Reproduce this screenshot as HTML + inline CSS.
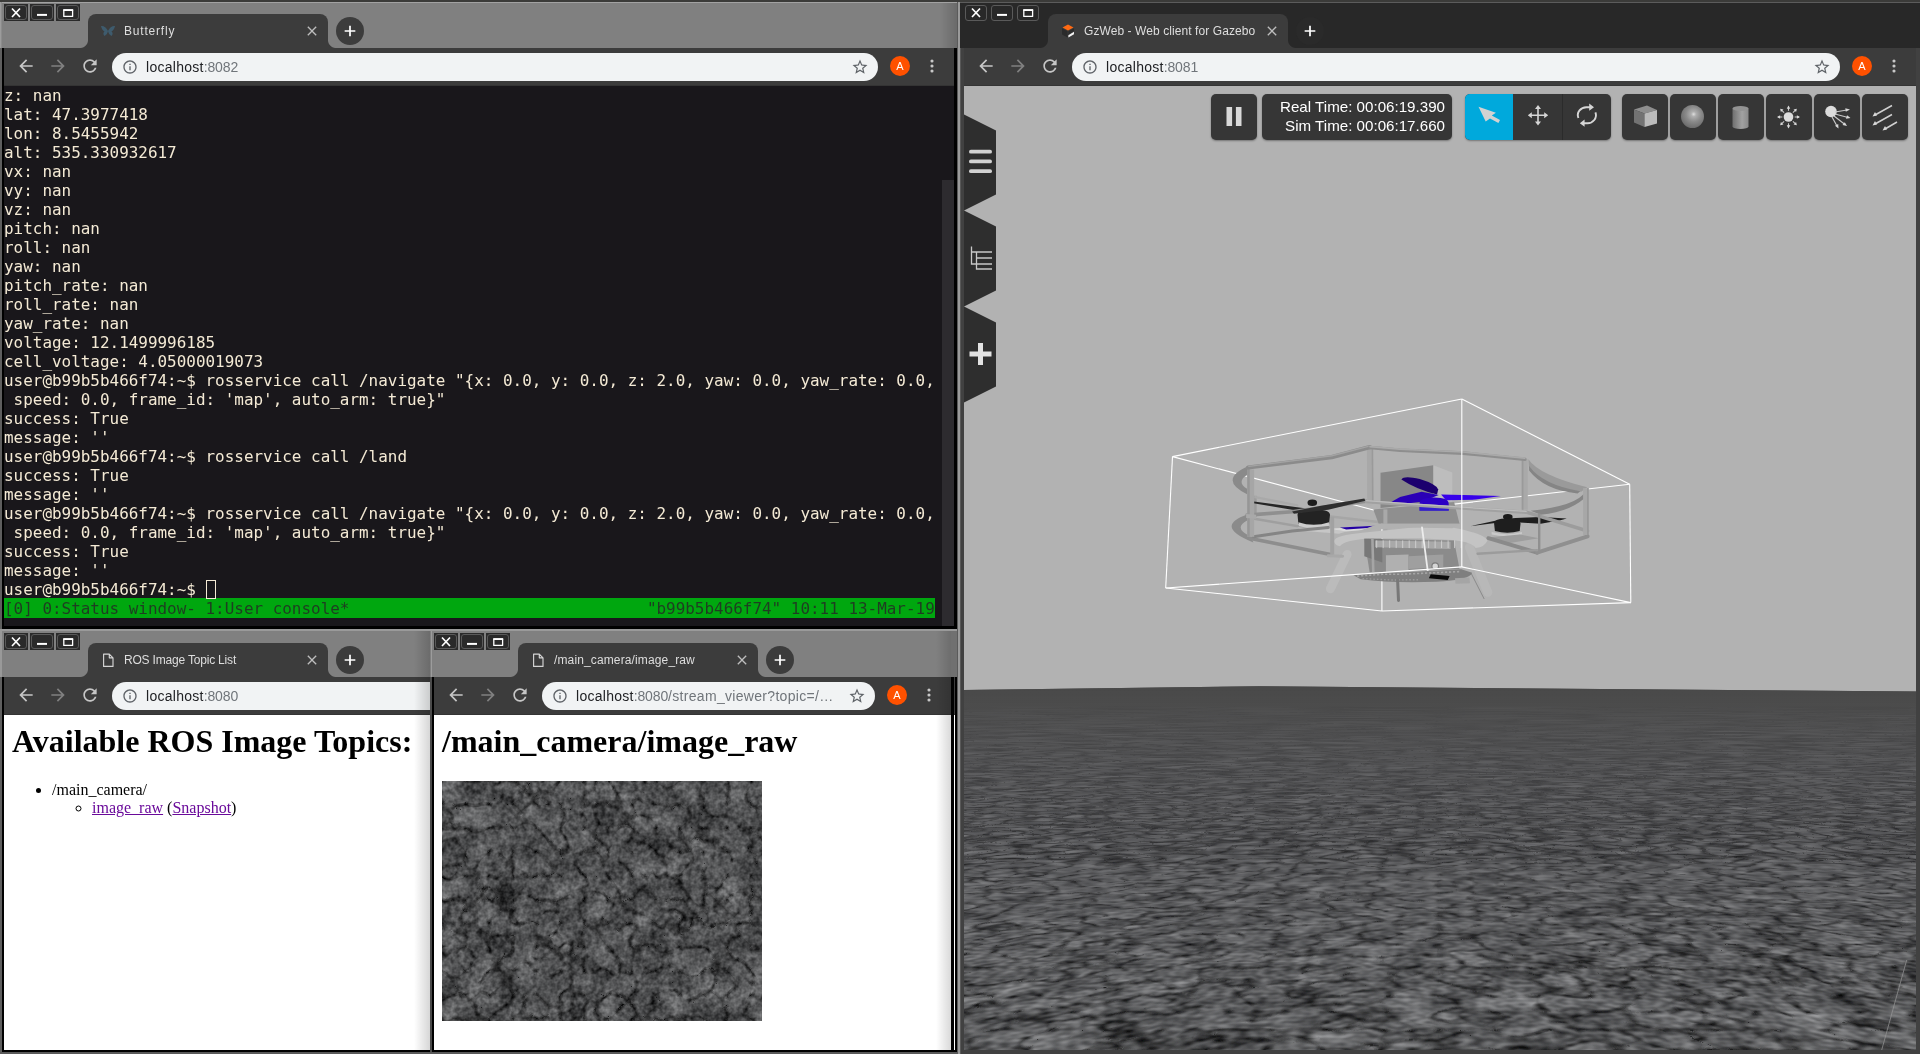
<!DOCTYPE html>
<html lang="en">
<head>
<meta charset="utf-8">
<title>Desktop</title>
<style>
html,body{margin:0;padding:0;}
body{width:1920px;height:1054px;overflow:hidden;background:#3b3b39;position:relative;font-family:"Liberation Sans","DejaVu Sans",sans-serif;}
#root{position:absolute;left:0;top:0;width:1920px;height:1054px;will-change:transform;}
.abs{position:absolute;}
.frame{position:absolute;background:#000;}
.title{position:absolute;height:48px;background:#808080;}
.title.act{background:#282828;}
.win{position:absolute;width:0;height:0;}
.wb{position:absolute;top:4px;width:24px;height:17px;background:#2a2a2a;}
.wb i{position:absolute;left:1px;top:1px;right:1px;bottom:1px;border:1px solid #5a5a5a;box-sizing:border-box;background:#2a2a2a;border-radius:3px;display:block;}
.active .wb{background:none;}
.active .wb i{left:1px;top:1px;right:1px;bottom:0px;background:#282828;}
.wb svg{position:absolute;left:0;top:0;width:24px;height:17px;}
.tab{position:absolute;top:14px;height:34px;background:#3c3c3c;border-radius:8px 8px 0 0;}
.tab:before,.tab:after{content:"";position:absolute;bottom:0;width:8px;height:8px;}
.tab:before{left:-8px;background:radial-gradient(circle at 0 0,rgba(60,60,60,0) 7.500px,#3c3c3c 8.500px);}
.tab:after{right:-8px;background:radial-gradient(circle at 100% 0,rgba(60,60,60,0) 7.500px,#3c3c3c 8.500px);}
.fav{position:absolute;left:12px;top:9px;width:16px;height:16px;}
.tabt{position:absolute;top:9px;font-size:12px;line-height:16px;color:#dedede;white-space:nowrap;}
.tabx{position:absolute;right:8px;top:9px;width:16px;height:16px;}
.newtab{position:absolute;top:17px;width:28px;height:28px;border-radius:14px;background:#3c3c3c;}
.active .newtab{background:#2a2a2a;}
.newtab svg{position:absolute;left:6px;top:6px;width:16px;height:16px;}
.toolbar{position:absolute;left:0;top:48px;height:38px;background:#3c3c3c;border-bottom:1px solid #343434;box-sizing:border-box;}
.nav{position:absolute;top:8px;width:20px;height:20px;}
.pill{position:absolute;top:5px;height:28px;border-radius:14px;background:#f1f3f4;overflow:hidden;}
.pill .info{position:absolute;left:10px;top:6px;width:16px;height:16px;}
.pill .url{position:absolute;left:34px;top:5px;font-size:14px;line-height:18px;color:#202124;white-space:nowrap;}
.pill .url{letter-spacing:0.270px;}
.pill .url span{color:#70757a;letter-spacing:-0.140px;}
.pill .url span i{font-style:normal;letter-spacing:0.310px;}
.pill .star{position:absolute;right:9px;top:5px;width:18px;height:18px;}
.avatar{position:absolute;top:8px;width:20px;height:20px;border-radius:10px;background:#ff5100;color:#fff;font-size:11px;line-height:20px;text-align:center;}
.menu{position:absolute;top:8px;width:20px;height:20px;}
.content{position:absolute;left:0;top:86px;overflow:hidden;}
/* terminal */
.term{background:#19171b;color:#f4ead5;font-family:"DejaVu Sans Mono","Liberation Mono",monospace;font-size:15.945px;line-height:19px;}
.term pre{margin:0;padding:0;font:inherit;white-space:pre;}
.term .st{display:block;margin-top:-1px;padding-top:1px;background:#00a70f;color:#1f3d22;width:97ch;}
.cur{display:inline-block;position:relative;width:0;height:0;vertical-align:top;}
.cur:after{content:"";position:absolute;left:0;top:0;width:8.600px;height:17px;border:1px solid #f4ead5;}
/* web pages */
.page{background:#fff;color:#000;font-family:"Liberation Serif","DejaVu Serif",serif;font-size:16px;}
.page h1{font-size:32px;line-height:37px;margin:8px 0 21px 8px;font-weight:bold;white-space:nowrap;}
.page ul{margin:0;padding-left:40px;line-height:18px;}
.page>ul{margin-left:8px;}
.page a{color:#6a0a9a;text-decoration:underline;}
/* gazebo */
.gz{background:#b2b2b2;}
.gbtn{position:absolute;top:8px;height:46px;background:#363636;border-radius:5px;box-shadow:0 1px 2px rgba(0,0,0,.35);}
.gtime{color:#fff;font-family:"Liberation Sans",sans-serif;font-size:15.150px;line-height:19px;text-align:right;white-space:pre;}
</style>
</head>
<body>
<div id="root">
<!-- desktop / frames behind -->

<div class="frame" style="left:2px;top:677px;width:956px;height:375px;background:#000"></div>
<div class="title" style="left:0px;top:629px;width:958px"></div>
<div class="win w3" style="left:4px;top:629px">
<div class="wb" style="left:0px"><i></i><svg viewBox="0 0 24 17"><path d="M8 4.500l8 8.500M16 4.500l-8 8.500" stroke="#fff" stroke-width="1.700" fill="none"/></svg></div><div class="wb" style="left:26px"><i></i><svg viewBox="0 0 24 17"><path d="M7 10.900h10" stroke="#fff" stroke-width="2" fill="none"/></svg></div><div class="wb" style="left:52px"><i></i><svg viewBox="0 0 24 17"><path d="M7.800 6.400h8.800v6h-8.800z" stroke="#fff" stroke-width="1.300" fill="none" stroke-linejoin="round"/><path d="M7.200 6h10" stroke="#fff" stroke-width="1.800"/></svg></div>
<div class="tab" style="left:84px;width:240px"><svg class="fav" viewBox="0 0 16 16"><path fill="none" stroke="#d4d4d4" stroke-width="1.150" stroke-linejoin="round" d="M3.600 2.100h5.700l3.700 3.700v8.600H3.600zM9.300 2.100v3.700h3.700"/></svg><span class="tabt" style="left:36px"><span style="letter-spacing:-0.19px">ROS Image Topic List</span></span><svg class="tabx" viewBox="0 0 24 24"><path fill="#bdbdbd" d="M19 6.410L17.590 5 12 10.590 6.410 5 5 6.410 10.590 12 5 17.590 6.410 19 12 13.410 17.590 19 19 17.590 13.410 12z"/></svg></div>
<div class="newtab" style="left:332px"><svg viewBox="0 0 24 24"><path fill="#ffffff" d="M20 13.300h-6.700V20h-2.600v-6.700H4v-2.600h6.700V4h2.600v6.700H20v2.600z"/></svg></div>
<div class="toolbar" style="width:951px">
<svg class="nav" style="left:12px" viewBox="0 0 24 24"><path fill="#c6c6c6" d="M20 11H7.83l5.59-5.59L12 4l-8 8 8 8 1.41-1.41L7.83 13H20v-2z"/></svg>
<svg class="nav" style="left:44px" viewBox="0 0 24 24"><path fill="#808080" d="M12 4l-1.41 1.41L16.17 11H4v2h12.17l-5.58 5.59L12 20l8-8z"/></svg>
<svg class="nav" style="left:76px" viewBox="0 0 24 24"><path fill="#c6c6c6" d="M17.65 6.35C16.2 4.9 14.21 4 12 4c-4.42 0-7.99 3.58-7.99 8s3.57 8 7.99 8c3.73 0 6.84-2.55 7.73-6h-2.08c-.82 2.33-3.04 4-5.65 4-3.31 0-6-2.69-6-6s2.69-6 6-6c1.66 0 3.14.69 4.22 1.78L13 11h7V4l-2.35 2.35z"/></svg>
<div class="pill" style="left:108px;width:766.5px"><svg class="info" viewBox="0 0 24 24"><path fill="#5f6368" d="M11 17h2v-6h-2v6zm1-15C6.48 2 2 6.48 2 12s4.48 10 10 10 10-4.48 10-10S17.52 2 12 2zm0 18c-4.41 0-8-3.59-8-8s3.590-8 8-8 8 3.590 8 8-3.590 8-8 8zM11 9h2V7h-2v2z"/></svg><span class="url">localhost<span>:8080</span></span><svg class="star" viewBox="0 0 24 24"><path fill="#5f6368" d="M22 9.240l-7.190-.620L12 2 9.190 8.630 2 9.240l5.460 4.730L5.820 21 12 17.270 18.180 21l-1.630-7.030L22 9.240zM12 15.400l-3.760 2.270 1-4.280-3.320-2.880 4.380-.380L12 6.100l1.710 4.040 4.380.380-3.320 2.880 1 4.280L12 15.400z"/></svg></div>
<div class="avatar" style="left:887px">A</div>
<svg class="menu" style="left:919px" viewBox="0 0 24 24"><circle cx="12" cy="6" r="1.900" fill="#c8c8c8"/><circle cx="12" cy="12" r="1.900" fill="#c8c8c8"/><circle cx="12" cy="18" r="1.900" fill="#c8c8c8"/></svg>
</div>
<div class="content" style="width:951px;height:335px"><div class="page" style="position:absolute;left:0;top:0;width:951px;height:335px;">
<h1>Available ROS Image Topics:</h1>
<ul><li>/main_camera/<ul style="list-style-type:circle"><li><a>image_raw</a> (<a>Snapshot</a>)</li></ul></li></ul>
</div>
</div>
</div>
<div class="frame" style="left:432px;top:677px;width:522px;height:375px;background:#000"></div>
<div class="title" style="left:431px;top:629px;width:523px"></div>
<div class="win w4" style="left:434px;top:629px">
<div class="wb" style="left:0px"><i></i><svg viewBox="0 0 24 17"><path d="M8 4.500l8 8.500M16 4.500l-8 8.500" stroke="#fff" stroke-width="1.700" fill="none"/></svg></div><div class="wb" style="left:26px"><i></i><svg viewBox="0 0 24 17"><path d="M7 10.900h10" stroke="#fff" stroke-width="2" fill="none"/></svg></div><div class="wb" style="left:52px"><i></i><svg viewBox="0 0 24 17"><path d="M7.800 6.400h8.800v6h-8.800z" stroke="#fff" stroke-width="1.300" fill="none" stroke-linejoin="round"/><path d="M7.200 6h10" stroke="#fff" stroke-width="1.800"/></svg></div>
<div class="tab" style="left:84px;width:240px"><svg class="fav" viewBox="0 0 16 16"><path fill="none" stroke="#d4d4d4" stroke-width="1.150" stroke-linejoin="round" d="M3.600 2.100h5.700l3.700 3.700v8.600H3.600zM9.300 2.100v3.700h3.700"/></svg><span class="tabt" style="left:36px"><span style="letter-spacing:0.13px">/main_camera/image_raw</span></span><svg class="tabx" viewBox="0 0 24 24"><path fill="#bdbdbd" d="M19 6.410L17.590 5 12 10.590 6.410 5 5 6.410 10.590 12 5 17.590 6.410 19 12 13.410 17.590 19 19 17.590 13.410 12z"/></svg></div>
<div class="newtab" style="left:332px"><svg viewBox="0 0 24 24"><path fill="#ffffff" d="M20 13.300h-6.700V20h-2.600v-6.700H4v-2.600h6.700V4h2.600v6.700H20v2.600z"/></svg></div>
<div class="toolbar" style="width:517px">
<svg class="nav" style="left:12px" viewBox="0 0 24 24"><path fill="#c6c6c6" d="M20 11H7.83l5.59-5.59L12 4l-8 8 8 8 1.41-1.41L7.83 13H20v-2z"/></svg>
<svg class="nav" style="left:44px" viewBox="0 0 24 24"><path fill="#808080" d="M12 4l-1.41 1.41L16.17 11H4v2h12.17l-5.58 5.59L12 20l8-8z"/></svg>
<svg class="nav" style="left:76px" viewBox="0 0 24 24"><path fill="#c6c6c6" d="M17.65 6.35C16.2 4.9 14.21 4 12 4c-4.42 0-7.99 3.58-7.99 8s3.57 8 7.99 8c3.73 0 6.84-2.55 7.73-6h-2.08c-.82 2.33-3.04 4-5.65 4-3.31 0-6-2.69-6-6s2.69-6 6-6c1.66 0 3.14.69 4.22 1.78L13 11h7V4l-2.35 2.35z"/></svg>
<div class="pill" style="left:108px;width:332.5px"><svg class="info" viewBox="0 0 24 24"><path fill="#5f6368" d="M11 17h2v-6h-2v6zm1-15C6.48 2 2 6.48 2 12s4.48 10 10 10 10-4.48 10-10S17.52 2 12 2zm0 18c-4.41 0-8-3.59-8-8s3.590-8 8-8 8 3.590 8 8-3.590 8-8 8zM11 9h2V7h-2v2z"/></svg><span class="url">localhost<span>:8080<i>/stream_viewer?topic=/…</i></span></span><svg class="star" viewBox="0 0 24 24"><path fill="#5f6368" d="M22 9.240l-7.190-.620L12 2 9.190 8.630 2 9.240l5.460 4.730L5.820 21 12 17.270 18.180 21l-1.630-7.030L22 9.240zM12 15.400l-3.760 2.270 1-4.280-3.320-2.880 4.380-.380L12 6.100l1.710 4.040 4.380.380-3.320 2.880 1 4.280L12 15.400z"/></svg></div>
<div class="avatar" style="left:453px">A</div>
<svg class="menu" style="left:485px" viewBox="0 0 24 24"><circle cx="12" cy="6" r="1.900" fill="#c8c8c8"/><circle cx="12" cy="12" r="1.900" fill="#c8c8c8"/><circle cx="12" cy="18" r="1.900" fill="#c8c8c8"/></svg>
</div>
<div class="content" style="width:517px;height:335px"><div class="page" style="position:absolute;left:0;top:0;width:517px;height:335px;">
<h1>/main_camera/image_raw</h1>
<svg class="abs" style="left:8px;top:66px" width="320" height="240" viewBox="0 0 320 240">
<defs>
<filter id="cam" x="0" y="0" width="100%" height="100%" color-interpolation-filters="sRGB">
<feTurbulence type="fractalNoise" baseFrequency="0.04" numOctaves="2" seed="11" result="lo"/>
<feTurbulence type="turbulence" baseFrequency="0.042" numOctaves="2" seed="5" result="cr"/>
<feTurbulence type="fractalNoise" baseFrequency="0.22" numOctaves="2" seed="2" result="hi"/>
<feColorMatrix in="lo" type="matrix" values="0.36 0 0 0 0.150  0.36 0 0 0 0.153  0.36 0 0 0 0.158  0 0 0 0 1" result="lo2"/>
<feColorMatrix in="cr" type="matrix" values="2.8 0 0 0 0.40  2.8 0 0 0 0.40  2.8 0 0 0 0.40  0 0 0 0 1" result="cr2"/>
<feComposite in="lo2" in2="cr2" operator="arithmetic" k1="1" k2="0" k3="0" k4="0" result="m"/>
<feColorMatrix in="hi" type="matrix" values="1 0 0 0 0  1 0 0 0 0  1 0 0 0 0  0 0 0 0 1" result="hi2"/>
<feComposite in="m" in2="hi2" operator="arithmetic" k1="0" k2="1" k3="0.36" k4="-0.18" result="f"/>
<feGaussianBlur in="f" stdDeviation="0.6"/>
</filter>
</defs>
<rect x="0" y="0" width="320" height="240" fill="#4b4c4e" filter="url(#cam)"/>
</svg>
</div>
</div>
</div>
<div class="frame" style="left:2px;top:48px;width:955px;height:581px;background:#000"></div>
<div class="title" style="left:0px;top:0px;width:957px"></div>
<div class="win w1" style="left:4px;top:0px">
<div class="wb" style="left:0px"><i></i><svg viewBox="0 0 24 17"><path d="M8 4.500l8 8.500M16 4.500l-8 8.500" stroke="#fff" stroke-width="1.700" fill="none"/></svg></div><div class="wb" style="left:26px"><i></i><svg viewBox="0 0 24 17"><path d="M7 10.900h10" stroke="#fff" stroke-width="2" fill="none"/></svg></div><div class="wb" style="left:52px"><i></i><svg viewBox="0 0 24 17"><path d="M7.800 6.400h8.800v6h-8.800z" stroke="#fff" stroke-width="1.300" fill="none" stroke-linejoin="round"/><path d="M7.200 6h10" stroke="#fff" stroke-width="1.800"/></svg></div>
<div class="tab" style="left:84px;width:240px"><svg class="fav" viewBox="0 0 16 16"><path fill="#3e5b6d" d="M8 8C6.500 4.500 3.500 2.500 1 3c.500 2.500 1.500 4.500 3.500 5.500C3 9.500 3 11.500 4.500 13 6.500 12 7.500 10 8 8zM8 8c1.500-3.500 4.500-5.500 7-5-.500 2.500-1.500 4.500-3.500 5.500 1.500 1 1.500 3 0 4.500C9.500 12 8.500 10 8 8z"/></svg>
<span class="tabt" style="left:36px"><span style="letter-spacing:0.8px">Butterfly</span></span><svg class="tabx" viewBox="0 0 24 24"><path fill="#bdbdbd" d="M19 6.410L17.590 5 12 10.590 6.410 5 5 6.410 10.590 12 5 17.590 6.410 19 12 13.410 17.590 19 19 17.590 13.410 12z"/></svg></div>
<div class="newtab" style="left:332px"><svg viewBox="0 0 24 24"><path fill="#ffffff" d="M20 13.300h-6.700V20h-2.600v-6.700H4v-2.600h6.700V4h2.600v6.700H20v2.600z"/></svg></div>
<div class="toolbar" style="width:950px">
<svg class="nav" style="left:12px" viewBox="0 0 24 24"><path fill="#c6c6c6" d="M20 11H7.83l5.59-5.59L12 4l-8 8 8 8 1.41-1.41L7.83 13H20v-2z"/></svg>
<svg class="nav" style="left:44px" viewBox="0 0 24 24"><path fill="#808080" d="M12 4l-1.41 1.41L16.17 11H4v2h12.17l-5.58 5.59L12 20l8-8z"/></svg>
<svg class="nav" style="left:76px" viewBox="0 0 24 24"><path fill="#c6c6c6" d="M17.65 6.35C16.2 4.9 14.21 4 12 4c-4.42 0-7.99 3.58-7.99 8s3.57 8 7.99 8c3.73 0 6.84-2.55 7.73-6h-2.08c-.82 2.33-3.04 4-5.65 4-3.31 0-6-2.69-6-6s2.69-6 6-6c1.66 0 3.14.69 4.22 1.78L13 11h7V4l-2.35 2.35z"/></svg>
<div class="pill" style="left:108px;width:765.5px"><svg class="info" viewBox="0 0 24 24"><path fill="#5f6368" d="M11 17h2v-6h-2v6zm1-15C6.48 2 2 6.48 2 12s4.48 10 10 10 10-4.48 10-10S17.52 2 12 2zm0 18c-4.41 0-8-3.59-8-8s3.590-8 8-8 8 3.590 8 8-3.590 8-8 8zM11 9h2V7h-2v2z"/></svg><span class="url">localhost<span>:8082</span></span><svg class="star" viewBox="0 0 24 24"><path fill="#5f6368" d="M22 9.240l-7.190-.620L12 2 9.190 8.630 2 9.240l5.460 4.730L5.820 21 12 17.270 18.180 21l-1.630-7.030L22 9.240zM12 15.400l-3.760 2.270 1-4.280-3.320-2.880 4.380-.380L12 6.100l1.710 4.040 4.380.380-3.320 2.880 1 4.280L12 15.400z"/></svg></div>
<div class="avatar" style="left:886px">A</div>
<svg class="menu" style="left:918px" viewBox="0 0 24 24"><circle cx="12" cy="6" r="1.900" fill="#c8c8c8"/><circle cx="12" cy="12" r="1.900" fill="#c8c8c8"/><circle cx="12" cy="18" r="1.900" fill="#c8c8c8"/></svg>
</div>
<div class="content" style="width:950px;height:540px"><div class="term" style="position:absolute;left:0;top:0;width:950px;height:540px;">
<pre>z: nan
lat: 47.3977418
lon: 8.5455942
alt: 535.330932617
vx: nan
vy: nan
vz: nan
pitch: nan
roll: nan
yaw: nan
pitch_rate: nan
roll_rate: nan
yaw_rate: nan
voltage: 12.1499996185
cell_voltage: 4.05000019073
user@b99b5b466f74:~$ rosservice call /navigate "{x: 0.0, y: 0.0, z: 2.0, yaw: 0.0, yaw_rate: 0.0,
 speed: 0.0, frame_id: 'map', auto_arm: true}"
success: True
message: ''
user@b99b5b466f74:~$ rosservice call /land
success: True
message: ''
user@b99b5b466f74:~$ rosservice call /navigate "{x: 0.0, y: 0.0, z: 2.0, yaw: 0.0, yaw_rate: 0.0,
 speed: 0.0, frame_id: 'map', auto_arm: true}"
success: True
message: ''
user@b99b5b466f74:~$ <span class="cur"></span>
<span class="st">[0] 0:Status window- 1:User console*                               "b99b5b466f74" 10:11 13-Mar-19</span></pre>
<div class="abs" style="left:938px;top:94px;width:12px;height:446px;background:#2d2b2f"></div>
</div>
</div>
</div>
<div class="frame" style="left:960px;top:48px;width:960px;height:1006px;background:#414141"></div>
<div class="title act" style="left:960px;top:0px;width:960px"></div>
<div class="win w2 active" style="left:964px;top:0px">
<div class="wb" style="left:0px"><i></i><svg viewBox="0 0 24 17"><path d="M8 4.500l8 8.500M16 4.500l-8 8.500" stroke="#fff" stroke-width="1.700" fill="none"/></svg></div><div class="wb" style="left:26px"><i></i><svg viewBox="0 0 24 17"><path d="M7 10.900h10" stroke="#fff" stroke-width="2" fill="none"/></svg></div><div class="wb" style="left:52px"><i></i><svg viewBox="0 0 24 17"><path d="M7.800 6.400h8.800v6h-8.800z" stroke="#fff" stroke-width="1.300" fill="none" stroke-linejoin="round"/><path d="M7.200 6h10" stroke="#fff" stroke-width="1.800"/></svg></div>
<div class="tab" style="left:84px;width:240px"><svg class="fav" viewBox="0 0 16 16"><path fill="#ff6a13" d="M8 1.500l5.500 3L8 7.500l-5.500-3z"/><path fill="#2b2b2b" d="M2 5.300l5.600 3v6.200L2 11.500z"/><path fill="#f2f2f2" d="M8.400 12.200l5.600-3.400v2.400l-5.600 3.300z"/><path fill="#2b2b2b" d="M8.400 8.300l5.600-3v2.800l-5.600 3.400z"/></svg>
<span class="tabt" style="left:36px"><span style="letter-spacing:0.08px">GzWeb - Web client for Gazebo</span></span><svg class="tabx" viewBox="0 0 24 24"><path fill="#bdbdbd" d="M19 6.410L17.590 5 12 10.590 6.410 5 5 6.410 10.590 12 5 17.590 6.410 19 12 13.410 17.590 19 19 17.590 13.410 12z"/></svg></div>
<div class="newtab" style="left:332px"><svg viewBox="0 0 24 24"><path fill="#ffffff" d="M20 13.300h-6.700V20h-2.600v-6.700H4v-2.600h6.700V4h2.600v6.700H20v2.600z"/></svg></div>
<div class="toolbar" style="width:952px">
<svg class="nav" style="left:12px" viewBox="0 0 24 24"><path fill="#c6c6c6" d="M20 11H7.83l5.59-5.59L12 4l-8 8 8 8 1.41-1.41L7.83 13H20v-2z"/></svg>
<svg class="nav" style="left:44px" viewBox="0 0 24 24"><path fill="#808080" d="M12 4l-1.41 1.41L16.17 11H4v2h12.17l-5.58 5.59L12 20l8-8z"/></svg>
<svg class="nav" style="left:76px" viewBox="0 0 24 24"><path fill="#c6c6c6" d="M17.65 6.35C16.2 4.9 14.21 4 12 4c-4.42 0-7.99 3.58-7.99 8s3.57 8 7.99 8c3.73 0 6.84-2.55 7.73-6h-2.08c-.82 2.33-3.04 4-5.65 4-3.31 0-6-2.69-6-6s2.69-6 6-6c1.66 0 3.14.69 4.22 1.78L13 11h7V4l-2.35 2.35z"/></svg>
<div class="pill" style="left:108px;width:767.5px"><svg class="info" viewBox="0 0 24 24"><path fill="#5f6368" d="M11 17h2v-6h-2v6zm1-15C6.48 2 2 6.48 2 12s4.48 10 10 10 10-4.48 10-10S17.52 2 12 2zm0 18c-4.41 0-8-3.59-8-8s3.590-8 8-8 8 3.590 8 8-3.590 8-8 8zM11 9h2V7h-2v2z"/></svg><span class="url">localhost<span>:8081</span></span><svg class="star" viewBox="0 0 24 24"><path fill="#5f6368" d="M22 9.240l-7.190-.620L12 2 9.190 8.630 2 9.240l5.460 4.730L5.820 21 12 17.270 18.180 21l-1.630-7.030L22 9.240zM12 15.400l-3.760 2.270 1-4.280-3.320-2.880 4.380-.380L12 6.100l1.710 4.040 4.380.380-3.320 2.880 1 4.280L12 15.400z"/></svg></div>
<div class="avatar" style="left:888px">A</div>
<svg class="menu" style="left:920px" viewBox="0 0 24 24"><circle cx="12" cy="6" r="1.900" fill="#c8c8c8"/><circle cx="12" cy="12" r="1.900" fill="#c8c8c8"/><circle cx="12" cy="18" r="1.900" fill="#c8c8c8"/></svg>
</div>
<div class="content" style="width:952px;height:964px"><div class="gz" style="position:absolute;left:0;top:0;width:952px;height:964px;overflow:hidden;">
<svg class="abs" style="left:0;top:0" width="952" height="964" viewBox="0 0 952 964">
<defs>
<filter id="g0" x="0" y="0" width="100%" height="100%" color-interpolation-filters="sRGB"><feTurbulence type="fractalNoise" baseFrequency="0.01600" numOctaves="2" seed="21" result="lo"/><feTurbulence type="turbulence" baseFrequency="0.01700" numOctaves="2" seed="24" result="cr"/><feTurbulence type="fractalNoise" baseFrequency="0.09000" numOctaves="1" seed="26" result="hi"/><feColorMatrix in="lo" type="matrix" values="0.40 0 0 0 0.180  0.40 0 0 0 0.183  0.40 0 0 0 0.190  0 0 0 0 1" result="lo2"/><feColorMatrix in="cr" type="matrix" values="2.7 0 0 0 0.38  2.7 0 0 0 0.38  2.7 0 0 0 0.38  0 0 0 0 1" result="cr2"/><feComposite in="lo2" in2="cr2" operator="arithmetic" k1="1" k2="0" k3="0" k4="0" result="m"/><feColorMatrix in="hi" type="matrix" values="1 0 0 0 0  1 0 0 0 0  1 0 0 0 0  0 0 0 0 1" result="hi2"/><feComposite in="m" in2="hi2" operator="arithmetic" k1="0" k2="1" k3="0.44" k4="-0.22"/></filter>
<filter id="g1" x="0" y="0" width="100%" height="100%" color-interpolation-filters="sRGB"><feTurbulence type="fractalNoise" baseFrequency="0.01600" numOctaves="2" seed="21" result="lo"/><feTurbulence type="turbulence" baseFrequency="0.01700" numOctaves="2" seed="24" result="cr"/><feTurbulence type="fractalNoise" baseFrequency="0.09000" numOctaves="1" seed="26" result="hi"/><feColorMatrix in="lo" type="matrix" values="0.40 0 0 0 0.180  0.40 0 0 0 0.183  0.40 0 0 0 0.190  0 0 0 0 1" result="lo2"/><feColorMatrix in="cr" type="matrix" values="2.7 0 0 0 0.38  2.7 0 0 0 0.38  2.7 0 0 0 0.38  0 0 0 0 1" result="cr2"/><feComposite in="lo2" in2="cr2" operator="arithmetic" k1="1" k2="0" k3="0" k4="0" result="m"/><feColorMatrix in="hi" type="matrix" values="1 0 0 0 0  1 0 0 0 0  1 0 0 0 0  0 0 0 0 1" result="hi2"/><feComposite in="m" in2="hi2" operator="arithmetic" k1="0" k2="1" k3="0.44" k4="-0.22"/></filter>
<filter id="g2" x="0" y="0" width="100%" height="100%" color-interpolation-filters="sRGB"><feTurbulence type="fractalNoise" baseFrequency="0.01600" numOctaves="2" seed="21" result="lo"/><feTurbulence type="turbulence" baseFrequency="0.01700" numOctaves="2" seed="24" result="cr"/><feTurbulence type="fractalNoise" baseFrequency="0.09000" numOctaves="1" seed="26" result="hi"/><feColorMatrix in="lo" type="matrix" values="0.40 0 0 0 0.180  0.40 0 0 0 0.183  0.40 0 0 0 0.190  0 0 0 0 1" result="lo2"/><feColorMatrix in="cr" type="matrix" values="2.7 0 0 0 0.38  2.7 0 0 0 0.38  2.7 0 0 0 0.38  0 0 0 0 1" result="cr2"/><feComposite in="lo2" in2="cr2" operator="arithmetic" k1="1" k2="0" k3="0" k4="0" result="m"/><feColorMatrix in="hi" type="matrix" values="1 0 0 0 0  1 0 0 0 0  1 0 0 0 0  0 0 0 0 1" result="hi2"/><feComposite in="m" in2="hi2" operator="arithmetic" k1="0" k2="1" k3="0.44" k4="-0.22"/></filter>
<filter id="g3" x="0" y="0" width="100%" height="100%" color-interpolation-filters="sRGB"><feTurbulence type="fractalNoise" baseFrequency="0.01600" numOctaves="2" seed="21" result="lo"/><feTurbulence type="turbulence" baseFrequency="0.01700" numOctaves="2" seed="24" result="cr"/><feTurbulence type="fractalNoise" baseFrequency="0.09000" numOctaves="1" seed="26" result="hi"/><feColorMatrix in="lo" type="matrix" values="0.40 0 0 0 0.180  0.40 0 0 0 0.183  0.40 0 0 0 0.190  0 0 0 0 1" result="lo2"/><feColorMatrix in="cr" type="matrix" values="2.7 0 0 0 0.38  2.7 0 0 0 0.38  2.7 0 0 0 0.38  0 0 0 0 1" result="cr2"/><feComposite in="lo2" in2="cr2" operator="arithmetic" k1="1" k2="0" k3="0" k4="0" result="m"/><feColorMatrix in="hi" type="matrix" values="1 0 0 0 0  1 0 0 0 0  1 0 0 0 0  0 0 0 0 1" result="hi2"/><feComposite in="m" in2="hi2" operator="arithmetic" k1="0" k2="1" k3="0.44" k4="-0.22"/></filter>
<filter id="g4" x="0" y="0" width="100%" height="100%" color-interpolation-filters="sRGB"><feTurbulence type="fractalNoise" baseFrequency="0.01600" numOctaves="2" seed="21" result="lo"/><feTurbulence type="turbulence" baseFrequency="0.01700" numOctaves="2" seed="24" result="cr"/><feTurbulence type="fractalNoise" baseFrequency="0.09000" numOctaves="1" seed="26" result="hi"/><feColorMatrix in="lo" type="matrix" values="0.40 0 0 0 0.180  0.40 0 0 0 0.183  0.40 0 0 0 0.190  0 0 0 0 1" result="lo2"/><feColorMatrix in="cr" type="matrix" values="2.7 0 0 0 0.38  2.7 0 0 0 0.38  2.7 0 0 0 0.38  0 0 0 0 1" result="cr2"/><feComposite in="lo2" in2="cr2" operator="arithmetic" k1="1" k2="0" k3="0" k4="0" result="m"/><feColorMatrix in="hi" type="matrix" values="1 0 0 0 0  1 0 0 0 0  1 0 0 0 0  0 0 0 0 1" result="hi2"/><feComposite in="m" in2="hi2" operator="arithmetic" k1="0" k2="1" k3="0.44" k4="-0.22"/></filter>
<filter id="g5" x="0" y="0" width="100%" height="100%" color-interpolation-filters="sRGB"><feTurbulence type="fractalNoise" baseFrequency="0.01600" numOctaves="2" seed="21" result="lo"/><feTurbulence type="turbulence" baseFrequency="0.01700" numOctaves="2" seed="24" result="cr"/><feTurbulence type="fractalNoise" baseFrequency="0.09000" numOctaves="1" seed="26" result="hi"/><feColorMatrix in="lo" type="matrix" values="0.40 0 0 0 0.180  0.40 0 0 0 0.183  0.40 0 0 0 0.190  0 0 0 0 1" result="lo2"/><feColorMatrix in="cr" type="matrix" values="2.7 0 0 0 0.38  2.7 0 0 0 0.38  2.7 0 0 0 0.38  0 0 0 0 1" result="cr2"/><feComposite in="lo2" in2="cr2" operator="arithmetic" k1="1" k2="0" k3="0" k4="0" result="m"/><feColorMatrix in="hi" type="matrix" values="1 0 0 0 0  1 0 0 0 0  1 0 0 0 0  0 0 0 0 1" result="hi2"/><feComposite in="m" in2="hi2" operator="arithmetic" k1="0" k2="1" k3="0.44" k4="-0.22"/></filter>
<filter id="g6" x="0" y="0" width="100%" height="100%" color-interpolation-filters="sRGB"><feTurbulence type="fractalNoise" baseFrequency="0.01600" numOctaves="2" seed="21" result="lo"/><feTurbulence type="turbulence" baseFrequency="0.01700" numOctaves="2" seed="24" result="cr"/><feTurbulence type="fractalNoise" baseFrequency="0.08974" numOctaves="1" seed="26" result="hi"/><feColorMatrix in="lo" type="matrix" values="0.40 0 0 0 0.180  0.40 0 0 0 0.183  0.40 0 0 0 0.190  0 0 0 0 1" result="lo2"/><feColorMatrix in="cr" type="matrix" values="2.7 0 0 0 0.38  2.7 0 0 0 0.38  2.7 0 0 0 0.38  0 0 0 0 1" result="cr2"/><feComposite in="lo2" in2="cr2" operator="arithmetic" k1="1" k2="0" k3="0" k4="0" result="m"/><feColorMatrix in="hi" type="matrix" values="1 0 0 0 0  1 0 0 0 0  1 0 0 0 0  0 0 0 0 1" result="hi2"/><feComposite in="m" in2="hi2" operator="arithmetic" k1="0" k2="1" k3="0.44" k4="-0.22"/></filter>
<filter id="g7" x="0" y="0" width="100%" height="100%" color-interpolation-filters="sRGB"><feTurbulence type="fractalNoise" baseFrequency="0.01600" numOctaves="2" seed="21" result="lo"/><feTurbulence type="turbulence" baseFrequency="0.01700" numOctaves="2" seed="24" result="cr"/><feTurbulence type="fractalNoise" baseFrequency="0.08271" numOctaves="1" seed="26" result="hi"/><feColorMatrix in="lo" type="matrix" values="0.40 0 0 0 0.180  0.40 0 0 0 0.183  0.40 0 0 0 0.190  0 0 0 0 1" result="lo2"/><feColorMatrix in="cr" type="matrix" values="2.7 0 0 0 0.38  2.7 0 0 0 0.38  2.7 0 0 0 0.38  0 0 0 0 1" result="cr2"/><feComposite in="lo2" in2="cr2" operator="arithmetic" k1="1" k2="0" k3="0" k4="0" result="m"/><feColorMatrix in="hi" type="matrix" values="1 0 0 0 0  1 0 0 0 0  1 0 0 0 0  0 0 0 0 1" result="hi2"/><feComposite in="m" in2="hi2" operator="arithmetic" k1="0" k2="1" k3="0.44" k4="-0.22"/></filter>
<filter id="g8" x="0" y="0" width="100%" height="100%" color-interpolation-filters="sRGB"><feTurbulence type="fractalNoise" baseFrequency="0.01600" numOctaves="2" seed="21" result="lo"/><feTurbulence type="turbulence" baseFrequency="0.01700" numOctaves="2" seed="24" result="cr"/><feTurbulence type="fractalNoise" baseFrequency="0.07622" numOctaves="1" seed="26" result="hi"/><feColorMatrix in="lo" type="matrix" values="0.40 0 0 0 0.180  0.40 0 0 0 0.183  0.40 0 0 0 0.190  0 0 0 0 1" result="lo2"/><feColorMatrix in="cr" type="matrix" values="2.7 0 0 0 0.38  2.7 0 0 0 0.38  2.7 0 0 0 0.38  0 0 0 0 1" result="cr2"/><feComposite in="lo2" in2="cr2" operator="arithmetic" k1="1" k2="0" k3="0" k4="0" result="m"/><feColorMatrix in="hi" type="matrix" values="1 0 0 0 0  1 0 0 0 0  1 0 0 0 0  0 0 0 0 1" result="hi2"/><feComposite in="m" in2="hi2" operator="arithmetic" k1="0" k2="1" k3="0.44" k4="-0.22"/></filter>
<filter id="g9" x="0" y="0" width="100%" height="100%" color-interpolation-filters="sRGB"><feTurbulence type="fractalNoise" baseFrequency="0.01600" numOctaves="2" seed="21" result="lo"/><feTurbulence type="turbulence" baseFrequency="0.01700" numOctaves="2" seed="24" result="cr"/><feTurbulence type="fractalNoise" baseFrequency="0.07025" numOctaves="1" seed="26" result="hi"/><feColorMatrix in="lo" type="matrix" values="0.40 0 0 0 0.180  0.40 0 0 0 0.183  0.40 0 0 0 0.190  0 0 0 0 1" result="lo2"/><feColorMatrix in="cr" type="matrix" values="2.7 0 0 0 0.38  2.7 0 0 0 0.38  2.7 0 0 0 0.38  0 0 0 0 1" result="cr2"/><feComposite in="lo2" in2="cr2" operator="arithmetic" k1="1" k2="0" k3="0" k4="0" result="m"/><feColorMatrix in="hi" type="matrix" values="1 0 0 0 0  1 0 0 0 0  1 0 0 0 0  0 0 0 0 1" result="hi2"/><feComposite in="m" in2="hi2" operator="arithmetic" k1="0" k2="1" k3="0.44" k4="-0.22"/></filter>
<filter id="g10" x="0" y="0" width="100%" height="100%" color-interpolation-filters="sRGB"><feTurbulence type="fractalNoise" baseFrequency="0.01600" numOctaves="2" seed="21" result="lo"/><feTurbulence type="turbulence" baseFrequency="0.01700" numOctaves="2" seed="24" result="cr"/><feTurbulence type="fractalNoise" baseFrequency="0.06474" numOctaves="1" seed="26" result="hi"/><feColorMatrix in="lo" type="matrix" values="0.40 0 0 0 0.180  0.40 0 0 0 0.183  0.40 0 0 0 0.190  0 0 0 0 1" result="lo2"/><feColorMatrix in="cr" type="matrix" values="2.7 0 0 0 0.38  2.7 0 0 0 0.38  2.7 0 0 0 0.38  0 0 0 0 1" result="cr2"/><feComposite in="lo2" in2="cr2" operator="arithmetic" k1="1" k2="0" k3="0" k4="0" result="m"/><feColorMatrix in="hi" type="matrix" values="1 0 0 0 0  1 0 0 0 0  1 0 0 0 0  0 0 0 0 1" result="hi2"/><feComposite in="m" in2="hi2" operator="arithmetic" k1="0" k2="1" k3="0.44" k4="-0.22"/></filter>
<filter id="g11" x="0" y="0" width="100%" height="100%" color-interpolation-filters="sRGB"><feTurbulence type="fractalNoise" baseFrequency="0.01600" numOctaves="2" seed="21" result="lo"/><feTurbulence type="turbulence" baseFrequency="0.01700" numOctaves="2" seed="24" result="cr"/><feTurbulence type="fractalNoise" baseFrequency="0.05966" numOctaves="1" seed="26" result="hi"/><feColorMatrix in="lo" type="matrix" values="0.40 0 0 0 0.180  0.40 0 0 0 0.183  0.40 0 0 0 0.190  0 0 0 0 1" result="lo2"/><feColorMatrix in="cr" type="matrix" values="2.7 0 0 0 0.38  2.7 0 0 0 0.38  2.7 0 0 0 0.38  0 0 0 0 1" result="cr2"/><feComposite in="lo2" in2="cr2" operator="arithmetic" k1="1" k2="0" k3="0" k4="0" result="m"/><feColorMatrix in="hi" type="matrix" values="1 0 0 0 0  1 0 0 0 0  1 0 0 0 0  0 0 0 0 1" result="hi2"/><feComposite in="m" in2="hi2" operator="arithmetic" k1="0" k2="1" k3="0.44" k4="-0.22"/></filter>
<filter id="g12" x="0" y="0" width="100%" height="100%" color-interpolation-filters="sRGB"><feTurbulence type="fractalNoise" baseFrequency="0.01600" numOctaves="2" seed="21" result="lo"/><feTurbulence type="turbulence" baseFrequency="0.01700" numOctaves="2" seed="24" result="cr"/><feTurbulence type="fractalNoise" baseFrequency="0.05499" numOctaves="1" seed="26" result="hi"/><feColorMatrix in="lo" type="matrix" values="0.40 0 0 0 0.180  0.40 0 0 0 0.183  0.40 0 0 0 0.190  0 0 0 0 1" result="lo2"/><feColorMatrix in="cr" type="matrix" values="2.7 0 0 0 0.38  2.7 0 0 0 0.38  2.7 0 0 0 0.38  0 0 0 0 1" result="cr2"/><feComposite in="lo2" in2="cr2" operator="arithmetic" k1="1" k2="0" k3="0" k4="0" result="m"/><feColorMatrix in="hi" type="matrix" values="1 0 0 0 0  1 0 0 0 0  1 0 0 0 0  0 0 0 0 1" result="hi2"/><feComposite in="m" in2="hi2" operator="arithmetic" k1="0" k2="1" k3="0.44" k4="-0.22"/></filter>
<filter id="g13" x="0" y="0" width="100%" height="100%" color-interpolation-filters="sRGB"><feTurbulence type="fractalNoise" baseFrequency="0.01600" numOctaves="2" seed="21" result="lo"/><feTurbulence type="turbulence" baseFrequency="0.01700" numOctaves="2" seed="24" result="cr"/><feTurbulence type="fractalNoise" baseFrequency="0.05067" numOctaves="1" seed="26" result="hi"/><feColorMatrix in="lo" type="matrix" values="0.40 0 0 0 0.180  0.40 0 0 0 0.183  0.40 0 0 0 0.190  0 0 0 0 1" result="lo2"/><feColorMatrix in="cr" type="matrix" values="2.7 0 0 0 0.38  2.7 0 0 0 0.38  2.7 0 0 0 0.38  0 0 0 0 1" result="cr2"/><feComposite in="lo2" in2="cr2" operator="arithmetic" k1="1" k2="0" k3="0" k4="0" result="m"/><feColorMatrix in="hi" type="matrix" values="1 0 0 0 0  1 0 0 0 0  1 0 0 0 0  0 0 0 0 1" result="hi2"/><feComposite in="m" in2="hi2" operator="arithmetic" k1="0" k2="1" k3="0.44" k4="-0.22"/></filter>
<filter id="g14" x="0" y="0" width="100%" height="100%" color-interpolation-filters="sRGB"><feTurbulence type="fractalNoise" baseFrequency="0.01600" numOctaves="2" seed="21" result="lo"/><feTurbulence type="turbulence" baseFrequency="0.01700" numOctaves="2" seed="24" result="cr"/><feTurbulence type="fractalNoise" baseFrequency="0.04670" numOctaves="1" seed="26" result="hi"/><feColorMatrix in="lo" type="matrix" values="0.40 0 0 0 0.180  0.40 0 0 0 0.183  0.40 0 0 0 0.190  0 0 0 0 1" result="lo2"/><feColorMatrix in="cr" type="matrix" values="2.7 0 0 0 0.38  2.7 0 0 0 0.38  2.7 0 0 0 0.38  0 0 0 0 1" result="cr2"/><feComposite in="lo2" in2="cr2" operator="arithmetic" k1="1" k2="0" k3="0" k4="0" result="m"/><feColorMatrix in="hi" type="matrix" values="1 0 0 0 0  1 0 0 0 0  1 0 0 0 0  0 0 0 0 1" result="hi2"/><feComposite in="m" in2="hi2" operator="arithmetic" k1="0" k2="1" k3="0.44" k4="-0.22"/></filter>
<filter id="g15" x="0" y="0" width="100%" height="100%" color-interpolation-filters="sRGB"><feTurbulence type="fractalNoise" baseFrequency="0.01600" numOctaves="2" seed="21" result="lo"/><feTurbulence type="turbulence" baseFrequency="0.01700" numOctaves="2" seed="24" result="cr"/><feTurbulence type="fractalNoise" baseFrequency="0.04304" numOctaves="1" seed="26" result="hi"/><feColorMatrix in="lo" type="matrix" values="0.40 0 0 0 0.180  0.40 0 0 0 0.183  0.40 0 0 0 0.190  0 0 0 0 1" result="lo2"/><feColorMatrix in="cr" type="matrix" values="2.7 0 0 0 0.38  2.7 0 0 0 0.38  2.7 0 0 0 0.38  0 0 0 0 1" result="cr2"/><feComposite in="lo2" in2="cr2" operator="arithmetic" k1="1" k2="0" k3="0" k4="0" result="m"/><feColorMatrix in="hi" type="matrix" values="1 0 0 0 0  1 0 0 0 0  1 0 0 0 0  0 0 0 0 1" result="hi2"/><feComposite in="m" in2="hi2" operator="arithmetic" k1="0" k2="1" k3="0.44" k4="-0.22"/></filter>
<filter id="g16" x="0" y="0" width="100%" height="100%" color-interpolation-filters="sRGB"><feTurbulence type="fractalNoise" baseFrequency="0.01600" numOctaves="2" seed="21" result="lo"/><feTurbulence type="turbulence" baseFrequency="0.01700" numOctaves="2" seed="24" result="cr"/><feTurbulence type="fractalNoise" baseFrequency="0.03967" numOctaves="1" seed="26" result="hi"/><feColorMatrix in="lo" type="matrix" values="0.40 0 0 0 0.180  0.40 0 0 0 0.183  0.40 0 0 0 0.190  0 0 0 0 1" result="lo2"/><feColorMatrix in="cr" type="matrix" values="2.7 0 0 0 0.38  2.7 0 0 0 0.38  2.7 0 0 0 0.38  0 0 0 0 1" result="cr2"/><feComposite in="lo2" in2="cr2" operator="arithmetic" k1="1" k2="0" k3="0" k4="0" result="m"/><feColorMatrix in="hi" type="matrix" values="1 0 0 0 0  1 0 0 0 0  1 0 0 0 0  0 0 0 0 1" result="hi2"/><feComposite in="m" in2="hi2" operator="arithmetic" k1="0" k2="1" k3="0.44" k4="-0.22"/></filter>
<filter id="g17" x="0" y="0" width="100%" height="100%" color-interpolation-filters="sRGB"><feTurbulence type="fractalNoise" baseFrequency="0.01600" numOctaves="2" seed="21" result="lo"/><feTurbulence type="turbulence" baseFrequency="0.01700" numOctaves="2" seed="24" result="cr"/><feTurbulence type="fractalNoise" baseFrequency="0.03656" numOctaves="1" seed="26" result="hi"/><feColorMatrix in="lo" type="matrix" values="0.40 0 0 0 0.180  0.40 0 0 0 0.183  0.40 0 0 0 0.190  0 0 0 0 1" result="lo2"/><feColorMatrix in="cr" type="matrix" values="2.7 0 0 0 0.38  2.7 0 0 0 0.38  2.7 0 0 0 0.38  0 0 0 0 1" result="cr2"/><feComposite in="lo2" in2="cr2" operator="arithmetic" k1="1" k2="0" k3="0" k4="0" result="m"/><feColorMatrix in="hi" type="matrix" values="1 0 0 0 0  1 0 0 0 0  1 0 0 0 0  0 0 0 0 1" result="hi2"/><feComposite in="m" in2="hi2" operator="arithmetic" k1="0" k2="1" k3="0.44" k4="-0.22"/></filter>
<filter id="g18" x="0" y="0" width="100%" height="100%" color-interpolation-filters="sRGB"><feTurbulence type="fractalNoise" baseFrequency="0.01600" numOctaves="2" seed="21" result="lo"/><feTurbulence type="turbulence" baseFrequency="0.01700" numOctaves="1" seed="24" result="cr"/><feTurbulence type="fractalNoise" baseFrequency="0.03369" numOctaves="1" seed="26" result="hi"/><feColorMatrix in="lo" type="matrix" values="0.40 0 0 0 0.180  0.40 0 0 0 0.183  0.40 0 0 0 0.190  0 0 0 0 1" result="lo2"/><feColorMatrix in="cr" type="matrix" values="2.7 0 0 0 0.38  2.7 0 0 0 0.38  2.7 0 0 0 0.38  0 0 0 0 1" result="cr2"/><feComposite in="lo2" in2="cr2" operator="arithmetic" k1="1" k2="0" k3="0" k4="0" result="m"/><feColorMatrix in="hi" type="matrix" values="1 0 0 0 0  1 0 0 0 0  1 0 0 0 0  0 0 0 0 1" result="hi2"/><feComposite in="m" in2="hi2" operator="arithmetic" k1="0" k2="1" k3="0.44" k4="-0.22"/></filter>
<filter id="g19" x="0" y="0" width="100%" height="100%" color-interpolation-filters="sRGB"><feTurbulence type="fractalNoise" baseFrequency="0.01600" numOctaves="1" seed="21" result="lo"/><feTurbulence type="turbulence" baseFrequency="0.01700" numOctaves="1" seed="24" result="cr"/><feTurbulence type="fractalNoise" baseFrequency="0.03105" numOctaves="1" seed="26" result="hi"/><feColorMatrix in="lo" type="matrix" values="0.40 0 0 0 0.180  0.40 0 0 0 0.183  0.40 0 0 0 0.190  0 0 0 0 1" result="lo2"/><feColorMatrix in="cr" type="matrix" values="2.7 0 0 0 0.38  2.7 0 0 0 0.38  2.7 0 0 0 0.38  0 0 0 0 1" result="cr2"/><feComposite in="lo2" in2="cr2" operator="arithmetic" k1="1" k2="0" k3="0" k4="0" result="m"/><feColorMatrix in="hi" type="matrix" values="1 0 0 0 0  1 0 0 0 0  1 0 0 0 0  0 0 0 0 1" result="hi2"/><feComposite in="m" in2="hi2" operator="arithmetic" k1="0" k2="1" k3="0.44" k4="-0.22"/></filter>
<filter id="g20" x="0" y="0" width="100%" height="100%" color-interpolation-filters="sRGB"><feTurbulence type="fractalNoise" baseFrequency="0.01600" numOctaves="1" seed="21" result="lo"/><feTurbulence type="turbulence" baseFrequency="0.01700" numOctaves="1" seed="24" result="cr"/><feTurbulence type="fractalNoise" baseFrequency="0.02861" numOctaves="1" seed="26" result="hi"/><feColorMatrix in="lo" type="matrix" values="0.40 0 0 0 0.180  0.40 0 0 0 0.183  0.40 0 0 0 0.190  0 0 0 0 1" result="lo2"/><feColorMatrix in="cr" type="matrix" values="2.7 0 0 0 0.38  2.7 0 0 0 0.38  2.7 0 0 0 0.38  0 0 0 0 1" result="cr2"/><feComposite in="lo2" in2="cr2" operator="arithmetic" k1="1" k2="0" k3="0" k4="0" result="m"/><feColorMatrix in="hi" type="matrix" values="1 0 0 0 0  1 0 0 0 0  1 0 0 0 0  0 0 0 0 1" result="hi2"/><feComposite in="m" in2="hi2" operator="arithmetic" k1="0" k2="1" k3="0.44" k4="-0.22"/></filter>
<filter id="g21" x="0" y="0" width="100%" height="100%" color-interpolation-filters="sRGB"><feTurbulence type="fractalNoise" baseFrequency="0.01600" numOctaves="1" seed="21" result="lo"/><feTurbulence type="turbulence" baseFrequency="0.01700" numOctaves="1" seed="24" result="cr"/><feTurbulence type="fractalNoise" baseFrequency="0.02637" numOctaves="1" seed="26" result="hi"/><feColorMatrix in="lo" type="matrix" values="0.40 0 0 0 0.180  0.40 0 0 0 0.183  0.40 0 0 0 0.190  0 0 0 0 1" result="lo2"/><feColorMatrix in="cr" type="matrix" values="2.7 0 0 0 0.38  2.7 0 0 0 0.38  2.7 0 0 0 0.38  0 0 0 0 1" result="cr2"/><feComposite in="lo2" in2="cr2" operator="arithmetic" k1="1" k2="0" k3="0" k4="0" result="m"/><feColorMatrix in="hi" type="matrix" values="1 0 0 0 0  1 0 0 0 0  1 0 0 0 0  0 0 0 0 1" result="hi2"/><feComposite in="m" in2="hi2" operator="arithmetic" k1="0" k2="1" k3="0.44" k4="-0.22"/></filter>
<filter id="g22" x="0" y="0" width="100%" height="100%" color-interpolation-filters="sRGB"><feTurbulence type="fractalNoise" baseFrequency="0.01600" numOctaves="1" seed="21" result="lo"/><feTurbulence type="turbulence" baseFrequency="0.01700" numOctaves="1" seed="24" result="cr"/><feTurbulence type="fractalNoise" baseFrequency="0.02430" numOctaves="1" seed="26" result="hi"/><feColorMatrix in="lo" type="matrix" values="0.40 0 0 0 0.180  0.40 0 0 0 0.183  0.40 0 0 0 0.190  0 0 0 0 1" result="lo2"/><feColorMatrix in="cr" type="matrix" values="2.7 0 0 0 0.38  2.7 0 0 0 0.38  2.7 0 0 0 0.38  0 0 0 0 1" result="cr2"/><feComposite in="lo2" in2="cr2" operator="arithmetic" k1="1" k2="0" k3="0" k4="0" result="m"/><feColorMatrix in="hi" type="matrix" values="1 0 0 0 0  1 0 0 0 0  1 0 0 0 0  0 0 0 0 1" result="hi2"/><feComposite in="m" in2="hi2" operator="arithmetic" k1="0" k2="1" k3="0.44" k4="-0.22"/></filter>
<filter id="g23" x="0" y="0" width="100%" height="100%" color-interpolation-filters="sRGB"><feTurbulence type="fractalNoise" baseFrequency="0.01600" numOctaves="1" seed="21" result="lo"/><feTurbulence type="turbulence" baseFrequency="0.01700" numOctaves="1" seed="24" result="cr"/><feTurbulence type="fractalNoise" baseFrequency="0.02240" numOctaves="1" seed="26" result="hi"/><feColorMatrix in="lo" type="matrix" values="0.40 0 0 0 0.180  0.40 0 0 0 0.183  0.40 0 0 0 0.190  0 0 0 0 1" result="lo2"/><feColorMatrix in="cr" type="matrix" values="2.7 0 0 0 0.38  2.7 0 0 0 0.38  2.7 0 0 0 0.38  0 0 0 0 1" result="cr2"/><feComposite in="lo2" in2="cr2" operator="arithmetic" k1="1" k2="0" k3="0" k4="0" result="m"/><feColorMatrix in="hi" type="matrix" values="1 0 0 0 0  1 0 0 0 0  1 0 0 0 0  0 0 0 0 1" result="hi2"/><feComposite in="m" in2="hi2" operator="arithmetic" k1="0" k2="1" k3="0.44" k4="-0.22"/></filter>
<filter id="g24" x="0" y="0" width="100%" height="100%" color-interpolation-filters="sRGB"><feTurbulence type="fractalNoise" baseFrequency="0.01600" numOctaves="1" seed="21" result="lo"/><feTurbulence type="turbulence" baseFrequency="0.01700" numOctaves="1" seed="24" result="cr"/><feTurbulence type="fractalNoise" baseFrequency="0.02064" numOctaves="1" seed="26" result="hi"/><feColorMatrix in="lo" type="matrix" values="0.40 0 0 0 0.180  0.40 0 0 0 0.183  0.40 0 0 0 0.190  0 0 0 0 1" result="lo2"/><feColorMatrix in="cr" type="matrix" values="2.7 0 0 0 0.38  2.7 0 0 0 0.38  2.7 0 0 0 0.38  0 0 0 0 1" result="cr2"/><feComposite in="lo2" in2="cr2" operator="arithmetic" k1="1" k2="0" k3="0" k4="0" result="m"/><feColorMatrix in="hi" type="matrix" values="1 0 0 0 0  1 0 0 0 0  1 0 0 0 0  0 0 0 0 1" result="hi2"/><feComposite in="m" in2="hi2" operator="arithmetic" k1="0" k2="1" k3="0.44" k4="-0.22"/></filter>
<filter id="g25" x="0" y="0" width="100%" height="100%" color-interpolation-filters="sRGB"><feTurbulence type="fractalNoise" baseFrequency="0.01600" numOctaves="1" seed="21" result="lo"/><feTurbulence type="turbulence" baseFrequency="0.01700" numOctaves="1" seed="24" result="cr"/><feTurbulence type="fractalNoise" baseFrequency="0.01902" numOctaves="1" seed="26" result="hi"/><feColorMatrix in="lo" type="matrix" values="0.40 0 0 0 0.180  0.40 0 0 0 0.183  0.40 0 0 0 0.190  0 0 0 0 1" result="lo2"/><feColorMatrix in="cr" type="matrix" values="2.7 0 0 0 0.38  2.7 0 0 0 0.38  2.7 0 0 0 0.38  0 0 0 0 1" result="cr2"/><feComposite in="lo2" in2="cr2" operator="arithmetic" k1="1" k2="0" k3="0" k4="0" result="m"/><feColorMatrix in="hi" type="matrix" values="1 0 0 0 0  1 0 0 0 0  1 0 0 0 0  0 0 0 0 1" result="hi2"/><feComposite in="m" in2="hi2" operator="arithmetic" k1="0" k2="1" k3="0.44" k4="-0.22"/></filter>
<filter id="g26" x="0" y="0" width="100%" height="100%" color-interpolation-filters="sRGB"><feTurbulence type="fractalNoise" baseFrequency="0.01600" numOctaves="1" seed="21" result="lo"/><feTurbulence type="turbulence" baseFrequency="0.01700" numOctaves="1" seed="24" result="cr"/><feTurbulence type="fractalNoise" baseFrequency="0.01753" numOctaves="1" seed="26" result="hi"/><feColorMatrix in="lo" type="matrix" values="0.40 0 0 0 0.180  0.40 0 0 0 0.183  0.40 0 0 0 0.190  0 0 0 0 1" result="lo2"/><feColorMatrix in="cr" type="matrix" values="2.7 0 0 0 0.38  2.7 0 0 0 0.38  2.7 0 0 0 0.38  0 0 0 0 1" result="cr2"/><feComposite in="lo2" in2="cr2" operator="arithmetic" k1="1" k2="0" k3="0" k4="0" result="m"/><feColorMatrix in="hi" type="matrix" values="1 0 0 0 0  1 0 0 0 0  1 0 0 0 0  0 0 0 0 1" result="hi2"/><feComposite in="m" in2="hi2" operator="arithmetic" k1="0" k2="1" k3="0.44" k4="-0.22"/></filter>
<filter id="g27" x="0" y="0" width="100%" height="100%" color-interpolation-filters="sRGB"><feTurbulence type="fractalNoise" baseFrequency="0.01600" numOctaves="1" seed="21" result="lo"/><feTurbulence type="turbulence" baseFrequency="0.01616" numOctaves="1" seed="24" result="cr"/><feTurbulence type="fractalNoise" baseFrequency="0.01616" numOctaves="1" seed="26" result="hi"/><feColorMatrix in="lo" type="matrix" values="0.40 0 0 0 0.180  0.40 0 0 0 0.183  0.40 0 0 0 0.190  0 0 0 0 1" result="lo2"/><feColorMatrix in="cr" type="matrix" values="2.7 0 0 0 0.38  2.7 0 0 0 0.38  2.7 0 0 0 0.38  0 0 0 0 1" result="cr2"/><feComposite in="lo2" in2="cr2" operator="arithmetic" k1="1" k2="0" k3="0" k4="0" result="m"/><feColorMatrix in="hi" type="matrix" values="1 0 0 0 0  1 0 0 0 0  1 0 0 0 0  0 0 0 0 1" result="hi2"/><feComposite in="m" in2="hi2" operator="arithmetic" k1="0" k2="1" k3="0.44" k4="-0.22"/></filter>
<filter id="g28" x="0" y="0" width="100%" height="100%" color-interpolation-filters="sRGB"><feTurbulence type="fractalNoise" baseFrequency="0.01489" numOctaves="1" seed="21" result="lo"/><feTurbulence type="turbulence" baseFrequency="0.01489" numOctaves="1" seed="24" result="cr"/><feTurbulence type="fractalNoise" baseFrequency="0.01489" numOctaves="1" seed="26" result="hi"/><feColorMatrix in="lo" type="matrix" values="0.40 0 0 0 0.180  0.40 0 0 0 0.183  0.40 0 0 0 0.190  0 0 0 0 1" result="lo2"/><feColorMatrix in="cr" type="matrix" values="2.7 0 0 0 0.38  2.7 0 0 0 0.38  2.7 0 0 0 0.38  0 0 0 0 1" result="cr2"/><feComposite in="lo2" in2="cr2" operator="arithmetic" k1="1" k2="0" k3="0" k4="0" result="m"/><feColorMatrix in="hi" type="matrix" values="1 0 0 0 0  1 0 0 0 0  1 0 0 0 0  0 0 0 0 1" result="hi2"/><feComposite in="m" in2="hi2" operator="arithmetic" k1="0" k2="1" k3="0.44" k4="-0.22"/></filter>
<filter id="g29" x="0" y="0" width="100%" height="100%" color-interpolation-filters="sRGB"><feTurbulence type="fractalNoise" baseFrequency="0.01372" numOctaves="1" seed="21" result="lo"/><feTurbulence type="turbulence" baseFrequency="0.01372" numOctaves="1" seed="24" result="cr"/><feTurbulence type="fractalNoise" baseFrequency="0.01372" numOctaves="1" seed="26" result="hi"/><feColorMatrix in="lo" type="matrix" values="0.40 0 0 0 0.180  0.40 0 0 0 0.183  0.40 0 0 0 0.190  0 0 0 0 1" result="lo2"/><feColorMatrix in="cr" type="matrix" values="2.7 0 0 0 0.38  2.7 0 0 0 0.38  2.7 0 0 0 0.38  0 0 0 0 1" result="cr2"/><feComposite in="lo2" in2="cr2" operator="arithmetic" k1="1" k2="0" k3="0" k4="0" result="m"/><feColorMatrix in="hi" type="matrix" values="1 0 0 0 0  1 0 0 0 0  1 0 0 0 0  0 0 0 0 1" result="hi2"/><feComposite in="m" in2="hi2" operator="arithmetic" k1="0" k2="1" k3="0.44" k4="-0.22"/></filter>
<filter id="g30" x="0" y="0" width="100%" height="100%" color-interpolation-filters="sRGB"><feTurbulence type="fractalNoise" baseFrequency="0.01265" numOctaves="1" seed="21" result="lo"/><feTurbulence type="turbulence" baseFrequency="0.01265" numOctaves="1" seed="24" result="cr"/><feTurbulence type="fractalNoise" baseFrequency="0.01265" numOctaves="1" seed="26" result="hi"/><feColorMatrix in="lo" type="matrix" values="0.40 0 0 0 0.180  0.40 0 0 0 0.183  0.40 0 0 0 0.190  0 0 0 0 1" result="lo2"/><feColorMatrix in="cr" type="matrix" values="2.7 0 0 0 0.38  2.7 0 0 0 0.38  2.7 0 0 0 0.38  0 0 0 0 1" result="cr2"/><feComposite in="lo2" in2="cr2" operator="arithmetic" k1="1" k2="0" k3="0" k4="0" result="m"/><feColorMatrix in="hi" type="matrix" values="1 0 0 0 0  1 0 0 0 0  1 0 0 0 0  0 0 0 0 1" result="hi2"/><feComposite in="m" in2="hi2" operator="arithmetic" k1="0" k2="1" k3="0.44" k4="-0.22"/></filter>
<filter id="g31" x="0" y="0" width="100%" height="100%" color-interpolation-filters="sRGB"><feTurbulence type="fractalNoise" baseFrequency="0.01166" numOctaves="1" seed="21" result="lo"/><feTurbulence type="turbulence" baseFrequency="0.01166" numOctaves="1" seed="24" result="cr"/><feTurbulence type="fractalNoise" baseFrequency="0.01166" numOctaves="1" seed="26" result="hi"/><feColorMatrix in="lo" type="matrix" values="0.40 0 0 0 0.180  0.40 0 0 0 0.183  0.40 0 0 0 0.190  0 0 0 0 1" result="lo2"/><feColorMatrix in="cr" type="matrix" values="2.7 0 0 0 0.38  2.7 0 0 0 0.38  2.7 0 0 0 0.38  0 0 0 0 1" result="cr2"/><feComposite in="lo2" in2="cr2" operator="arithmetic" k1="1" k2="0" k3="0" k4="0" result="m"/><feColorMatrix in="hi" type="matrix" values="1 0 0 0 0  1 0 0 0 0  1 0 0 0 0  0 0 0 0 1" result="hi2"/><feComposite in="m" in2="hi2" operator="arithmetic" k1="0" k2="1" k3="0.44" k4="-0.22"/></filter>
<filter id="g32" x="0" y="0" width="100%" height="100%" color-interpolation-filters="sRGB"><feTurbulence type="fractalNoise" baseFrequency="0.01074" numOctaves="1" seed="21" result="lo"/><feTurbulence type="turbulence" baseFrequency="0.01074" numOctaves="1" seed="24" result="cr"/><feTurbulence type="fractalNoise" baseFrequency="0.01074" numOctaves="1" seed="26" result="hi"/><feColorMatrix in="lo" type="matrix" values="0.40 0 0 0 0.180  0.40 0 0 0 0.183  0.40 0 0 0 0.190  0 0 0 0 1" result="lo2"/><feColorMatrix in="cr" type="matrix" values="2.7 0 0 0 0.38  2.7 0 0 0 0.38  2.7 0 0 0 0.38  0 0 0 0 1" result="cr2"/><feComposite in="lo2" in2="cr2" operator="arithmetic" k1="1" k2="0" k3="0" k4="0" result="m"/><feColorMatrix in="hi" type="matrix" values="1 0 0 0 0  1 0 0 0 0  1 0 0 0 0  0 0 0 0 1" result="hi2"/><feComposite in="m" in2="hi2" operator="arithmetic" k1="0" k2="1" k3="0.44" k4="-0.22"/></filter>
<filter id="g33" x="0" y="0" width="100%" height="100%" color-interpolation-filters="sRGB"><feTurbulence type="fractalNoise" baseFrequency="0.00990" numOctaves="1" seed="21" result="lo"/><feTurbulence type="turbulence" baseFrequency="0.00990" numOctaves="1" seed="24" result="cr"/><feTurbulence type="fractalNoise" baseFrequency="0.00990" numOctaves="1" seed="26" result="hi"/><feColorMatrix in="lo" type="matrix" values="0.40 0 0 0 0.180  0.40 0 0 0 0.183  0.40 0 0 0 0.190  0 0 0 0 1" result="lo2"/><feColorMatrix in="cr" type="matrix" values="2.7 0 0 0 0.38  2.7 0 0 0 0.38  2.7 0 0 0 0.38  0 0 0 0 1" result="cr2"/><feComposite in="lo2" in2="cr2" operator="arithmetic" k1="1" k2="0" k3="0" k4="0" result="m"/><feColorMatrix in="hi" type="matrix" values="1 0 0 0 0  1 0 0 0 0  1 0 0 0 0  0 0 0 0 1" result="hi2"/><feComposite in="m" in2="hi2" operator="arithmetic" k1="0" k2="1" k3="0.44" k4="-0.22"/></filter>
<filter id="g34" x="0" y="0" width="100%" height="100%" color-interpolation-filters="sRGB"><feTurbulence type="fractalNoise" baseFrequency="0.00912" numOctaves="1" seed="21" result="lo"/><feTurbulence type="turbulence" baseFrequency="0.00912" numOctaves="1" seed="24" result="cr"/><feTurbulence type="fractalNoise" baseFrequency="0.00912" numOctaves="1" seed="26" result="hi"/><feColorMatrix in="lo" type="matrix" values="0.40 0 0 0 0.180  0.40 0 0 0 0.183  0.40 0 0 0 0.190  0 0 0 0 1" result="lo2"/><feColorMatrix in="cr" type="matrix" values="2.7 0 0 0 0.38  2.7 0 0 0 0.38  2.7 0 0 0 0.38  0 0 0 0 1" result="cr2"/><feComposite in="lo2" in2="cr2" operator="arithmetic" k1="1" k2="0" k3="0" k4="0" result="m"/><feColorMatrix in="hi" type="matrix" values="1 0 0 0 0  1 0 0 0 0  1 0 0 0 0  0 0 0 0 1" result="hi2"/><feComposite in="m" in2="hi2" operator="arithmetic" k1="0" k2="1" k3="0.44" k4="-0.22"/></filter>
<filter id="g35" x="0" y="0" width="100%" height="100%" color-interpolation-filters="sRGB"><feTurbulence type="fractalNoise" baseFrequency="0.00841" numOctaves="1" seed="21" result="lo"/><feTurbulence type="turbulence" baseFrequency="0.00841" numOctaves="1" seed="24" result="cr"/><feTurbulence type="fractalNoise" baseFrequency="0.00841" numOctaves="1" seed="26" result="hi"/><feColorMatrix in="lo" type="matrix" values="0.40 0 0 0 0.180  0.40 0 0 0 0.183  0.40 0 0 0 0.190  0 0 0 0 1" result="lo2"/><feColorMatrix in="cr" type="matrix" values="2.7 0 0 0 0.38  2.7 0 0 0 0.38  2.7 0 0 0 0.38  0 0 0 0 1" result="cr2"/><feComposite in="lo2" in2="cr2" operator="arithmetic" k1="1" k2="0" k3="0" k4="0" result="m"/><feColorMatrix in="hi" type="matrix" values="1 0 0 0 0  1 0 0 0 0  1 0 0 0 0  0 0 0 0 1" result="hi2"/><feComposite in="m" in2="hi2" operator="arithmetic" k1="0" k2="1" k3="0.44" k4="-0.22"/></filter>
<filter id="g36" x="0" y="0" width="100%" height="100%" color-interpolation-filters="sRGB"><feTurbulence type="fractalNoise" baseFrequency="0.00775" numOctaves="1" seed="21" result="lo"/><feTurbulence type="turbulence" baseFrequency="0.00775" numOctaves="1" seed="24" result="cr"/><feTurbulence type="fractalNoise" baseFrequency="0.00775" numOctaves="1" seed="26" result="hi"/><feColorMatrix in="lo" type="matrix" values="0.40 0 0 0 0.180  0.40 0 0 0 0.183  0.40 0 0 0 0.190  0 0 0 0 1" result="lo2"/><feColorMatrix in="cr" type="matrix" values="2.7 0 0 0 0.38  2.7 0 0 0 0.38  2.7 0 0 0 0.38  0 0 0 0 1" result="cr2"/><feComposite in="lo2" in2="cr2" operator="arithmetic" k1="1" k2="0" k3="0" k4="0" result="m"/><feColorMatrix in="hi" type="matrix" values="1 0 0 0 0  1 0 0 0 0  1 0 0 0 0  0 0 0 0 1" result="hi2"/><feComposite in="m" in2="hi2" operator="arithmetic" k1="0" k2="1" k3="0.44" k4="-0.22"/></filter>
<filter id="g37" x="0" y="0" width="100%" height="100%" color-interpolation-filters="sRGB"><feTurbulence type="fractalNoise" baseFrequency="0.00714" numOctaves="1" seed="21" result="lo"/><feTurbulence type="turbulence" baseFrequency="0.00714" numOctaves="1" seed="24" result="cr"/><feTurbulence type="fractalNoise" baseFrequency="0.00714" numOctaves="1" seed="26" result="hi"/><feColorMatrix in="lo" type="matrix" values="0.40 0 0 0 0.180  0.40 0 0 0 0.183  0.40 0 0 0 0.190  0 0 0 0 1" result="lo2"/><feColorMatrix in="cr" type="matrix" values="2.7 0 0 0 0.38  2.7 0 0 0 0.38  2.7 0 0 0 0.38  0 0 0 0 1" result="cr2"/><feComposite in="lo2" in2="cr2" operator="arithmetic" k1="1" k2="0" k3="0" k4="0" result="m"/><feColorMatrix in="hi" type="matrix" values="1 0 0 0 0  1 0 0 0 0  1 0 0 0 0  0 0 0 0 1" result="hi2"/><feComposite in="m" in2="hi2" operator="arithmetic" k1="0" k2="1" k3="0.44" k4="-0.22"/></filter>
<filter id="g38" x="0" y="0" width="100%" height="100%" color-interpolation-filters="sRGB"><feTurbulence type="fractalNoise" baseFrequency="0.00658" numOctaves="1" seed="21" result="lo"/><feTurbulence type="turbulence" baseFrequency="0.00658" numOctaves="1" seed="24" result="cr"/><feTurbulence type="fractalNoise" baseFrequency="0.00658" numOctaves="1" seed="26" result="hi"/><feColorMatrix in="lo" type="matrix" values="0.40 0 0 0 0.180  0.40 0 0 0 0.183  0.40 0 0 0 0.190  0 0 0 0 1" result="lo2"/><feColorMatrix in="cr" type="matrix" values="2.7 0 0 0 0.38  2.7 0 0 0 0.38  2.7 0 0 0 0.38  0 0 0 0 1" result="cr2"/><feComposite in="lo2" in2="cr2" operator="arithmetic" k1="1" k2="0" k3="0" k4="0" result="m"/><feColorMatrix in="hi" type="matrix" values="1 0 0 0 0  1 0 0 0 0  1 0 0 0 0  0 0 0 0 1" result="hi2"/><feComposite in="m" in2="hi2" operator="arithmetic" k1="0" k2="1" k3="0.44" k4="-0.22"/></filter>
<filter id="g39" x="0" y="0" width="100%" height="100%" color-interpolation-filters="sRGB"><feTurbulence type="fractalNoise" baseFrequency="0.00607" numOctaves="1" seed="21" result="lo"/><feTurbulence type="turbulence" baseFrequency="0.00607" numOctaves="1" seed="24" result="cr"/><feTurbulence type="fractalNoise" baseFrequency="0.00607" numOctaves="1" seed="26" result="hi"/><feColorMatrix in="lo" type="matrix" values="0.40 0 0 0 0.180  0.40 0 0 0 0.183  0.40 0 0 0 0.190  0 0 0 0 1" result="lo2"/><feColorMatrix in="cr" type="matrix" values="2.7 0 0 0 0.38  2.7 0 0 0 0.38  2.7 0 0 0 0.38  0 0 0 0 1" result="cr2"/><feComposite in="lo2" in2="cr2" operator="arithmetic" k1="1" k2="0" k3="0" k4="0" result="m"/><feColorMatrix in="hi" type="matrix" values="1 0 0 0 0  1 0 0 0 0  1 0 0 0 0  0 0 0 0 1" result="hi2"/><feComposite in="m" in2="hi2" operator="arithmetic" k1="0" k2="1" k3="0.44" k4="-0.22"/></filter>
<filter id="g40" x="0" y="0" width="100%" height="100%" color-interpolation-filters="sRGB"><feTurbulence type="fractalNoise" baseFrequency="0.00559" numOctaves="1" seed="21" result="lo"/><feTurbulence type="turbulence" baseFrequency="0.00559" numOctaves="1" seed="24" result="cr"/><feTurbulence type="fractalNoise" baseFrequency="0.00559" numOctaves="1" seed="26" result="hi"/><feColorMatrix in="lo" type="matrix" values="0.40 0 0 0 0.180  0.40 0 0 0 0.183  0.40 0 0 0 0.190  0 0 0 0 1" result="lo2"/><feColorMatrix in="cr" type="matrix" values="2.7 0 0 0 0.38  2.7 0 0 0 0.38  2.7 0 0 0 0.38  0 0 0 0 1" result="cr2"/><feComposite in="lo2" in2="cr2" operator="arithmetic" k1="1" k2="0" k3="0" k4="0" result="m"/><feColorMatrix in="hi" type="matrix" values="1 0 0 0 0  1 0 0 0 0  1 0 0 0 0  0 0 0 0 1" result="hi2"/><feComposite in="m" in2="hi2" operator="arithmetic" k1="0" k2="1" k3="0.44" k4="-0.22"/></filter>
<filter id="g41" x="0" y="0" width="100%" height="100%" color-interpolation-filters="sRGB"><feTurbulence type="fractalNoise" baseFrequency="0.00515" numOctaves="1" seed="21" result="lo"/><feTurbulence type="turbulence" baseFrequency="0.00515" numOctaves="1" seed="24" result="cr"/><feTurbulence type="fractalNoise" baseFrequency="0.00515" numOctaves="1" seed="26" result="hi"/><feColorMatrix in="lo" type="matrix" values="0.40 0 0 0 0.180  0.40 0 0 0 0.183  0.40 0 0 0 0.190  0 0 0 0 1" result="lo2"/><feColorMatrix in="cr" type="matrix" values="2.7 0 0 0 0.38  2.7 0 0 0 0.38  2.7 0 0 0 0.38  0 0 0 0 1" result="cr2"/><feComposite in="lo2" in2="cr2" operator="arithmetic" k1="1" k2="0" k3="0" k4="0" result="m"/><feColorMatrix in="hi" type="matrix" values="1 0 0 0 0  1 0 0 0 0  1 0 0 0 0  0 0 0 0 1" result="hi2"/><feComposite in="m" in2="hi2" operator="arithmetic" k1="0" k2="1" k3="0.44" k4="-0.22"/></filter>
<filter id="g42" x="0" y="0" width="100%" height="100%" color-interpolation-filters="sRGB"><feTurbulence type="fractalNoise" baseFrequency="0.00475" numOctaves="1" seed="21" result="lo"/><feTurbulence type="turbulence" baseFrequency="0.00475" numOctaves="1" seed="24" result="cr"/><feTurbulence type="fractalNoise" baseFrequency="0.00475" numOctaves="1" seed="26" result="hi"/><feColorMatrix in="lo" type="matrix" values="0.40 0 0 0 0.180  0.40 0 0 0 0.183  0.40 0 0 0 0.190  0 0 0 0 1" result="lo2"/><feColorMatrix in="cr" type="matrix" values="2.7 0 0 0 0.38  2.7 0 0 0 0.38  2.7 0 0 0 0.38  0 0 0 0 1" result="cr2"/><feComposite in="lo2" in2="cr2" operator="arithmetic" k1="1" k2="0" k3="0" k4="0" result="m"/><feColorMatrix in="hi" type="matrix" values="1 0 0 0 0  1 0 0 0 0  1 0 0 0 0  0 0 0 0 1" result="hi2"/><feComposite in="m" in2="hi2" operator="arithmetic" k1="0" k2="1" k3="0.44" k4="-0.22"/></filter>
<filter id="g43" x="0" y="0" width="100%" height="100%" color-interpolation-filters="sRGB"><feTurbulence type="fractalNoise" baseFrequency="0.00438" numOctaves="1" seed="21" result="lo"/><feTurbulence type="turbulence" baseFrequency="0.00438" numOctaves="1" seed="24" result="cr"/><feTurbulence type="fractalNoise" baseFrequency="0.00438" numOctaves="1" seed="26" result="hi"/><feColorMatrix in="lo" type="matrix" values="0.40 0 0 0 0.180  0.40 0 0 0 0.183  0.40 0 0 0 0.190  0 0 0 0 1" result="lo2"/><feColorMatrix in="cr" type="matrix" values="2.7 0 0 0 0.38  2.7 0 0 0 0.38  2.7 0 0 0 0.38  0 0 0 0 1" result="cr2"/><feComposite in="lo2" in2="cr2" operator="arithmetic" k1="1" k2="0" k3="0" k4="0" result="m"/><feColorMatrix in="hi" type="matrix" values="1 0 0 0 0  1 0 0 0 0  1 0 0 0 0  0 0 0 0 1" result="hi2"/><feComposite in="m" in2="hi2" operator="arithmetic" k1="0" k2="1" k3="0.44" k4="-0.22"/></filter>
<filter id="g44" x="0" y="0" width="100%" height="100%" color-interpolation-filters="sRGB"><feTurbulence type="fractalNoise" baseFrequency="0.00403" numOctaves="1" seed="21" result="lo"/><feTurbulence type="turbulence" baseFrequency="0.00403" numOctaves="1" seed="24" result="cr"/><feTurbulence type="fractalNoise" baseFrequency="0.00403" numOctaves="1" seed="26" result="hi"/><feColorMatrix in="lo" type="matrix" values="0.40 0 0 0 0.180  0.40 0 0 0 0.183  0.40 0 0 0 0.190  0 0 0 0 1" result="lo2"/><feColorMatrix in="cr" type="matrix" values="2.7 0 0 0 0.38  2.7 0 0 0 0.38  2.7 0 0 0 0.38  0 0 0 0 1" result="cr2"/><feComposite in="lo2" in2="cr2" operator="arithmetic" k1="1" k2="0" k3="0" k4="0" result="m"/><feColorMatrix in="hi" type="matrix" values="1 0 0 0 0  1 0 0 0 0  1 0 0 0 0  0 0 0 0 1" result="hi2"/><feComposite in="m" in2="hi2" operator="arithmetic" k1="0" k2="1" k3="0.44" k4="-0.22"/></filter>
<filter id="g45" x="0" y="0" width="100%" height="100%" color-interpolation-filters="sRGB"><feTurbulence type="fractalNoise" baseFrequency="0.00372" numOctaves="1" seed="21" result="lo"/><feTurbulence type="turbulence" baseFrequency="0.00372" numOctaves="1" seed="24" result="cr"/><feTurbulence type="fractalNoise" baseFrequency="0.00372" numOctaves="1" seed="26" result="hi"/><feColorMatrix in="lo" type="matrix" values="0.40 0 0 0 0.180  0.40 0 0 0 0.183  0.40 0 0 0 0.190  0 0 0 0 1" result="lo2"/><feColorMatrix in="cr" type="matrix" values="2.7 0 0 0 0.38  2.7 0 0 0 0.38  2.7 0 0 0 0.38  0 0 0 0 1" result="cr2"/><feComposite in="lo2" in2="cr2" operator="arithmetic" k1="1" k2="0" k3="0" k4="0" result="m"/><feColorMatrix in="hi" type="matrix" values="1 0 0 0 0  1 0 0 0 0  1 0 0 0 0  0 0 0 0 1" result="hi2"/><feComposite in="m" in2="hi2" operator="arithmetic" k1="0" k2="1" k3="0.44" k4="-0.22"/></filter>
<filter id="g46" x="0" y="0" width="100%" height="100%" color-interpolation-filters="sRGB"><feTurbulence type="fractalNoise" baseFrequency="0.00343" numOctaves="1" seed="21" result="lo"/><feTurbulence type="turbulence" baseFrequency="0.00343" numOctaves="1" seed="24" result="cr"/><feTurbulence type="fractalNoise" baseFrequency="0.00343" numOctaves="1" seed="26" result="hi"/><feColorMatrix in="lo" type="matrix" values="0.40 0 0 0 0.180  0.40 0 0 0 0.183  0.40 0 0 0 0.190  0 0 0 0 1" result="lo2"/><feColorMatrix in="cr" type="matrix" values="2.7 0 0 0 0.38  2.7 0 0 0 0.38  2.7 0 0 0 0.38  0 0 0 0 1" result="cr2"/><feComposite in="lo2" in2="cr2" operator="arithmetic" k1="1" k2="0" k3="0" k4="0" result="m"/><feColorMatrix in="hi" type="matrix" values="1 0 0 0 0  1 0 0 0 0  1 0 0 0 0  0 0 0 0 1" result="hi2"/><feComposite in="m" in2="hi2" operator="arithmetic" k1="0" k2="1" k3="0.44" k4="-0.22"/></filter>
<filter id="g47" x="0" y="0" width="100%" height="100%" color-interpolation-filters="sRGB"><feTurbulence type="fractalNoise" baseFrequency="0.00316" numOctaves="1" seed="21" result="lo"/><feTurbulence type="turbulence" baseFrequency="0.00316" numOctaves="1" seed="24" result="cr"/><feTurbulence type="fractalNoise" baseFrequency="0.00316" numOctaves="1" seed="26" result="hi"/><feColorMatrix in="lo" type="matrix" values="0.40 0 0 0 0.180  0.40 0 0 0 0.183  0.40 0 0 0 0.190  0 0 0 0 1" result="lo2"/><feColorMatrix in="cr" type="matrix" values="2.7 0 0 0 0.38  2.7 0 0 0 0.38  2.7 0 0 0 0.38  0 0 0 0 1" result="cr2"/><feComposite in="lo2" in2="cr2" operator="arithmetic" k1="1" k2="0" k3="0" k4="0" result="m"/><feColorMatrix in="hi" type="matrix" values="1 0 0 0 0  1 0 0 0 0  1 0 0 0 0  0 0 0 0 1" result="hi2"/><feComposite in="m" in2="hi2" operator="arithmetic" k1="0" k2="1" k3="0.44" k4="-0.22"/></filter>
<filter id="g48" x="0" y="0" width="100%" height="100%" color-interpolation-filters="sRGB"><feTurbulence type="fractalNoise" baseFrequency="0.00291" numOctaves="1" seed="21" result="lo"/><feTurbulence type="turbulence" baseFrequency="0.00291" numOctaves="1" seed="24" result="cr"/><feTurbulence type="fractalNoise" baseFrequency="0.00291" numOctaves="1" seed="26" result="hi"/><feColorMatrix in="lo" type="matrix" values="0.40 0 0 0 0.180  0.40 0 0 0 0.183  0.40 0 0 0 0.190  0 0 0 0 1" result="lo2"/><feColorMatrix in="cr" type="matrix" values="2.7 0 0 0 0.38  2.7 0 0 0 0.38  2.7 0 0 0 0.38  0 0 0 0 1" result="cr2"/><feComposite in="lo2" in2="cr2" operator="arithmetic" k1="1" k2="0" k3="0" k4="0" result="m"/><feColorMatrix in="hi" type="matrix" values="1 0 0 0 0  1 0 0 0 0  1 0 0 0 0  0 0 0 0 1" result="hi2"/><feComposite in="m" in2="hi2" operator="arithmetic" k1="0" k2="1" k3="0.44" k4="-0.22"/></filter>
<filter id="g49" x="0" y="0" width="100%" height="100%" color-interpolation-filters="sRGB"><feTurbulence type="fractalNoise" baseFrequency="0.00268" numOctaves="1" seed="21" result="lo"/><feTurbulence type="turbulence" baseFrequency="0.00268" numOctaves="1" seed="24" result="cr"/><feTurbulence type="fractalNoise" baseFrequency="0.00268" numOctaves="1" seed="26" result="hi"/><feColorMatrix in="lo" type="matrix" values="0.40 0 0 0 0.180  0.40 0 0 0 0.183  0.40 0 0 0 0.190  0 0 0 0 1" result="lo2"/><feColorMatrix in="cr" type="matrix" values="2.7 0 0 0 0.38  2.7 0 0 0 0.38  2.7 0 0 0 0.38  0 0 0 0 1" result="cr2"/><feComposite in="lo2" in2="cr2" operator="arithmetic" k1="1" k2="0" k3="0" k4="0" result="m"/><feColorMatrix in="hi" type="matrix" values="1 0 0 0 0  1 0 0 0 0  1 0 0 0 0  0 0 0 0 1" result="hi2"/><feComposite in="m" in2="hi2" operator="arithmetic" k1="0" k2="1" k3="0.44" k4="-0.22"/></filter>
<filter id="g50" x="0" y="0" width="100%" height="100%" color-interpolation-filters="sRGB"><feTurbulence type="fractalNoise" baseFrequency="0.00247" numOctaves="1" seed="21" result="lo"/><feTurbulence type="turbulence" baseFrequency="0.00247" numOctaves="1" seed="24" result="cr"/><feTurbulence type="fractalNoise" baseFrequency="0.00247" numOctaves="1" seed="26" result="hi"/><feColorMatrix in="lo" type="matrix" values="0.40 0 0 0 0.180  0.40 0 0 0 0.183  0.40 0 0 0 0.190  0 0 0 0 1" result="lo2"/><feColorMatrix in="cr" type="matrix" values="2.7 0 0 0 0.38  2.7 0 0 0 0.38  2.7 0 0 0 0.38  0 0 0 0 1" result="cr2"/><feComposite in="lo2" in2="cr2" operator="arithmetic" k1="1" k2="0" k3="0" k4="0" result="m"/><feColorMatrix in="hi" type="matrix" values="1 0 0 0 0  1 0 0 0 0  1 0 0 0 0  0 0 0 0 1" result="hi2"/><feComposite in="m" in2="hi2" operator="arithmetic" k1="0" k2="1" k3="0.44" k4="-0.22"/></filter>
<filter id="g51" x="0" y="0" width="100%" height="100%" color-interpolation-filters="sRGB"><feTurbulence type="fractalNoise" baseFrequency="0.00228" numOctaves="1" seed="21" result="lo"/><feTurbulence type="turbulence" baseFrequency="0.00228" numOctaves="1" seed="24" result="cr"/><feTurbulence type="fractalNoise" baseFrequency="0.00228" numOctaves="1" seed="26" result="hi"/><feColorMatrix in="lo" type="matrix" values="0.40 0 0 0 0.180  0.40 0 0 0 0.183  0.40 0 0 0 0.190  0 0 0 0 1" result="lo2"/><feColorMatrix in="cr" type="matrix" values="2.7 0 0 0 0.38  2.7 0 0 0 0.38  2.7 0 0 0 0.38  0 0 0 0 1" result="cr2"/><feComposite in="lo2" in2="cr2" operator="arithmetic" k1="1" k2="0" k3="0" k4="0" result="m"/><feColorMatrix in="hi" type="matrix" values="1 0 0 0 0  1 0 0 0 0  1 0 0 0 0  0 0 0 0 1" result="hi2"/><feComposite in="m" in2="hi2" operator="arithmetic" k1="0" k2="1" k3="0.44" k4="-0.22"/></filter>
<filter id="g52" x="0" y="0" width="100%" height="100%" color-interpolation-filters="sRGB"><feTurbulence type="fractalNoise" baseFrequency="0.00210" numOctaves="1" seed="21" result="lo"/><feTurbulence type="turbulence" baseFrequency="0.00210" numOctaves="1" seed="24" result="cr"/><feTurbulence type="fractalNoise" baseFrequency="0.00210" numOctaves="1" seed="26" result="hi"/><feColorMatrix in="lo" type="matrix" values="0.40 0 0 0 0.180  0.40 0 0 0 0.183  0.40 0 0 0 0.190  0 0 0 0 1" result="lo2"/><feColorMatrix in="cr" type="matrix" values="2.7 0 0 0 0.38  2.7 0 0 0 0.38  2.7 0 0 0 0.38  0 0 0 0 1" result="cr2"/><feComposite in="lo2" in2="cr2" operator="arithmetic" k1="1" k2="0" k3="0" k4="0" result="m"/><feColorMatrix in="hi" type="matrix" values="1 0 0 0 0  1 0 0 0 0  1 0 0 0 0  0 0 0 0 1" result="hi2"/><feComposite in="m" in2="hi2" operator="arithmetic" k1="0" k2="1" k3="0.44" k4="-0.22"/></filter>
<filter id="g53" x="0" y="0" width="100%" height="100%" color-interpolation-filters="sRGB"><feTurbulence type="fractalNoise" baseFrequency="0.00193" numOctaves="1" seed="21" result="lo"/><feTurbulence type="turbulence" baseFrequency="0.00193" numOctaves="1" seed="24" result="cr"/><feTurbulence type="fractalNoise" baseFrequency="0.00193" numOctaves="1" seed="26" result="hi"/><feColorMatrix in="lo" type="matrix" values="0.40 0 0 0 0.180  0.40 0 0 0 0.183  0.40 0 0 0 0.190  0 0 0 0 1" result="lo2"/><feColorMatrix in="cr" type="matrix" values="2.7 0 0 0 0.38  2.7 0 0 0 0.38  2.7 0 0 0 0.38  0 0 0 0 1" result="cr2"/><feComposite in="lo2" in2="cr2" operator="arithmetic" k1="1" k2="0" k3="0" k4="0" result="m"/><feColorMatrix in="hi" type="matrix" values="1 0 0 0 0  1 0 0 0 0  1 0 0 0 0  0 0 0 0 1" result="hi2"/><feComposite in="m" in2="hi2" operator="arithmetic" k1="0" k2="1" k3="0.44" k4="-0.22"/></filter>
<filter id="g54" x="0" y="0" width="100%" height="100%" color-interpolation-filters="sRGB"><feTurbulence type="fractalNoise" baseFrequency="0.00178" numOctaves="1" seed="21" result="lo"/><feTurbulence type="turbulence" baseFrequency="0.00178" numOctaves="1" seed="24" result="cr"/><feTurbulence type="fractalNoise" baseFrequency="0.00178" numOctaves="1" seed="26" result="hi"/><feColorMatrix in="lo" type="matrix" values="0.40 0 0 0 0.180  0.40 0 0 0 0.183  0.40 0 0 0 0.190  0 0 0 0 1" result="lo2"/><feColorMatrix in="cr" type="matrix" values="2.7 0 0 0 0.38  2.7 0 0 0 0.38  2.7 0 0 0 0.38  0 0 0 0 1" result="cr2"/><feComposite in="lo2" in2="cr2" operator="arithmetic" k1="1" k2="0" k3="0" k4="0" result="m"/><feColorMatrix in="hi" type="matrix" values="1 0 0 0 0  1 0 0 0 0  1 0 0 0 0  0 0 0 0 1" result="hi2"/><feComposite in="m" in2="hi2" operator="arithmetic" k1="0" k2="1" k3="0.44" k4="-0.22"/></filter>
<filter id="g55" x="0" y="0" width="100%" height="100%" color-interpolation-filters="sRGB"><feTurbulence type="fractalNoise" baseFrequency="0.00164" numOctaves="1" seed="21" result="lo"/><feTurbulence type="turbulence" baseFrequency="0.00164" numOctaves="1" seed="24" result="cr"/><feTurbulence type="fractalNoise" baseFrequency="0.00164" numOctaves="1" seed="26" result="hi"/><feColorMatrix in="lo" type="matrix" values="0.40 0 0 0 0.180  0.40 0 0 0 0.183  0.40 0 0 0 0.190  0 0 0 0 1" result="lo2"/><feColorMatrix in="cr" type="matrix" values="2.7 0 0 0 0.38  2.7 0 0 0 0.38  2.7 0 0 0 0.38  0 0 0 0 1" result="cr2"/><feComposite in="lo2" in2="cr2" operator="arithmetic" k1="1" k2="0" k3="0" k4="0" result="m"/><feColorMatrix in="hi" type="matrix" values="1 0 0 0 0  1 0 0 0 0  1 0 0 0 0  0 0 0 0 1" result="hi2"/><feComposite in="m" in2="hi2" operator="arithmetic" k1="0" k2="1" k3="0.44" k4="-0.22"/></filter>
<filter id="g56" x="0" y="0" width="100%" height="100%" color-interpolation-filters="sRGB"><feTurbulence type="fractalNoise" baseFrequency="0.00151" numOctaves="1" seed="21" result="lo"/><feTurbulence type="turbulence" baseFrequency="0.00151" numOctaves="1" seed="24" result="cr"/><feTurbulence type="fractalNoise" baseFrequency="0.00151" numOctaves="1" seed="26" result="hi"/><feColorMatrix in="lo" type="matrix" values="0.40 0 0 0 0.180  0.40 0 0 0 0.183  0.40 0 0 0 0.190  0 0 0 0 1" result="lo2"/><feColorMatrix in="cr" type="matrix" values="2.7 0 0 0 0.38  2.7 0 0 0 0.38  2.7 0 0 0 0.38  0 0 0 0 1" result="cr2"/><feComposite in="lo2" in2="cr2" operator="arithmetic" k1="1" k2="0" k3="0" k4="0" result="m"/><feColorMatrix in="hi" type="matrix" values="1 0 0 0 0  1 0 0 0 0  1 0 0 0 0  0 0 0 0 1" result="hi2"/><feComposite in="m" in2="hi2" operator="arithmetic" k1="0" k2="1" k3="0.44" k4="-0.22"/></filter>
<filter id="g57" x="0" y="0" width="100%" height="100%" color-interpolation-filters="sRGB"><feTurbulence type="fractalNoise" baseFrequency="0.00139" numOctaves="1" seed="21" result="lo"/><feTurbulence type="turbulence" baseFrequency="0.00139" numOctaves="1" seed="24" result="cr"/><feTurbulence type="fractalNoise" baseFrequency="0.00139" numOctaves="1" seed="26" result="hi"/><feColorMatrix in="lo" type="matrix" values="0.40 0 0 0 0.180  0.40 0 0 0 0.183  0.40 0 0 0 0.190  0 0 0 0 1" result="lo2"/><feColorMatrix in="cr" type="matrix" values="2.7 0 0 0 0.38  2.7 0 0 0 0.38  2.7 0 0 0 0.38  0 0 0 0 1" result="cr2"/><feComposite in="lo2" in2="cr2" operator="arithmetic" k1="1" k2="0" k3="0" k4="0" result="m"/><feColorMatrix in="hi" type="matrix" values="1 0 0 0 0  1 0 0 0 0  1 0 0 0 0  0 0 0 0 1" result="hi2"/><feComposite in="m" in2="hi2" operator="arithmetic" k1="0" k2="1" k3="0.44" k4="-0.22"/></filter>
<filter id="g58" x="0" y="0" width="100%" height="100%" color-interpolation-filters="sRGB"><feTurbulence type="fractalNoise" baseFrequency="0.00127" numOctaves="1" seed="21" result="lo"/><feTurbulence type="turbulence" baseFrequency="0.00127" numOctaves="1" seed="24" result="cr"/><feTurbulence type="fractalNoise" baseFrequency="0.00127" numOctaves="1" seed="26" result="hi"/><feColorMatrix in="lo" type="matrix" values="0.40 0 0 0 0.180  0.40 0 0 0 0.183  0.40 0 0 0 0.190  0 0 0 0 1" result="lo2"/><feColorMatrix in="cr" type="matrix" values="2.7 0 0 0 0.38  2.7 0 0 0 0.38  2.7 0 0 0 0.38  0 0 0 0 1" result="cr2"/><feComposite in="lo2" in2="cr2" operator="arithmetic" k1="1" k2="0" k3="0" k4="0" result="m"/><feColorMatrix in="hi" type="matrix" values="1 0 0 0 0  1 0 0 0 0  1 0 0 0 0  0 0 0 0 1" result="hi2"/><feComposite in="m" in2="hi2" operator="arithmetic" k1="0" k2="1" k3="0.44" k4="-0.22"/></filter>
<filter id="g59" x="0" y="0" width="100%" height="100%" color-interpolation-filters="sRGB"><feTurbulence type="fractalNoise" baseFrequency="0.00116" numOctaves="1" seed="21" result="lo"/><feTurbulence type="turbulence" baseFrequency="0.00116" numOctaves="1" seed="24" result="cr"/><feTurbulence type="fractalNoise" baseFrequency="0.00116" numOctaves="1" seed="26" result="hi"/><feColorMatrix in="lo" type="matrix" values="0.40 0 0 0 0.180  0.40 0 0 0 0.183  0.40 0 0 0 0.190  0 0 0 0 1" result="lo2"/><feColorMatrix in="cr" type="matrix" values="2.7 0 0 0 0.38  2.7 0 0 0 0.38  2.7 0 0 0 0.38  0 0 0 0 1" result="cr2"/><feComposite in="lo2" in2="cr2" operator="arithmetic" k1="1" k2="0" k3="0" k4="0" result="m"/><feColorMatrix in="hi" type="matrix" values="1 0 0 0 0  1 0 0 0 0  1 0 0 0 0  0 0 0 0 1" result="hi2"/><feComposite in="m" in2="hi2" operator="arithmetic" k1="0" k2="1" k3="0.44" k4="-0.22"/></filter>
<filter id="g60" x="0" y="0" width="100%" height="100%" color-interpolation-filters="sRGB"><feTurbulence type="fractalNoise" baseFrequency="0.00105" numOctaves="1" seed="21" result="lo"/><feTurbulence type="turbulence" baseFrequency="0.00105" numOctaves="1" seed="24" result="cr"/><feTurbulence type="fractalNoise" baseFrequency="0.00105" numOctaves="1" seed="26" result="hi"/><feColorMatrix in="lo" type="matrix" values="0.40 0 0 0 0.180  0.40 0 0 0 0.183  0.40 0 0 0 0.190  0 0 0 0 1" result="lo2"/><feColorMatrix in="cr" type="matrix" values="2.7 0 0 0 0.38  2.7 0 0 0 0.38  2.7 0 0 0 0.38  0 0 0 0 1" result="cr2"/><feComposite in="lo2" in2="cr2" operator="arithmetic" k1="1" k2="0" k3="0" k4="0" result="m"/><feColorMatrix in="hi" type="matrix" values="1 0 0 0 0  1 0 0 0 0  1 0 0 0 0  0 0 0 0 1" result="hi2"/><feComposite in="m" in2="hi2" operator="arithmetic" k1="0" k2="1" k3="0.44" k4="-0.22"/></filter>
<filter id="g61" x="0" y="0" width="100%" height="100%" color-interpolation-filters="sRGB"><feTurbulence type="fractalNoise" baseFrequency="0.00095" numOctaves="1" seed="21" result="lo"/><feTurbulence type="turbulence" baseFrequency="0.00095" numOctaves="1" seed="24" result="cr"/><feTurbulence type="fractalNoise" baseFrequency="0.00095" numOctaves="1" seed="26" result="hi"/><feColorMatrix in="lo" type="matrix" values="0.40 0 0 0 0.180  0.40 0 0 0 0.183  0.40 0 0 0 0.190  0 0 0 0 1" result="lo2"/><feColorMatrix in="cr" type="matrix" values="2.7 0 0 0 0.38  2.7 0 0 0 0.38  2.7 0 0 0 0.38  0 0 0 0 1" result="cr2"/><feComposite in="lo2" in2="cr2" operator="arithmetic" k1="1" k2="0" k3="0" k4="0" result="m"/><feColorMatrix in="hi" type="matrix" values="1 0 0 0 0  1 0 0 0 0  1 0 0 0 0  0 0 0 0 1" result="hi2"/><feComposite in="m" in2="hi2" operator="arithmetic" k1="0" k2="1" k3="0.44" k4="-0.22"/></filter>
<filter id="g62" x="0" y="0" width="100%" height="100%" color-interpolation-filters="sRGB"><feTurbulence type="fractalNoise" baseFrequency="0.00086" numOctaves="1" seed="21" result="lo"/><feTurbulence type="turbulence" baseFrequency="0.00086" numOctaves="1" seed="24" result="cr"/><feTurbulence type="fractalNoise" baseFrequency="0.00086" numOctaves="1" seed="26" result="hi"/><feColorMatrix in="lo" type="matrix" values="0.40 0 0 0 0.180  0.40 0 0 0 0.183  0.40 0 0 0 0.190  0 0 0 0 1" result="lo2"/><feColorMatrix in="cr" type="matrix" values="2.7 0 0 0 0.38  2.7 0 0 0 0.38  2.7 0 0 0 0.38  0 0 0 0 1" result="cr2"/><feComposite in="lo2" in2="cr2" operator="arithmetic" k1="1" k2="0" k3="0" k4="0" result="m"/><feColorMatrix in="hi" type="matrix" values="1 0 0 0 0  1 0 0 0 0  1 0 0 0 0  0 0 0 0 1" result="hi2"/><feComposite in="m" in2="hi2" operator="arithmetic" k1="0" k2="1" k3="0.44" k4="-0.22"/></filter>
<filter id="g63" x="0" y="0" width="100%" height="100%" color-interpolation-filters="sRGB"><feTurbulence type="fractalNoise" baseFrequency="0.00076" numOctaves="1" seed="21" result="lo"/><feTurbulence type="turbulence" baseFrequency="0.00076" numOctaves="1" seed="24" result="cr"/><feTurbulence type="fractalNoise" baseFrequency="0.00076" numOctaves="1" seed="26" result="hi"/><feColorMatrix in="lo" type="matrix" values="0.40 0 0 0 0.180  0.40 0 0 0 0.183  0.40 0 0 0 0.190  0 0 0 0 1" result="lo2"/><feColorMatrix in="cr" type="matrix" values="2.7 0 0 0 0.38  2.7 0 0 0 0.38  2.7 0 0 0 0.38  0 0 0 0 1" result="cr2"/><feComposite in="lo2" in2="cr2" operator="arithmetic" k1="1" k2="0" k3="0" k4="0" result="m"/><feColorMatrix in="hi" type="matrix" values="1 0 0 0 0  1 0 0 0 0  1 0 0 0 0  0 0 0 0 1" result="hi2"/><feComposite in="m" in2="hi2" operator="arithmetic" k1="0" k2="1" k3="0.44" k4="-0.22"/></filter>
<filter id="g64" x="0" y="0" width="100%" height="100%" color-interpolation-filters="sRGB"><feTurbulence type="fractalNoise" baseFrequency="0.00068" numOctaves="1" seed="21" result="lo"/><feTurbulence type="turbulence" baseFrequency="0.00068" numOctaves="1" seed="24" result="cr"/><feTurbulence type="fractalNoise" baseFrequency="0.00068" numOctaves="1" seed="26" result="hi"/><feColorMatrix in="lo" type="matrix" values="0.40 0 0 0 0.180  0.40 0 0 0 0.183  0.40 0 0 0 0.190  0 0 0 0 1" result="lo2"/><feColorMatrix in="cr" type="matrix" values="2.7 0 0 0 0.38  2.7 0 0 0 0.38  2.7 0 0 0 0.38  0 0 0 0 1" result="cr2"/><feComposite in="lo2" in2="cr2" operator="arithmetic" k1="1" k2="0" k3="0" k4="0" result="m"/><feColorMatrix in="hi" type="matrix" values="1 0 0 0 0  1 0 0 0 0  1 0 0 0 0  0 0 0 0 1" result="hi2"/><feComposite in="m" in2="hi2" operator="arithmetic" k1="0" k2="1" k3="0.44" k4="-0.22"/></filter>
<filter id="g65" x="0" y="0" width="100%" height="100%" color-interpolation-filters="sRGB"><feTurbulence type="fractalNoise" baseFrequency="0.00060" numOctaves="1" seed="21" result="lo"/><feTurbulence type="turbulence" baseFrequency="0.00060" numOctaves="1" seed="24" result="cr"/><feTurbulence type="fractalNoise" baseFrequency="0.00060" numOctaves="1" seed="26" result="hi"/><feColorMatrix in="lo" type="matrix" values="0.40 0 0 0 0.180  0.40 0 0 0 0.183  0.40 0 0 0 0.190  0 0 0 0 1" result="lo2"/><feColorMatrix in="cr" type="matrix" values="2.7 0 0 0 0.38  2.7 0 0 0 0.38  2.7 0 0 0 0.38  0 0 0 0 1" result="cr2"/><feComposite in="lo2" in2="cr2" operator="arithmetic" k1="1" k2="0" k3="0" k4="0" result="m"/><feColorMatrix in="hi" type="matrix" values="1 0 0 0 0  1 0 0 0 0  1 0 0 0 0  0 0 0 0 1" result="hi2"/><feComposite in="m" in2="hi2" operator="arithmetic" k1="0" k2="1" k3="0.44" k4="-0.22"/></filter>
<filter id="g66" x="0" y="0" width="100%" height="100%" color-interpolation-filters="sRGB"><feTurbulence type="fractalNoise" baseFrequency="0.00052" numOctaves="1" seed="21" result="lo"/><feTurbulence type="turbulence" baseFrequency="0.00052" numOctaves="1" seed="24" result="cr"/><feTurbulence type="fractalNoise" baseFrequency="0.00052" numOctaves="1" seed="26" result="hi"/><feColorMatrix in="lo" type="matrix" values="0.40 0 0 0 0.180  0.40 0 0 0 0.183  0.40 0 0 0 0.190  0 0 0 0 1" result="lo2"/><feColorMatrix in="cr" type="matrix" values="2.7 0 0 0 0.38  2.7 0 0 0 0.38  2.7 0 0 0 0.38  0 0 0 0 1" result="cr2"/><feComposite in="lo2" in2="cr2" operator="arithmetic" k1="1" k2="0" k3="0" k4="0" result="m"/><feColorMatrix in="hi" type="matrix" values="1 0 0 0 0  1 0 0 0 0  1 0 0 0 0  0 0 0 0 1" result="hi2"/><feComposite in="m" in2="hi2" operator="arithmetic" k1="0" k2="1" k3="0.44" k4="-0.22"/></filter>
<filter id="g67" x="0" y="0" width="100%" height="100%" color-interpolation-filters="sRGB"><feTurbulence type="fractalNoise" baseFrequency="0.00045" numOctaves="1" seed="21" result="lo"/><feTurbulence type="turbulence" baseFrequency="0.00045" numOctaves="1" seed="24" result="cr"/><feTurbulence type="fractalNoise" baseFrequency="0.00045" numOctaves="1" seed="26" result="hi"/><feColorMatrix in="lo" type="matrix" values="0.40 0 0 0 0.180  0.40 0 0 0 0.183  0.40 0 0 0 0.190  0 0 0 0 1" result="lo2"/><feColorMatrix in="cr" type="matrix" values="2.7 0 0 0 0.38  2.7 0 0 0 0.38  2.7 0 0 0 0.38  0 0 0 0 1" result="cr2"/><feComposite in="lo2" in2="cr2" operator="arithmetic" k1="1" k2="0" k3="0" k4="0" result="m"/><feColorMatrix in="hi" type="matrix" values="1 0 0 0 0  1 0 0 0 0  1 0 0 0 0  0 0 0 0 1" result="hi2"/><feComposite in="m" in2="hi2" operator="arithmetic" k1="0" k2="1" k3="0.44" k4="-0.22"/></filter>
<filter id="gblur" x="0" y="0" width="100%" height="100%"><feGaussianBlur stdDeviation="0.3"/></filter>
<clipPath id="gclip"><path d="M0 604L296 600.300L952 605.500V964H0z"/></clipPath>
<linearGradient id="gfade" x1="0" y1="600" x2="0" y2="964" gradientUnits="userSpaceOnUse">
<stop offset="0" stop-color="#494949" stop-opacity="1"/>
<stop offset="0.040" stop-color="#4b4b4b" stop-opacity="0.970"/>
<stop offset="0.120" stop-color="#505051" stop-opacity="0.880"/>
<stop offset="0.250" stop-color="#545456" stop-opacity="0.700"/>
<stop offset="0.450" stop-color="#565659" stop-opacity="0.420"/>
<stop offset="0.750" stop-color="#565659" stop-opacity="0.150"/>
<stop offset="1" stop-color="#565659" stop-opacity="0"/>
</linearGradient>
</defs>
<g clip-path="url(#gclip)">
<rect x="0" y="598" width="952" height="366" fill="#4a4a4a"/>
<g filter="url(#gblur)">
<path transform="matrix(0.98541 0 0.41043 -0.351517 59.50 1315.44)" d="M-492.6 1036.6L-371.0 1036.6L-352.8 993.0L-474.4 993.0z" filter="url(#g0)"/>
<path transform="matrix(0.98541 0 0.29316 -0.351517 178.50 1315.44)" d="M-369.2 1036.6L-247.6 1036.6L-234.6 993.0L-356.2 993.0z" filter="url(#g0)"/>
<path transform="matrix(0.98541 0 0.17590 -0.351517 297.50 1315.44)" d="M-245.8 1036.6L-124.3 1036.6L-116.5 993.0L-238.0 993.0z" filter="url(#g0)"/>
<path transform="matrix(0.98541 0 0.05863 -0.351517 416.50 1315.44)" d="M-122.5 1036.6L-0.9 1036.6L1.7 993.0L-119.9 993.0z" filter="url(#g0)"/>
<path transform="matrix(0.98541 0 -0.05863 -0.351517 535.50 1315.44)" d="M0.9 1036.6L122.5 1036.6L119.9 993.0L-1.7 993.0z" filter="url(#g0)"/>
<path transform="matrix(0.98541 0 -0.17590 -0.351517 654.50 1315.44)" d="M124.3 1036.6L245.8 1036.6L238.0 993.0L116.5 993.0z" filter="url(#g0)"/>
<path transform="matrix(0.98541 0 -0.29316 -0.351517 773.50 1315.44)" d="M247.6 1036.6L369.2 1036.6L356.2 993.0L234.6 993.0z" filter="url(#g0)"/>
<path transform="matrix(0.98541 0 -0.41043 -0.351517 892.50 1315.44)" d="M371.0 1036.6L492.6 1036.6L474.4 993.0L352.8 993.0z" filter="url(#g0)"/>
<path transform="matrix(0.94600 0 0.39401 -0.323958 59.50 1286.90)" d="M-513.1 1079.9L-386.5 1079.9L-367.5 1034.3L-494.1 1034.3z" filter="url(#g1)"/>
<path transform="matrix(0.94600 0 0.28143 -0.323958 178.50 1286.90)" d="M-384.6 1079.9L-257.9 1079.9L-244.4 1034.3L-371.0 1034.3z" filter="url(#g1)"/>
<path transform="matrix(0.94600 0 0.16886 -0.323958 297.50 1286.90)" d="M-256.1 1079.9L-129.4 1079.9L-121.3 1034.3L-247.9 1034.3z" filter="url(#g1)"/>
<path transform="matrix(0.94600 0 0.05629 -0.323958 416.50 1286.90)" d="M-127.6 1079.9L-0.9 1079.9L1.8 1034.3L-124.9 1034.3z" filter="url(#g1)"/>
<path transform="matrix(0.94600 0 -0.05629 -0.323958 535.50 1286.90)" d="M0.9 1079.9L127.6 1079.9L124.9 1034.3L-1.8 1034.3z" filter="url(#g1)"/>
<path transform="matrix(0.94600 0 -0.16886 -0.323958 654.50 1286.90)" d="M129.4 1079.9L256.1 1079.9L247.9 1034.3L121.3 1034.3z" filter="url(#g1)"/>
<path transform="matrix(0.94600 0 -0.28143 -0.323958 773.50 1286.90)" d="M257.9 1079.9L384.6 1079.9L371.0 1034.3L244.4 1034.3z" filter="url(#g1)"/>
<path transform="matrix(0.94600 0 -0.39401 -0.323958 892.50 1286.90)" d="M386.5 1079.9L513.1 1079.9L494.1 1034.3L367.5 1034.3z" filter="url(#g1)"/>
<path transform="matrix(0.90816 0 0.37825 -0.298560 59.50 1259.51)" d="M-534.5 1124.9L-402.6 1124.9L-382.7 1077.3L-514.7 1077.3z" filter="url(#g2)"/>
<path transform="matrix(0.90816 0 0.27018 -0.298560 178.50 1259.51)" d="M-400.6 1124.9L-268.7 1124.9L-254.5 1077.3L-386.5 1077.3z" filter="url(#g2)"/>
<path transform="matrix(0.90816 0 0.16211 -0.298560 297.50 1259.51)" d="M-266.8 1124.9L-134.8 1124.9L-126.3 1077.3L-258.3 1077.3z" filter="url(#g2)"/>
<path transform="matrix(0.90816 0 0.05404 -0.298560 416.50 1259.51)" d="M-132.9 1124.9L-1.0 1124.9L1.9 1077.3L-130.1 1077.3z" filter="url(#g2)"/>
<path transform="matrix(0.90816 0 -0.05404 -0.298560 535.50 1259.51)" d="M1.0 1124.9L132.9 1124.9L130.1 1077.3L-1.9 1077.3z" filter="url(#g2)"/>
<path transform="matrix(0.90816 0 -0.16211 -0.298560 654.50 1259.51)" d="M134.8 1124.9L266.8 1124.9L258.3 1077.3L126.3 1077.3z" filter="url(#g2)"/>
<path transform="matrix(0.90816 0 -0.27018 -0.298560 773.50 1259.51)" d="M268.7 1124.9L400.6 1124.9L386.5 1077.3L254.5 1077.3z" filter="url(#g2)"/>
<path transform="matrix(0.90816 0 -0.37825 -0.298560 892.50 1259.51)" d="M402.6 1124.9L534.5 1124.9L514.7 1077.3L382.7 1077.3z" filter="url(#g2)"/>
<path transform="matrix(0.87183 0 0.36312 -0.275153 59.50 1233.21)" d="M-556.8 1171.9L-419.4 1171.9L-398.7 1122.1L-536.1 1122.1z" filter="url(#g3)"/>
<path transform="matrix(0.87183 0 0.25937 -0.275153 178.50 1233.21)" d="M-417.3 1171.9L-279.9 1171.9L-265.1 1122.1L-402.5 1122.1z" filter="url(#g3)"/>
<path transform="matrix(0.87183 0 0.15562 -0.275153 297.50 1233.21)" d="M-277.9 1171.9L-140.5 1171.9L-131.6 1122.1L-269.0 1122.1z" filter="url(#g3)"/>
<path transform="matrix(0.87183 0 0.05187 -0.275153 416.50 1233.21)" d="M-138.4 1171.9L-1.0 1171.9L1.9 1122.1L-135.5 1122.1z" filter="url(#g3)"/>
<path transform="matrix(0.87183 0 -0.05187 -0.275153 535.50 1233.21)" d="M1.0 1171.9L138.4 1171.9L135.5 1122.1L-1.9 1122.1z" filter="url(#g3)"/>
<path transform="matrix(0.87183 0 -0.15562 -0.275153 654.50 1233.21)" d="M140.5 1171.9L277.9 1171.9L269.0 1122.1L131.6 1122.1z" filter="url(#g3)"/>
<path transform="matrix(0.87183 0 -0.25937 -0.275153 773.50 1233.21)" d="M279.9 1171.9L417.3 1171.9L402.5 1122.1L265.1 1122.1z" filter="url(#g3)"/>
<path transform="matrix(0.87183 0 -0.36312 -0.275153 892.50 1233.21)" d="M419.4 1171.9L556.8 1171.9L536.1 1122.1L398.7 1122.1z" filter="url(#g3)"/>
<path transform="matrix(0.83696 0 0.34859 -0.253581 59.50 1207.96)" d="M-580.0 1220.8L-436.9 1220.8L-415.3 1168.8L-558.4 1168.8z" filter="url(#g4)"/>
<path transform="matrix(0.83696 0 0.24900 -0.253581 178.50 1207.96)" d="M-434.7 1220.8L-291.6 1220.8L-276.2 1168.8L-419.3 1168.8z" filter="url(#g4)"/>
<path transform="matrix(0.83696 0 0.14940 -0.253581 297.50 1207.96)" d="M-289.5 1220.8L-146.3 1220.8L-137.1 1168.8L-280.2 1168.8z" filter="url(#g4)"/>
<path transform="matrix(0.83696 0 0.04980 -0.253581 416.50 1207.96)" d="M-144.2 1220.8L-1.1 1220.8L2.0 1168.8L-141.1 1168.8z" filter="url(#g4)"/>
<path transform="matrix(0.83696 0 -0.04980 -0.253581 535.50 1207.96)" d="M1.1 1220.8L144.2 1220.8L141.1 1168.8L-2.0 1168.8z" filter="url(#g4)"/>
<path transform="matrix(0.83696 0 -0.14940 -0.253581 654.50 1207.96)" d="M146.3 1220.8L289.5 1220.8L280.2 1168.8L137.1 1168.8z" filter="url(#g4)"/>
<path transform="matrix(0.83696 0 -0.24900 -0.253581 773.50 1207.96)" d="M291.6 1220.8L434.7 1220.8L419.3 1168.8L276.2 1168.8z" filter="url(#g4)"/>
<path transform="matrix(0.83696 0 -0.34859 -0.253581 892.50 1207.96)" d="M436.9 1220.8L580.0 1220.8L558.4 1168.8L415.3 1168.8z" filter="url(#g4)"/>
<path transform="matrix(0.80348 0 0.33465 -0.233700 59.50 1183.72)" d="M-604.2 1271.7L-455.1 1271.7L-432.5 1217.5L-581.6 1217.5z" filter="url(#g5)"/>
<path transform="matrix(0.80348 0 0.23904 -0.233700 178.50 1183.72)" d="M-452.9 1271.7L-303.8 1271.7L-287.6 1217.5L-436.7 1217.5z" filter="url(#g5)"/>
<path transform="matrix(0.80348 0 0.14342 -0.233700 297.50 1183.72)" d="M-301.5 1271.7L-152.4 1271.7L-142.8 1217.5L-291.9 1217.5z" filter="url(#g5)"/>
<path transform="matrix(0.80348 0 0.04781 -0.233700 416.50 1183.72)" d="M-150.2 1271.7L-1.1 1271.7L2.1 1217.5L-147.0 1217.5z" filter="url(#g5)"/>
<path transform="matrix(0.80348 0 -0.04781 -0.233700 535.50 1183.72)" d="M1.1 1271.7L150.2 1271.7L147.0 1217.5L-2.1 1217.5z" filter="url(#g5)"/>
<path transform="matrix(0.80348 0 -0.14342 -0.233700 654.50 1183.72)" d="M152.4 1271.7L301.5 1271.7L291.9 1217.5L142.8 1217.5z" filter="url(#g5)"/>
<path transform="matrix(0.80348 0 -0.23904 -0.233700 773.50 1183.72)" d="M303.8 1271.7L452.9 1271.7L436.7 1217.5L287.6 1217.5z" filter="url(#g5)"/>
<path transform="matrix(0.80348 0 -0.33465 -0.233700 892.50 1183.72)" d="M455.1 1271.7L604.2 1271.7L581.6 1217.5L432.5 1217.5z" filter="url(#g5)"/>
<path transform="matrix(0.77134 0 0.32126 -0.215378 59.50 1160.45)" d="M-629.4 1324.8L-474.1 1324.8L-450.5 1268.1L-605.8 1268.1z" filter="url(#g6)"/>
<path transform="matrix(0.77134 0 0.22947 -0.215378 178.50 1160.45)" d="M-471.8 1324.8L-316.5 1324.8L-299.6 1268.1L-454.9 1268.1z" filter="url(#g6)"/>
<path transform="matrix(0.77134 0 0.13768 -0.215378 297.50 1160.45)" d="M-314.1 1324.8L-158.8 1324.8L-148.7 1268.1L-304.0 1268.1z" filter="url(#g6)"/>
<path transform="matrix(0.77134 0 0.04589 -0.215378 416.50 1160.45)" d="M-156.5 1324.8L-1.2 1324.8L2.2 1268.1L-153.1 1268.1z" filter="url(#g6)"/>
<path transform="matrix(0.77134 0 -0.04589 -0.215378 535.50 1160.45)" d="M1.2 1324.8L156.5 1324.8L153.1 1268.1L-2.2 1268.1z" filter="url(#g6)"/>
<path transform="matrix(0.77134 0 -0.13768 -0.215378 654.50 1160.45)" d="M158.8 1324.8L314.1 1324.8L304.0 1268.1L148.7 1268.1z" filter="url(#g6)"/>
<path transform="matrix(0.77134 0 -0.22947 -0.215378 773.50 1160.45)" d="M316.5 1324.8L471.8 1324.8L454.9 1268.1L299.6 1268.1z" filter="url(#g6)"/>
<path transform="matrix(0.77134 0 -0.32126 -0.215378 892.50 1160.45)" d="M474.1 1324.8L629.4 1324.8L605.8 1268.1L450.5 1268.1z" filter="url(#g6)"/>
<path transform="matrix(0.74049 0 0.30841 -0.198492 59.50 1138.11)" d="M-655.7 1380.0L-493.9 1380.0L-469.3 1320.9L-631.0 1320.9z" filter="url(#g7)"/>
<path transform="matrix(0.74049 0 0.22029 -0.198492 178.50 1138.11)" d="M-491.5 1380.0L-329.7 1380.0L-312.1 1320.9L-473.9 1320.9z" filter="url(#g7)"/>
<path transform="matrix(0.74049 0 0.13218 -0.198492 297.50 1138.11)" d="M-327.2 1380.0L-165.4 1380.0L-154.9 1320.9L-316.7 1320.9z" filter="url(#g7)"/>
<path transform="matrix(0.74049 0 0.04406 -0.198492 416.50 1138.11)" d="M-163.0 1380.0L-1.2 1380.0L2.3 1320.9L-159.5 1320.9z" filter="url(#g7)"/>
<path transform="matrix(0.74049 0 -0.04406 -0.198492 535.50 1138.11)" d="M1.2 1380.0L163.0 1380.0L159.5 1320.9L-2.3 1320.9z" filter="url(#g7)"/>
<path transform="matrix(0.74049 0 -0.13218 -0.198492 654.50 1138.11)" d="M165.4 1380.0L327.2 1380.0L316.7 1320.9L154.9 1320.9z" filter="url(#g7)"/>
<path transform="matrix(0.74049 0 -0.22029 -0.198492 773.50 1138.11)" d="M329.7 1380.0L491.5 1380.0L473.9 1320.9L312.1 1320.9z" filter="url(#g7)"/>
<path transform="matrix(0.74049 0 -0.30841 -0.198492 892.50 1138.11)" d="M493.9 1380.0L655.7 1380.0L631.0 1320.9L469.3 1320.9z" filter="url(#g7)"/>
<path transform="matrix(0.71087 0 0.29608 -0.182930 59.50 1116.67)" d="M-683.0 1437.6L-514.5 1437.6L-488.8 1375.8L-657.3 1375.8z" filter="url(#g8)"/>
<path transform="matrix(0.71087 0 0.21148 -0.182930 178.50 1116.67)" d="M-512.0 1437.6L-343.4 1437.6L-325.0 1375.8L-493.6 1375.8z" filter="url(#g8)"/>
<path transform="matrix(0.71087 0 0.12689 -0.182930 297.50 1116.67)" d="M-340.9 1437.6L-172.4 1437.6L-161.3 1375.8L-329.8 1375.8z" filter="url(#g8)"/>
<path transform="matrix(0.71087 0 0.04230 -0.182930 416.50 1116.67)" d="M-169.8 1437.6L-1.3 1437.6L2.4 1375.8L-166.1 1375.8z" filter="url(#g8)"/>
<path transform="matrix(0.71087 0 -0.04230 -0.182930 535.50 1116.67)" d="M1.3 1437.6L169.8 1437.6L166.1 1375.8L-2.4 1375.8z" filter="url(#g8)"/>
<path transform="matrix(0.71087 0 -0.12689 -0.182930 654.50 1116.67)" d="M172.4 1437.6L340.9 1437.6L329.8 1375.8L161.3 1375.8z" filter="url(#g8)"/>
<path transform="matrix(0.71087 0 -0.21148 -0.182930 773.50 1116.67)" d="M343.4 1437.6L512.0 1437.6L493.6 1375.8L325.0 1375.8z" filter="url(#g8)"/>
<path transform="matrix(0.71087 0 -0.29608 -0.182930 892.50 1116.67)" d="M514.5 1437.6L683.0 1437.6L657.3 1375.8L488.8 1375.8z" filter="url(#g8)"/>
<path transform="matrix(0.68243 0 0.28423 -0.168589 59.50 1096.08)" d="M-711.5 1497.6L-536.0 1497.6L-509.1 1433.1L-684.6 1433.1z" filter="url(#g9)"/>
<path transform="matrix(0.68243 0 0.20302 -0.168589 178.50 1096.08)" d="M-533.3 1497.6L-357.8 1497.6L-338.6 1433.1L-514.1 1433.1z" filter="url(#g9)"/>
<path transform="matrix(0.68243 0 0.12181 -0.168589 297.50 1096.08)" d="M-355.1 1497.6L-179.6 1497.6L-168.0 1433.1L-343.6 1433.1z" filter="url(#g9)"/>
<path transform="matrix(0.68243 0 0.04060 -0.168589 416.50 1096.08)" d="M-176.9 1497.6L-1.3 1497.6L2.5 1433.1L-173.0 1433.1z" filter="url(#g9)"/>
<path transform="matrix(0.68243 0 -0.04060 -0.168589 535.50 1096.08)" d="M1.3 1497.6L176.9 1497.6L173.0 1433.1L-2.5 1433.1z" filter="url(#g9)"/>
<path transform="matrix(0.68243 0 -0.12181 -0.168589 654.50 1096.08)" d="M179.6 1497.6L355.1 1497.6L343.6 1433.1L168.0 1433.1z" filter="url(#g9)"/>
<path transform="matrix(0.68243 0 -0.20302 -0.168589 773.50 1096.08)" d="M357.8 1497.6L533.3 1497.6L514.1 1433.1L338.6 1433.1z" filter="url(#g9)"/>
<path transform="matrix(0.68243 0 -0.28423 -0.168589 892.50 1096.08)" d="M536.0 1497.6L711.5 1497.6L684.6 1433.1L509.1 1433.1z" filter="url(#g9)"/>
<path transform="matrix(0.65514 0 0.27286 -0.155371 59.50 1076.32)" d="M-741.2 1560.1L-558.4 1560.1L-530.3 1492.7L-713.1 1492.7z" filter="url(#g10)"/>
<path transform="matrix(0.65514 0 0.19490 -0.155371 178.50 1076.32)" d="M-555.6 1560.1L-372.7 1560.1L-352.6 1492.7L-535.5 1492.7z" filter="url(#g10)"/>
<path transform="matrix(0.65514 0 0.11694 -0.155371 297.50 1076.32)" d="M-369.9 1560.1L-187.1 1560.1L-175.0 1492.7L-357.9 1492.7z" filter="url(#g10)"/>
<path transform="matrix(0.65514 0 0.03898 -0.155371 416.50 1076.32)" d="M-184.3 1560.1L-1.4 1560.1L2.6 1492.7L-180.2 1492.7z" filter="url(#g10)"/>
<path transform="matrix(0.65514 0 -0.03898 -0.155371 535.50 1076.32)" d="M1.4 1560.1L184.3 1560.1L180.2 1492.7L-2.6 1492.7z" filter="url(#g10)"/>
<path transform="matrix(0.65514 0 -0.11694 -0.155371 654.50 1076.32)" d="M187.1 1560.1L369.9 1560.1L357.9 1492.7L175.0 1492.7z" filter="url(#g10)"/>
<path transform="matrix(0.65514 0 -0.19490 -0.155371 773.50 1076.32)" d="M372.7 1560.1L555.6 1560.1L535.5 1492.7L352.6 1492.7z" filter="url(#g10)"/>
<path transform="matrix(0.65514 0 -0.27286 -0.155371 892.50 1076.32)" d="M558.4 1560.1L741.2 1560.1L713.1 1492.7L530.3 1492.7z" filter="url(#g10)"/>
<path transform="matrix(0.62893 0 0.26195 -0.143190 59.50 1057.35)" d="M-772.2 1625.2L-581.7 1625.2L-552.3 1554.8L-742.8 1554.8z" filter="url(#g11)"/>
<path transform="matrix(0.62893 0 0.18711 -0.143190 178.50 1057.35)" d="M-578.8 1625.2L-388.3 1625.2L-367.3 1554.8L-557.8 1554.8z" filter="url(#g11)"/>
<path transform="matrix(0.62893 0 0.11226 -0.143190 297.50 1057.35)" d="M-385.3 1625.2L-194.9 1625.2L-182.3 1554.8L-372.8 1554.8z" filter="url(#g11)"/>
<path transform="matrix(0.62893 0 0.03742 -0.143190 416.50 1057.35)" d="M-191.9 1625.2L-1.5 1625.2L2.7 1554.8L-187.7 1554.8z" filter="url(#g11)"/>
<path transform="matrix(0.62893 0 -0.03742 -0.143190 535.50 1057.35)" d="M1.5 1625.2L191.9 1625.2L187.7 1554.8L-2.7 1554.8z" filter="url(#g11)"/>
<path transform="matrix(0.62893 0 -0.11226 -0.143190 654.50 1057.35)" d="M194.9 1625.2L385.3 1625.2L372.8 1554.8L182.3 1554.8z" filter="url(#g11)"/>
<path transform="matrix(0.62893 0 -0.18711 -0.143190 773.50 1057.35)" d="M388.3 1625.2L578.8 1625.2L557.8 1554.8L367.3 1554.8z" filter="url(#g11)"/>
<path transform="matrix(0.62893 0 -0.26195 -0.143190 892.50 1057.35)" d="M581.7 1625.2L772.2 1625.2L742.8 1554.8L552.3 1554.8z" filter="url(#g11)"/>
<path transform="matrix(0.60377 0 0.25147 -0.131964 59.50 1039.13)" d="M-804.4 1693.1L-606.0 1693.1L-575.3 1619.4L-773.7 1619.4z" filter="url(#g12)"/>
<path transform="matrix(0.60377 0 0.17962 -0.131964 178.50 1039.13)" d="M-602.9 1693.1L-404.5 1693.1L-382.6 1619.4L-581.0 1619.4z" filter="url(#g12)"/>
<path transform="matrix(0.60377 0 0.10777 -0.131964 297.50 1039.13)" d="M-401.4 1693.1L-203.0 1693.1L-189.9 1619.4L-388.3 1619.4z" filter="url(#g12)"/>
<path transform="matrix(0.60377 0 0.03592 -0.131964 416.50 1039.13)" d="M-199.9 1693.1L-1.5 1693.1L2.9 1619.4L-195.6 1619.4z" filter="url(#g12)"/>
<path transform="matrix(0.60377 0 -0.03592 -0.131964 535.50 1039.13)" d="M1.5 1693.1L199.9 1693.1L195.6 1619.4L-2.9 1619.4z" filter="url(#g12)"/>
<path transform="matrix(0.60377 0 -0.10777 -0.131964 654.50 1039.13)" d="M203.0 1693.1L401.4 1693.1L388.3 1619.4L189.9 1619.4z" filter="url(#g12)"/>
<path transform="matrix(0.60377 0 -0.17962 -0.131964 773.50 1039.13)" d="M404.5 1693.1L602.9 1693.1L581.0 1619.4L382.6 1619.4z" filter="url(#g12)"/>
<path transform="matrix(0.60377 0 -0.25147 -0.131964 892.50 1039.13)" d="M606.0 1693.1L804.4 1693.1L773.7 1619.4L575.3 1619.4z" filter="url(#g12)"/>
<path transform="matrix(0.57962 0 0.24141 -0.121618 59.50 1021.65)" d="M-837.9 1763.8L-631.3 1763.8L-599.2 1686.8L-805.9 1686.8z" filter="url(#g13)"/>
<path transform="matrix(0.57962 0 0.17244 -0.121618 178.50 1021.65)" d="M-628.1 1763.8L-421.4 1763.8L-398.5 1686.8L-605.2 1686.8z" filter="url(#g13)"/>
<path transform="matrix(0.57962 0 0.10346 -0.121618 297.50 1021.65)" d="M-418.2 1763.8L-211.5 1763.8L-197.7 1686.8L-404.4 1686.8z" filter="url(#g13)"/>
<path transform="matrix(0.57962 0 0.03449 -0.121618 416.50 1021.65)" d="M-208.3 1763.8L-1.6 1763.8L3.0 1686.8L-203.7 1686.8z" filter="url(#g13)"/>
<path transform="matrix(0.57962 0 -0.03449 -0.121618 535.50 1021.65)" d="M1.6 1763.8L208.3 1763.8L203.7 1686.8L-3.0 1686.8z" filter="url(#g13)"/>
<path transform="matrix(0.57962 0 -0.10346 -0.121618 654.50 1021.65)" d="M211.5 1763.8L418.2 1763.8L404.4 1686.8L197.7 1686.8z" filter="url(#g13)"/>
<path transform="matrix(0.57962 0 -0.17244 -0.121618 773.50 1021.65)" d="M421.4 1763.8L628.1 1763.8L605.2 1686.8L398.5 1686.8z" filter="url(#g13)"/>
<path transform="matrix(0.57962 0 -0.24141 -0.121618 892.50 1021.65)" d="M631.3 1763.8L837.9 1763.8L805.9 1686.8L599.2 1686.8z" filter="url(#g13)"/>
<path transform="matrix(0.55644 0 0.23176 -0.112083 59.50 1004.86)" d="M-872.9 1837.4L-657.6 1837.4L-624.1 1756.9L-839.4 1756.9z" filter="url(#g14)"/>
<path transform="matrix(0.55644 0 0.16554 -0.112083 178.50 1004.86)" d="M-654.3 1837.4L-439.0 1837.4L-415.0 1756.9L-630.3 1756.9z" filter="url(#g14)"/>
<path transform="matrix(0.55644 0 0.09932 -0.112083 297.50 1004.86)" d="M-435.6 1837.4L-220.3 1837.4L-206.0 1756.9L-421.3 1756.9z" filter="url(#g14)"/>
<path transform="matrix(0.55644 0 0.03311 -0.112083 416.50 1004.86)" d="M-217.0 1837.4L-1.7 1837.4L3.1 1756.9L-212.2 1756.9z" filter="url(#g14)"/>
<path transform="matrix(0.55644 0 -0.03311 -0.112083 535.50 1004.86)" d="M1.7 1837.4L217.0 1837.4L212.2 1756.9L-3.1 1756.9z" filter="url(#g14)"/>
<path transform="matrix(0.55644 0 -0.09932 -0.112083 654.50 1004.86)" d="M220.3 1837.4L435.6 1837.4L421.3 1756.9L206.0 1756.9z" filter="url(#g14)"/>
<path transform="matrix(0.55644 0 -0.16554 -0.112083 773.50 1004.86)" d="M439.0 1837.4L654.3 1837.4L630.3 1756.9L415.0 1756.9z" filter="url(#g14)"/>
<path transform="matrix(0.55644 0 -0.23176 -0.112083 892.50 1004.86)" d="M657.6 1837.4L872.9 1837.4L839.4 1756.9L624.1 1756.9z" filter="url(#g14)"/>
<path transform="matrix(0.53418 0 0.22249 -0.103296 59.50 988.75)" d="M-909.4 1914.1L-685.1 1914.1L-650.0 1830.0L-874.3 1830.0z" filter="url(#g15)"/>
<path transform="matrix(0.53418 0 0.15892 -0.103296 178.50 988.75)" d="M-681.6 1914.1L-457.3 1914.1L-432.3 1830.0L-656.5 1830.0z" filter="url(#g15)"/>
<path transform="matrix(0.53418 0 0.09535 -0.103296 297.50 988.75)" d="M-453.8 1914.1L-229.5 1914.1L-214.5 1830.0L-438.8 1830.0z" filter="url(#g15)"/>
<path transform="matrix(0.53418 0 0.03178 -0.103296 416.50 988.75)" d="M-226.0 1914.1L-1.8 1914.1L3.3 1830.0L-221.0 1830.0z" filter="url(#g15)"/>
<path transform="matrix(0.53418 0 -0.03178 -0.103296 535.50 988.75)" d="M1.8 1914.1L226.0 1914.1L221.0 1830.0L-3.3 1830.0z" filter="url(#g15)"/>
<path transform="matrix(0.53418 0 -0.09535 -0.103296 654.50 988.75)" d="M229.5 1914.1L453.8 1914.1L438.8 1830.0L214.5 1830.0z" filter="url(#g15)"/>
<path transform="matrix(0.53418 0 -0.15892 -0.103296 773.50 988.75)" d="M457.3 1914.1L681.6 1914.1L656.5 1830.0L432.3 1830.0z" filter="url(#g15)"/>
<path transform="matrix(0.53418 0 -0.22249 -0.103296 892.50 988.75)" d="M685.1 1914.1L909.4 1914.1L874.3 1830.0L650.0 1830.0z" filter="url(#g15)"/>
<path transform="matrix(0.51281 0 0.21359 -0.095198 59.50 973.28)" d="M-947.3 1994.0L-713.7 1994.0L-677.1 1906.0L-910.7 1906.0z" filter="url(#g16)"/>
<path transform="matrix(0.51281 0 0.15256 -0.095198 178.50 973.28)" d="M-710.0 1994.0L-476.4 1994.0L-450.2 1906.0L-683.9 1906.0z" filter="url(#g16)"/>
<path transform="matrix(0.51281 0 0.09154 -0.095198 297.50 973.28)" d="M-472.7 1994.0L-239.1 1994.0L-223.4 1906.0L-457.0 1906.0z" filter="url(#g16)"/>
<path transform="matrix(0.51281 0 0.03051 -0.095198 416.50 973.28)" d="M-235.5 1994.0L-1.8 1994.0L3.4 1906.0L-230.2 1906.0z" filter="url(#g16)"/>
<path transform="matrix(0.51281 0 -0.03051 -0.095198 535.50 973.28)" d="M1.8 1994.0L235.5 1994.0L230.2 1906.0L-3.4 1906.0z" filter="url(#g16)"/>
<path transform="matrix(0.51281 0 -0.09154 -0.095198 654.50 973.28)" d="M239.1 1994.0L472.7 1994.0L457.0 1906.0L223.4 1906.0z" filter="url(#g16)"/>
<path transform="matrix(0.51281 0 -0.15256 -0.095198 773.50 973.28)" d="M476.4 1994.0L710.0 1994.0L683.9 1906.0L450.2 1906.0z" filter="url(#g16)"/>
<path transform="matrix(0.51281 0 -0.21359 -0.095198 892.50 973.28)" d="M713.7 1994.0L947.3 1994.0L910.7 1906.0L677.1 1906.0z" filter="url(#g16)"/>
<path transform="matrix(0.49230 0 0.20504 -0.087734 59.50 958.43)" d="M-986.9 2077.3L-743.5 2077.3L-705.2 1985.3L-948.5 1985.3z" filter="url(#g17)"/>
<path transform="matrix(0.49230 0 0.14646 -0.087734 178.50 958.43)" d="M-739.7 2077.3L-496.3 2077.3L-468.9 1985.3L-712.3 1985.3z" filter="url(#g17)"/>
<path transform="matrix(0.49230 0 0.08788 -0.087734 297.50 958.43)" d="M-492.5 2077.3L-249.1 2077.3L-232.7 1985.3L-476.0 1985.3z" filter="url(#g17)"/>
<path transform="matrix(0.49230 0 0.02929 -0.087734 416.50 958.43)" d="M-245.3 2077.3L-1.9 2077.3L3.6 1985.3L-239.8 1985.3z" filter="url(#g17)"/>
<path transform="matrix(0.49230 0 -0.02929 -0.087734 535.50 958.43)" d="M1.9 2077.3L245.3 2077.3L239.8 1985.3L-3.6 1985.3z" filter="url(#g17)"/>
<path transform="matrix(0.49230 0 -0.08788 -0.087734 654.50 958.43)" d="M249.1 2077.3L492.5 2077.3L476.0 1985.3L232.7 1985.3z" filter="url(#g17)"/>
<path transform="matrix(0.49230 0 -0.14646 -0.087734 773.50 958.43)" d="M496.3 2077.3L739.7 2077.3L712.3 1985.3L468.9 1985.3z" filter="url(#g17)"/>
<path transform="matrix(0.49230 0 -0.20504 -0.087734 892.50 958.43)" d="M743.5 2077.3L986.9 2077.3L948.5 1985.3L705.2 1985.3z" filter="url(#g17)"/>
<path transform="matrix(0.47261 0 0.19684 -0.080856 59.50 944.17)" d="M-1028.1 2164.0L-774.6 2164.0L-734.5 2067.8L-988.0 2067.8z" filter="url(#g18)"/>
<path transform="matrix(0.47261 0 0.14060 -0.080856 178.50 944.17)" d="M-770.5 2164.0L-517.1 2164.0L-488.4 2067.8L-741.9 2067.8z" filter="url(#g18)"/>
<path transform="matrix(0.47261 0 0.08436 -0.080856 297.50 944.17)" d="M-513.0 2164.0L-259.5 2164.0L-242.4 2067.8L-495.8 2067.8z" filter="url(#g18)"/>
<path transform="matrix(0.47261 0 0.02812 -0.080856 416.50 944.17)" d="M-255.5 2164.0L-2.0 2164.0L3.7 2067.8L-249.8 2067.8z" filter="url(#g18)"/>
<path transform="matrix(0.47261 0 -0.02812 -0.080856 535.50 944.17)" d="M2.0 2164.0L255.5 2164.0L249.8 2067.8L-3.7 2067.8z" filter="url(#g18)"/>
<path transform="matrix(0.47261 0 -0.08436 -0.080856 654.50 944.17)" d="M259.5 2164.0L513.0 2164.0L495.8 2067.8L242.4 2067.8z" filter="url(#g18)"/>
<path transform="matrix(0.47261 0 -0.14060 -0.080856 773.50 944.17)" d="M517.1 2164.0L770.5 2164.0L741.9 2067.8L488.4 2067.8z" filter="url(#g18)"/>
<path transform="matrix(0.47261 0 -0.19684 -0.080856 892.50 944.17)" d="M774.6 2164.0L1028.1 2164.0L988.0 2067.8L734.5 2067.8z" filter="url(#g18)"/>
<path transform="matrix(0.45370 0 0.18897 -0.074517 59.50 930.48)" d="M-1071.0 2254.4L-806.9 2254.4L-765.0 2153.7L-1029.1 2153.7z" filter="url(#g19)"/>
<path transform="matrix(0.45370 0 0.13498 -0.074517 178.50 930.48)" d="M-802.7 2254.4L-538.7 2254.4L-508.7 2153.7L-772.8 2153.7z" filter="url(#g19)"/>
<path transform="matrix(0.45370 0 0.08099 -0.074517 297.50 930.48)" d="M-534.4 2254.4L-270.4 2254.4L-252.4 2153.7L-516.5 2153.7z" filter="url(#g19)"/>
<path transform="matrix(0.45370 0 0.02700 -0.074517 416.50 930.48)" d="M-266.2 2254.4L-2.1 2254.4L3.9 2153.7L-260.2 2153.7z" filter="url(#g19)"/>
<path transform="matrix(0.45370 0 -0.02700 -0.074517 535.50 930.48)" d="M2.1 2254.4L266.2 2254.4L260.2 2153.7L-3.9 2153.7z" filter="url(#g19)"/>
<path transform="matrix(0.45370 0 -0.08099 -0.074517 654.50 930.48)" d="M270.4 2254.4L534.4 2254.4L516.5 2153.7L252.4 2153.7z" filter="url(#g19)"/>
<path transform="matrix(0.45370 0 -0.13498 -0.074517 773.50 930.48)" d="M538.7 2254.4L802.7 2254.4L772.8 2153.7L508.7 2153.7z" filter="url(#g19)"/>
<path transform="matrix(0.45370 0 -0.18897 -0.074517 892.50 930.48)" d="M806.9 2254.4L1071.0 2254.4L1029.1 2153.7L765.0 2153.7z" filter="url(#g19)"/>
<path transform="matrix(0.43556 0 0.18141 -0.068675 59.50 917.34)" d="M-1115.7 2348.6L-840.7 2348.6L-796.8 2243.2L-1071.8 2243.2z" filter="url(#g20)"/>
<path transform="matrix(0.43556 0 0.12958 -0.068675 178.50 917.34)" d="M-836.2 2348.6L-561.2 2348.6L-529.8 2243.2L-804.9 2243.2z" filter="url(#g20)"/>
<path transform="matrix(0.43556 0 0.07775 -0.068675 297.50 917.34)" d="M-556.8 2348.6L-281.7 2348.6L-262.9 2243.2L-537.9 2243.2z" filter="url(#g20)"/>
<path transform="matrix(0.43556 0 0.02592 -0.068675 416.50 917.34)" d="M-277.3 2348.6L-2.2 2348.6L4.1 2243.2L-271.0 2243.2z" filter="url(#g20)"/>
<path transform="matrix(0.43556 0 -0.02592 -0.068675 535.50 917.34)" d="M2.2 2348.6L277.3 2348.6L271.0 2243.2L-4.1 2243.2z" filter="url(#g20)"/>
<path transform="matrix(0.43556 0 -0.07775 -0.068675 654.50 917.34)" d="M281.7 2348.6L556.8 2348.6L537.9 2243.2L262.9 2243.2z" filter="url(#g20)"/>
<path transform="matrix(0.43556 0 -0.12958 -0.068675 773.50 917.34)" d="M561.2 2348.6L836.2 2348.6L804.9 2243.2L529.8 2243.2z" filter="url(#g20)"/>
<path transform="matrix(0.43556 0 -0.18141 -0.068675 892.50 917.34)" d="M840.7 2348.6L1115.7 2348.6L1071.8 2243.2L796.8 2243.2z" filter="url(#g20)"/>
<path transform="matrix(0.41813 0 0.17415 -0.063290 59.50 904.73)" d="M-1162.3 2446.7L-875.8 2446.7L-829.9 2336.5L-1116.4 2336.5z" filter="url(#g21)"/>
<path transform="matrix(0.41813 0 0.12439 -0.063290 178.50 904.73)" d="M-871.2 2446.7L-584.6 2446.7L-551.8 2336.5L-838.4 2336.5z" filter="url(#g21)"/>
<path transform="matrix(0.41813 0 0.07464 -0.063290 297.50 904.73)" d="M-580.0 2446.7L-293.5 2446.7L-273.8 2336.5L-560.3 2336.5z" filter="url(#g21)"/>
<path transform="matrix(0.41813 0 0.02488 -0.063290 416.50 904.73)" d="M-288.8 2446.7L-2.3 2446.7L4.2 2336.5L-282.3 2336.5z" filter="url(#g21)"/>
<path transform="matrix(0.41813 0 -0.02488 -0.063290 535.50 904.73)" d="M2.3 2446.7L288.8 2446.7L282.3 2336.5L-4.2 2336.5z" filter="url(#g21)"/>
<path transform="matrix(0.41813 0 -0.07464 -0.063290 654.50 904.73)" d="M293.5 2446.7L580.0 2446.7L560.3 2336.5L273.8 2336.5z" filter="url(#g21)"/>
<path transform="matrix(0.41813 0 -0.12439 -0.063290 773.50 904.73)" d="M584.6 2446.7L871.2 2446.7L838.4 2336.5L551.8 2336.5z" filter="url(#g21)"/>
<path transform="matrix(0.41813 0 -0.17415 -0.063290 892.50 904.73)" d="M875.8 2446.7L1162.3 2446.7L1116.4 2336.5L829.9 2336.5z" filter="url(#g21)"/>
<path transform="matrix(0.40141 0 0.16719 -0.058328 59.50 892.62)" d="M-1210.9 2548.9L-912.4 2548.9L-864.3 2433.5L-1162.8 2433.5z" filter="url(#g22)"/>
<path transform="matrix(0.40141 0 0.11942 -0.058328 178.50 892.62)" d="M-907.5 2548.9L-609.1 2548.9L-574.8 2433.5L-873.2 2433.5z" filter="url(#g22)"/>
<path transform="matrix(0.40141 0 0.07165 -0.058328 297.50 892.62)" d="M-604.2 2548.9L-305.8 2548.9L-285.2 2433.5L-583.6 2433.5z" filter="url(#g22)"/>
<path transform="matrix(0.40141 0 0.02388 -0.058328 416.50 892.62)" d="M-300.9 2548.9L-2.4 2548.9L4.4 2433.5L-294.0 2433.5z" filter="url(#g22)"/>
<path transform="matrix(0.40141 0 -0.02388 -0.058328 535.50 892.62)" d="M2.4 2548.9L300.9 2548.9L294.0 2433.5L-4.4 2433.5z" filter="url(#g22)"/>
<path transform="matrix(0.40141 0 -0.07165 -0.058328 654.50 892.62)" d="M305.8 2548.9L604.2 2548.9L583.6 2433.5L285.2 2433.5z" filter="url(#g22)"/>
<path transform="matrix(0.40141 0 -0.11942 -0.058328 773.50 892.62)" d="M609.1 2548.9L907.5 2548.9L873.2 2433.5L574.8 2433.5z" filter="url(#g22)"/>
<path transform="matrix(0.40141 0 -0.16719 -0.058328 892.50 892.62)" d="M912.4 2548.9L1210.9 2548.9L1162.8 2433.5L864.3 2433.5z" filter="url(#g22)"/>
<path transform="matrix(0.38535 0 0.16050 -0.053756 59.50 880.99)" d="M-1261.4 2655.4L-950.5 2655.4L-900.2 2534.6L-1211.1 2534.6z" filter="url(#g23)"/>
<path transform="matrix(0.38535 0 0.11464 -0.053756 178.50 880.99)" d="M-945.4 2655.4L-634.5 2655.4L-598.6 2534.6L-909.5 2534.6z" filter="url(#g23)"/>
<path transform="matrix(0.38535 0 0.06879 -0.053756 297.50 880.99)" d="M-629.4 2655.4L-318.6 2655.4L-297.0 2534.6L-607.9 2534.6z" filter="url(#g23)"/>
<path transform="matrix(0.38535 0 0.02293 -0.053756 416.50 880.99)" d="M-313.4 2655.4L-2.6 2655.4L4.6 2534.6L-306.3 2534.6z" filter="url(#g23)"/>
<path transform="matrix(0.38535 0 -0.02293 -0.053756 535.50 880.99)" d="M2.6 2655.4L313.4 2655.4L306.3 2534.6L-4.6 2534.6z" filter="url(#g23)"/>
<path transform="matrix(0.38535 0 -0.06879 -0.053756 654.50 880.99)" d="M318.6 2655.4L629.4 2655.4L607.9 2534.6L297.0 2534.6z" filter="url(#g23)"/>
<path transform="matrix(0.38535 0 -0.11464 -0.053756 773.50 880.99)" d="M634.5 2655.4L945.4 2655.4L909.5 2534.6L598.6 2534.6z" filter="url(#g23)"/>
<path transform="matrix(0.38535 0 -0.16050 -0.053756 892.50 880.99)" d="M950.5 2655.4L1261.4 2655.4L1211.1 2534.6L900.2 2534.6z" filter="url(#g23)"/>
<path transform="matrix(0.36994 0 0.15408 -0.049541 59.50 869.83)" d="M-1314.1 2766.4L-990.3 2766.4L-937.6 2639.9L-1261.4 2639.9z" filter="url(#g24)"/>
<path transform="matrix(0.36994 0 0.11006 -0.049541 178.50 869.83)" d="M-984.9 2766.4L-661.1 2766.4L-623.5 2639.9L-947.3 2639.9z" filter="url(#g24)"/>
<path transform="matrix(0.36994 0 0.06603 -0.049541 297.50 869.83)" d="M-655.7 2766.4L-331.9 2766.4L-309.3 2639.9L-633.1 2639.9z" filter="url(#g24)"/>
<path transform="matrix(0.36994 0 0.02201 -0.049541 416.50 869.83)" d="M-326.5 2766.4L-2.7 2766.4L4.8 2639.9L-319.0 2639.9z" filter="url(#g24)"/>
<path transform="matrix(0.36994 0 -0.02201 -0.049541 535.50 869.83)" d="M2.7 2766.4L326.5 2766.4L319.0 2639.9L-4.8 2639.9z" filter="url(#g24)"/>
<path transform="matrix(0.36994 0 -0.06603 -0.049541 654.50 869.83)" d="M331.9 2766.4L655.7 2766.4L633.1 2639.9L309.3 2639.9z" filter="url(#g24)"/>
<path transform="matrix(0.36994 0 -0.11006 -0.049541 773.50 869.83)" d="M661.1 2766.4L984.9 2766.4L947.3 2639.9L623.5 2639.9z" filter="url(#g24)"/>
<path transform="matrix(0.36994 0 -0.15408 -0.049541 892.50 869.83)" d="M990.3 2766.4L1314.1 2766.4L1261.4 2639.9L937.6 2639.9z" filter="url(#g24)"/>
<path transform="matrix(0.35514 0 0.14792 -0.045657 59.50 859.12)" d="M-1369.0 2882.0L-1031.7 2882.0L-976.5 2749.6L-1313.9 2749.6z" filter="url(#g25)"/>
<path transform="matrix(0.35514 0 0.10565 -0.045657 178.50 859.12)" d="M-1026.1 2882.0L-688.7 2882.0L-649.3 2749.6L-986.7 2749.6z" filter="url(#g25)"/>
<path transform="matrix(0.35514 0 0.06339 -0.045657 297.50 859.12)" d="M-683.1 2882.0L-345.8 2882.0L-322.1 2749.6L-659.5 2749.6z" filter="url(#g25)"/>
<path transform="matrix(0.35514 0 0.02113 -0.045657 416.50 859.12)" d="M-340.1 2882.0L-2.8 2882.0L5.1 2749.6L-332.3 2749.6z" filter="url(#g25)"/>
<path transform="matrix(0.35514 0 -0.02113 -0.045657 535.50 859.12)" d="M2.8 2882.0L340.1 2882.0L332.3 2749.6L-5.1 2749.6z" filter="url(#g25)"/>
<path transform="matrix(0.35514 0 -0.06339 -0.045657 654.50 859.12)" d="M345.8 2882.0L683.1 2882.0L659.5 2749.6L322.1 2749.6z" filter="url(#g25)"/>
<path transform="matrix(0.35514 0 -0.10565 -0.045657 773.50 859.12)" d="M688.7 2882.0L1026.1 2882.0L986.7 2749.6L649.3 2749.6z" filter="url(#g25)"/>
<path transform="matrix(0.35514 0 -0.14792 -0.045657 892.50 859.12)" d="M1031.7 2882.0L1369.0 2882.0L1313.9 2749.6L976.5 2749.6z" filter="url(#g25)"/>
<path transform="matrix(0.34093 0 0.14200 -0.042078 59.50 848.84)" d="M-1426.2 3002.5L-1074.8 3002.5L-1017.1 2863.7L-1368.4 2863.7z" filter="url(#g26)"/>
<path transform="matrix(0.34093 0 0.10143 -0.042078 178.50 848.84)" d="M-1068.9 3002.5L-717.5 3002.5L-676.3 2863.7L-1027.7 2863.7z" filter="url(#g26)"/>
<path transform="matrix(0.34093 0 0.06086 -0.042078 297.50 848.84)" d="M-711.6 3002.5L-360.2 3002.5L-335.5 2863.7L-686.9 2863.7z" filter="url(#g26)"/>
<path transform="matrix(0.34093 0 0.02029 -0.042078 416.50 848.84)" d="M-354.3 3002.5L-3.0 3002.5L5.3 2863.7L-346.1 2863.7z" filter="url(#g26)"/>
<path transform="matrix(0.34093 0 -0.02029 -0.042078 535.50 848.84)" d="M3.0 3002.5L354.3 3002.5L346.1 2863.7L-5.3 2863.7z" filter="url(#g26)"/>
<path transform="matrix(0.34093 0 -0.06086 -0.042078 654.50 848.84)" d="M360.2 3002.5L711.6 3002.5L686.9 2863.7L335.5 2863.7z" filter="url(#g26)"/>
<path transform="matrix(0.34093 0 -0.10143 -0.042078 773.50 848.84)" d="M717.5 3002.5L1068.9 3002.5L1027.7 2863.7L676.3 2863.7z" filter="url(#g26)"/>
<path transform="matrix(0.34093 0 -0.14200 -0.042078 892.50 848.84)" d="M1074.8 3002.5L1426.2 3002.5L1368.4 2863.7L1017.1 2863.7z" filter="url(#g26)"/>
<path transform="matrix(0.32730 0 0.13632 -0.038779 59.50 838.96)" d="M-1485.8 3128.0L-1119.8 3128.0L-1059.3 2982.7L-1425.3 2982.7z" filter="url(#g27)"/>
<path transform="matrix(0.32730 0 0.09737 -0.038779 178.50 838.96)" d="M-1113.6 3128.0L-747.6 3128.0L-704.3 2982.7L-1070.4 2982.7z" filter="url(#g27)"/>
<path transform="matrix(0.32730 0 0.05842 -0.038779 297.50 838.96)" d="M-741.4 3128.0L-375.3 3128.0L-349.4 2982.7L-715.4 2982.7z" filter="url(#g27)"/>
<path transform="matrix(0.32730 0 0.01947 -0.038779 416.50 838.96)" d="M-369.1 3128.0L-3.1 3128.0L5.5 2982.7L-360.5 2982.7z" filter="url(#g27)"/>
<path transform="matrix(0.32730 0 -0.01947 -0.038779 535.50 838.96)" d="M3.1 3128.0L369.1 3128.0L360.5 2982.7L-5.5 2982.7z" filter="url(#g27)"/>
<path transform="matrix(0.32730 0 -0.05842 -0.038779 654.50 838.96)" d="M375.3 3128.0L741.4 3128.0L715.4 2982.7L349.4 2982.7z" filter="url(#g27)"/>
<path transform="matrix(0.32730 0 -0.09737 -0.038779 773.50 838.96)" d="M747.6 3128.0L1113.6 3128.0L1070.4 2982.7L704.3 2982.7z" filter="url(#g27)"/>
<path transform="matrix(0.32730 0 -0.13632 -0.038779 892.50 838.96)" d="M1119.8 3128.0L1485.8 3128.0L1425.3 2982.7L1059.3 2982.7z" filter="url(#g27)"/>
<path transform="matrix(0.31421 0 0.13087 -0.035738 59.50 829.48)" d="M-1547.9 3258.8L-1166.6 3258.8L-1103.2 3106.5L-1484.5 3106.5z" filter="url(#g28)"/>
<path transform="matrix(0.31421 0 0.09348 -0.035738 178.50 829.48)" d="M-1160.1 3258.8L-778.8 3258.8L-733.5 3106.5L-1114.8 3106.5z" filter="url(#g28)"/>
<path transform="matrix(0.31421 0 0.05609 -0.035738 297.50 829.48)" d="M-772.3 3258.8L-391.1 3258.8L-363.9 3106.5L-745.1 3106.5z" filter="url(#g28)"/>
<path transform="matrix(0.31421 0 0.01870 -0.035738 416.50 829.48)" d="M-384.5 3258.8L-3.3 3258.8L5.8 3106.5L-375.5 3106.5z" filter="url(#g28)"/>
<path transform="matrix(0.31421 0 -0.01870 -0.035738 535.50 829.48)" d="M3.3 3258.8L384.5 3258.8L375.5 3106.5L-5.8 3106.5z" filter="url(#g28)"/>
<path transform="matrix(0.31421 0 -0.05609 -0.035738 654.50 829.48)" d="M391.1 3258.8L772.3 3258.8L745.1 3106.5L363.9 3106.5z" filter="url(#g28)"/>
<path transform="matrix(0.31421 0 -0.09348 -0.035738 773.50 829.48)" d="M778.8 3258.8L1160.1 3258.8L1114.8 3106.5L733.5 3106.5z" filter="url(#g28)"/>
<path transform="matrix(0.31421 0 -0.13087 -0.035738 892.50 829.48)" d="M1166.6 3258.8L1547.9 3258.8L1484.5 3106.5L1103.2 3106.5z" filter="url(#g28)"/>
<path transform="matrix(0.30164 0 0.12563 -0.032937 59.50 820.39)" d="M-1612.6 3395.0L-1215.5 3395.0L-1149.0 3235.4L-1546.1 3235.4z" filter="url(#g29)"/>
<path transform="matrix(0.30164 0 0.08974 -0.032937 178.50 820.39)" d="M-1208.6 3395.0L-811.4 3395.0L-764.0 3235.4L-1161.1 3235.4z" filter="url(#g29)"/>
<path transform="matrix(0.30164 0 0.05384 -0.032937 297.50 820.39)" d="M-804.6 3395.0L-407.4 3395.0L-378.9 3235.4L-776.1 3235.4z" filter="url(#g29)"/>
<path transform="matrix(0.30164 0 0.01795 -0.032937 416.50 820.39)" d="M-400.6 3395.0L-3.4 3395.0L6.1 3235.4L-391.1 3235.4z" filter="url(#g29)"/>
<path transform="matrix(0.30164 0 -0.01795 -0.032937 535.50 820.39)" d="M3.4 3395.0L400.6 3395.0L391.1 3235.4L-6.1 3235.4z" filter="url(#g29)"/>
<path transform="matrix(0.30164 0 -0.05384 -0.032937 654.50 820.39)" d="M407.4 3395.0L804.6 3395.0L776.1 3235.4L378.9 3235.4z" filter="url(#g29)"/>
<path transform="matrix(0.30164 0 -0.08974 -0.032937 773.50 820.39)" d="M811.4 3395.0L1208.6 3395.0L1161.1 3235.4L764.0 3235.4z" filter="url(#g29)"/>
<path transform="matrix(0.30164 0 -0.12563 -0.032937 892.50 820.39)" d="M1215.5 3395.0L1612.6 3395.0L1546.1 3235.4L1149.0 3235.4z" filter="url(#g29)"/>
<path transform="matrix(0.28957 0 0.12061 -0.030354 59.50 811.65)" d="M-1680.0 3537.0L-1266.3 3537.0L-1196.6 3369.7L-1610.3 3369.7z" filter="url(#g30)"/>
<path transform="matrix(0.28957 0 0.08615 -0.030354 178.50 811.65)" d="M-1259.1 3537.0L-845.4 3537.0L-795.6 3369.7L-1209.3 3369.7z" filter="url(#g30)"/>
<path transform="matrix(0.28957 0 0.05169 -0.030354 297.50 811.65)" d="M-838.2 3537.0L-424.5 3537.0L-394.6 3369.7L-808.4 3369.7z" filter="url(#g30)"/>
<path transform="matrix(0.28957 0 0.01723 -0.030354 416.50 811.65)" d="M-417.3 3537.0L-3.6 3537.0L6.4 3369.7L-407.4 3369.7z" filter="url(#g30)"/>
<path transform="matrix(0.28957 0 -0.01723 -0.030354 535.50 811.65)" d="M3.6 3537.0L417.3 3537.0L407.4 3369.7L-6.4 3369.7z" filter="url(#g30)"/>
<path transform="matrix(0.28957 0 -0.05169 -0.030354 654.50 811.65)" d="M424.5 3537.0L838.2 3537.0L808.4 3369.7L394.6 3369.7z" filter="url(#g30)"/>
<path transform="matrix(0.28957 0 -0.08615 -0.030354 773.50 811.65)" d="M845.4 3537.0L1259.1 3537.0L1209.3 3369.7L795.6 3369.7z" filter="url(#g30)"/>
<path transform="matrix(0.28957 0 -0.12061 -0.030354 892.50 811.65)" d="M1266.3 3537.0L1680.0 3537.0L1610.3 3369.7L1196.6 3369.7z" filter="url(#g30)"/>
<path transform="matrix(0.27799 0 0.11578 -0.027975 59.50 803.26)" d="M-1750.3 3685.0L-1319.3 3685.0L-1246.3 3509.6L-1677.2 3509.6z" filter="url(#g31)"/>
<path transform="matrix(0.27799 0 0.08270 -0.027975 178.50 803.26)" d="M-1311.8 3685.0L-880.8 3685.0L-828.6 3509.6L-1259.6 3509.6z" filter="url(#g31)"/>
<path transform="matrix(0.27799 0 0.04962 -0.027975 297.50 803.26)" d="M-873.2 3685.0L-442.3 3685.0L-411.0 3509.6L-841.9 3509.6z" filter="url(#g31)"/>
<path transform="matrix(0.27799 0 0.01654 -0.027975 416.50 803.26)" d="M-434.7 3685.0L-3.8 3685.0L6.7 3509.6L-424.3 3509.6z" filter="url(#g31)"/>
<path transform="matrix(0.27799 0 -0.01654 -0.027975 535.50 803.26)" d="M3.8 3685.0L434.7 3685.0L424.3 3509.6L-6.7 3509.6z" filter="url(#g31)"/>
<path transform="matrix(0.27799 0 -0.04962 -0.027975 654.50 803.26)" d="M442.3 3685.0L873.2 3685.0L841.9 3509.6L411.0 3509.6z" filter="url(#g31)"/>
<path transform="matrix(0.27799 0 -0.08270 -0.027975 773.50 803.26)" d="M880.8 3685.0L1311.8 3685.0L1259.6 3509.6L828.6 3509.6z" filter="url(#g31)"/>
<path transform="matrix(0.27799 0 -0.11578 -0.027975 892.50 803.26)" d="M1319.3 3685.0L1750.3 3685.0L1677.2 3509.6L1246.3 3509.6z" filter="url(#g31)"/>
<path transform="matrix(0.26687 0 0.11115 -0.025781 59.50 795.21)" d="M-1823.5 3839.1L-1374.5 3839.1L-1297.9 3655.2L-1746.8 3655.2z" filter="url(#g32)"/>
<path transform="matrix(0.26687 0 0.07939 -0.025781 178.50 795.21)" d="M-1366.6 3839.1L-917.7 3839.1L-863.0 3655.2L-1311.9 3655.2z" filter="url(#g32)"/>
<path transform="matrix(0.26687 0 0.04764 -0.025781 297.50 795.21)" d="M-909.7 3839.1L-460.8 3839.1L-428.0 3655.2L-876.9 3655.2z" filter="url(#g32)"/>
<path transform="matrix(0.26687 0 0.01588 -0.025781 416.50 795.21)" d="M-452.9 3839.1L-4.0 3839.1L7.0 3655.2L-441.9 3655.2z" filter="url(#g32)"/>
<path transform="matrix(0.26687 0 -0.01588 -0.025781 535.50 795.21)" d="M4.0 3839.1L452.9 3839.1L441.9 3655.2L-7.0 3655.2z" filter="url(#g32)"/>
<path transform="matrix(0.26687 0 -0.04764 -0.025781 654.50 795.21)" d="M460.8 3839.1L909.7 3839.1L876.9 3655.2L428.0 3655.2z" filter="url(#g32)"/>
<path transform="matrix(0.26687 0 -0.07939 -0.025781 773.50 795.21)" d="M917.7 3839.1L1366.6 3839.1L1311.9 3655.2L863.0 3655.2z" filter="url(#g32)"/>
<path transform="matrix(0.26687 0 -0.11115 -0.025781 892.50 795.21)" d="M1374.5 3839.1L1823.5 3839.1L1746.8 3655.2L1297.9 3655.2z" filter="url(#g32)"/>
<path transform="matrix(0.25619 0 0.10670 -0.023760 59.50 787.48)" d="M-1899.7 3999.8L-1432.1 3999.8L-1351.7 3806.8L-1819.3 3806.8z" filter="url(#g33)"/>
<path transform="matrix(0.25619 0 0.07622 -0.023760 178.50 787.48)" d="M-1423.7 3999.8L-956.1 3999.8L-898.7 3806.8L-1366.3 3806.8z" filter="url(#g33)"/>
<path transform="matrix(0.25619 0 0.04573 -0.023760 297.50 787.48)" d="M-947.8 3999.8L-480.2 3999.8L-445.7 3806.8L-913.3 3806.8z" filter="url(#g33)"/>
<path transform="matrix(0.25619 0 0.01524 -0.023760 416.50 787.48)" d="M-471.8 3999.8L-4.2 3999.8L7.3 3806.8L-460.3 3806.8z" filter="url(#g33)"/>
<path transform="matrix(0.25619 0 -0.01524 -0.023760 535.50 787.48)" d="M4.2 3999.8L471.8 3999.8L460.3 3806.8L-7.3 3806.8z" filter="url(#g33)"/>
<path transform="matrix(0.25619 0 -0.04573 -0.023760 654.50 787.48)" d="M480.2 3999.8L947.8 3999.8L913.3 3806.8L445.7 3806.8z" filter="url(#g33)"/>
<path transform="matrix(0.25619 0 -0.07622 -0.023760 773.50 787.48)" d="M956.1 3999.8L1423.7 3999.8L1366.3 3806.8L898.7 3806.8z" filter="url(#g33)"/>
<path transform="matrix(0.25619 0 -0.10670 -0.023760 892.50 787.48)" d="M1432.1 3999.8L1899.7 3999.8L1819.3 3806.8L1351.7 3806.8z" filter="url(#g33)"/>
<path transform="matrix(0.24595 0 0.10244 -0.021897 59.50 780.07)" d="M-1979.2 4167.2L-1492.1 4167.2L-1407.7 3964.7L-1894.8 3964.7z" filter="url(#g34)"/>
<path transform="matrix(0.24595 0 0.07317 -0.021897 178.50 780.07)" d="M-1483.3 4167.2L-996.2 4167.2L-935.9 3964.7L-1423.0 3964.7z" filter="url(#g34)"/>
<path transform="matrix(0.24595 0 0.04390 -0.021897 297.50 780.07)" d="M-987.4 4167.2L-500.3 4167.2L-464.1 3964.7L-951.2 3964.7z" filter="url(#g34)"/>
<path transform="matrix(0.24595 0 0.01463 -0.021897 416.50 780.07)" d="M-491.5 4167.2L-4.4 4167.2L7.7 3964.7L-479.4 3964.7z" filter="url(#g34)"/>
<path transform="matrix(0.24595 0 -0.01463 -0.021897 535.50 780.07)" d="M4.4 4167.2L491.5 4167.2L479.4 3964.7L-7.7 3964.7z" filter="url(#g34)"/>
<path transform="matrix(0.24595 0 -0.04390 -0.021897 654.50 780.07)" d="M500.3 4167.2L987.4 4167.2L951.2 3964.7L464.1 3964.7z" filter="url(#g34)"/>
<path transform="matrix(0.24595 0 -0.07317 -0.021897 773.50 780.07)" d="M996.2 4167.2L1483.3 4167.2L1423.0 3964.7L935.9 3964.7z" filter="url(#g34)"/>
<path transform="matrix(0.24595 0 -0.10244 -0.021897 892.50 780.07)" d="M1492.1 4167.2L1979.2 4167.2L1894.8 3964.7L1407.7 3964.7z" filter="url(#g34)"/>
<path transform="matrix(0.23611 0 0.09834 -0.020181 59.50 772.94)" d="M-2062.0 4341.6L-1554.6 4341.6L-1466.1 4129.1L-1973.5 4129.1z" filter="url(#g35)"/>
<path transform="matrix(0.23611 0 0.07024 -0.020181 178.50 772.94)" d="M-1545.3 4341.6L-1037.9 4341.6L-974.7 4129.1L-1482.1 4129.1z" filter="url(#g35)"/>
<path transform="matrix(0.23611 0 0.04215 -0.020181 297.50 772.94)" d="M-1028.7 4341.6L-521.3 4341.6L-483.3 4129.1L-990.7 4129.1z" filter="url(#g35)"/>
<path transform="matrix(0.23611 0 0.01405 -0.020181 416.50 772.94)" d="M-512.0 4341.6L-4.6 4341.6L8.0 4129.1L-499.4 4129.1z" filter="url(#g35)"/>
<path transform="matrix(0.23611 0 -0.01405 -0.020181 535.50 772.94)" d="M4.6 4341.6L512.0 4341.6L499.4 4129.1L-8.0 4129.1z" filter="url(#g35)"/>
<path transform="matrix(0.23611 0 -0.04215 -0.020181 654.50 772.94)" d="M521.3 4341.6L1028.7 4341.6L990.7 4129.1L483.3 4129.1z" filter="url(#g35)"/>
<path transform="matrix(0.23611 0 -0.07024 -0.020181 773.50 772.94)" d="M1037.9 4341.6L1545.3 4341.6L1482.1 4129.1L974.7 4129.1z" filter="url(#g35)"/>
<path transform="matrix(0.23611 0 -0.09834 -0.020181 892.50 772.94)" d="M1554.6 4341.6L2062.0 4341.6L1973.5 4129.1L1466.1 4129.1z" filter="url(#g35)"/>
<path transform="matrix(0.22666 0 0.09441 -0.018598 59.50 766.11)" d="M-2148.2 4523.4L-1619.7 4523.4L-1526.8 4300.3L-2055.3 4300.3z" filter="url(#g36)"/>
<path transform="matrix(0.22666 0 0.06743 -0.018598 178.50 766.11)" d="M-1610.0 4523.4L-1081.4 4523.4L-1015.1 4300.3L-1543.6 4300.3z" filter="url(#g36)"/>
<path transform="matrix(0.22666 0 0.04046 -0.018598 297.50 766.11)" d="M-1071.7 4523.4L-543.2 4523.4L-503.3 4300.3L-1031.9 4300.3z" filter="url(#g36)"/>
<path transform="matrix(0.22666 0 0.01349 -0.018598 416.50 766.11)" d="M-533.4 4523.4L-4.9 4523.4L8.4 4300.3L-520.1 4300.3z" filter="url(#g36)"/>
<path transform="matrix(0.22666 0 -0.01349 -0.018598 535.50 766.11)" d="M4.9 4523.4L533.4 4523.4L520.1 4300.3L-8.4 4300.3z" filter="url(#g36)"/>
<path transform="matrix(0.22666 0 -0.04046 -0.018598 654.50 766.11)" d="M543.2 4523.4L1071.7 4523.4L1031.9 4300.3L503.3 4300.3z" filter="url(#g36)"/>
<path transform="matrix(0.22666 0 -0.06743 -0.018598 773.50 766.11)" d="M1081.4 4523.4L1610.0 4523.4L1543.6 4300.3L1015.1 4300.3z" filter="url(#g36)"/>
<path transform="matrix(0.22666 0 -0.09441 -0.018598 892.50 766.11)" d="M1619.7 4523.4L2148.2 4523.4L2055.3 4300.3L1526.8 4300.3z" filter="url(#g36)"/>
<path transform="matrix(0.21760 0 0.09063 -0.017140 59.50 759.54)" d="M-2238.1 4712.8L-1687.6 4712.8L-1590.0 4478.5L-2140.6 4478.5z" filter="url(#g37)"/>
<path transform="matrix(0.21760 0 0.06474 -0.017140 178.50 759.54)" d="M-1677.3 4712.8L-1126.8 4712.8L-1057.1 4478.5L-1607.6 4478.5z" filter="url(#g37)"/>
<path transform="matrix(0.21760 0 0.03884 -0.017140 297.50 759.54)" d="M-1116.5 4712.8L-565.9 4712.8L-524.1 4478.5L-1074.7 4478.5z" filter="url(#g37)"/>
<path transform="matrix(0.21760 0 0.01295 -0.017140 416.50 759.54)" d="M-555.7 4712.8L-5.1 4712.8L8.8 4478.5L-541.7 4478.5z" filter="url(#g37)"/>
<path transform="matrix(0.21760 0 -0.01295 -0.017140 535.50 759.54)" d="M5.1 4712.8L555.7 4712.8L541.7 4478.5L-8.8 4478.5z" filter="url(#g37)"/>
<path transform="matrix(0.21760 0 -0.03884 -0.017140 654.50 759.54)" d="M565.9 4712.8L1116.5 4712.8L1074.7 4478.5L524.1 4478.5z" filter="url(#g37)"/>
<path transform="matrix(0.21760 0 -0.06474 -0.017140 773.50 759.54)" d="M1126.8 4712.8L1677.3 4712.8L1607.6 4478.5L1057.1 4478.5z" filter="url(#g37)"/>
<path transform="matrix(0.21760 0 -0.09063 -0.017140 892.50 759.54)" d="M1687.6 4712.8L2238.1 4712.8L2140.6 4478.5L1590.0 4478.5z" filter="url(#g37)"/>
<path transform="matrix(0.20889 0 0.08700 -0.015796 59.50 753.24)" d="M-2331.8 4910.1L-1758.3 4910.1L-1655.8 4664.1L-2229.3 4664.1z" filter="url(#g38)"/>
<path transform="matrix(0.20889 0 0.06215 -0.015796 178.50 753.24)" d="M-1747.5 4910.1L-1174.0 4910.1L-1100.8 4664.1L-1674.3 4664.1z" filter="url(#g38)"/>
<path transform="matrix(0.20889 0 0.03729 -0.015796 297.50 753.24)" d="M-1163.2 4910.1L-589.7 4910.1L-545.8 4664.1L-1119.3 4664.1z" filter="url(#g38)"/>
<path transform="matrix(0.20889 0 0.01243 -0.015796 416.50 753.24)" d="M-578.9 4910.1L-5.4 4910.1L9.2 4664.1L-564.3 4664.1z" filter="url(#g38)"/>
<path transform="matrix(0.20889 0 -0.01243 -0.015796 535.50 753.24)" d="M5.4 4910.1L578.9 4910.1L564.3 4664.1L-9.2 4664.1z" filter="url(#g38)"/>
<path transform="matrix(0.20889 0 -0.03729 -0.015796 654.50 753.24)" d="M589.7 4910.1L1163.2 4910.1L1119.3 4664.1L545.8 4664.1z" filter="url(#g38)"/>
<path transform="matrix(0.20889 0 -0.06215 -0.015796 773.50 753.24)" d="M1174.0 4910.1L1747.5 4910.1L1674.3 4664.1L1100.8 4664.1z" filter="url(#g38)"/>
<path transform="matrix(0.20889 0 -0.08700 -0.015796 892.50 753.24)" d="M1758.3 4910.1L2331.8 4910.1L2229.3 4664.1L1655.8 4664.1z" filter="url(#g38)"/>
<path transform="matrix(0.20054 0 0.08352 -0.014558 59.50 747.19)" d="M-2429.4 5115.8L-1832.0 5115.8L-1724.4 4857.3L-2321.8 4857.3z" filter="url(#g39)"/>
<path transform="matrix(0.20054 0 0.05966 -0.014558 178.50 747.19)" d="M-1820.7 5115.8L-1223.3 5115.8L-1146.4 4857.3L-1743.8 4857.3z" filter="url(#g39)"/>
<path transform="matrix(0.20054 0 0.03580 -0.014558 297.50 747.19)" d="M-1211.9 5115.8L-614.5 5115.8L-568.3 4857.3L-1165.7 4857.3z" filter="url(#g39)"/>
<path transform="matrix(0.20054 0 0.01193 -0.014558 416.50 747.19)" d="M-603.1 5115.8L-5.7 5115.8L9.7 4857.3L-587.7 4857.3z" filter="url(#g39)"/>
<path transform="matrix(0.20054 0 -0.01193 -0.014558 535.50 747.19)" d="M5.7 5115.8L603.1 5115.8L587.7 4857.3L-9.7 4857.3z" filter="url(#g39)"/>
<path transform="matrix(0.20054 0 -0.03580 -0.014558 654.50 747.19)" d="M614.5 5115.8L1211.9 5115.8L1165.7 4857.3L568.3 4857.3z" filter="url(#g39)"/>
<path transform="matrix(0.20054 0 -0.05966 -0.014558 773.50 747.19)" d="M1223.3 5115.8L1820.7 5115.8L1743.8 4857.3L1146.4 4857.3z" filter="url(#g39)"/>
<path transform="matrix(0.20054 0 -0.08352 -0.014558 892.50 747.19)" d="M1832.0 5115.8L2429.4 5115.8L2321.8 4857.3L1724.4 4857.3z" filter="url(#g39)"/>
<path transform="matrix(0.19252 0 0.08018 -0.013417 59.50 741.38)" d="M-2531.2 5330.2L-1908.9 5330.2L-1795.7 5058.5L-2418.0 5058.5z" filter="url(#g40)"/>
<path transform="matrix(0.19252 0 0.05727 -0.013417 178.50 741.38)" d="M-1896.9 5330.2L-1274.6 5330.2L-1193.8 5058.5L-1816.1 5058.5z" filter="url(#g40)"/>
<path transform="matrix(0.19252 0 0.03436 -0.013417 297.50 741.38)" d="M-1262.6 5330.2L-640.3 5330.2L-591.8 5058.5L-1214.1 5058.5z" filter="url(#g40)"/>
<path transform="matrix(0.19252 0 0.01145 -0.013417 416.50 741.38)" d="M-628.3 5330.2L-6.0 5330.2L10.2 5058.5L-612.1 5058.5z" filter="url(#g40)"/>
<path transform="matrix(0.19252 0 -0.01145 -0.013417 535.50 741.38)" d="M6.0 5330.2L628.3 5330.2L612.1 5058.5L-10.2 5058.5z" filter="url(#g40)"/>
<path transform="matrix(0.19252 0 -0.03436 -0.013417 654.50 741.38)" d="M640.3 5330.2L1262.6 5330.2L1214.1 5058.5L591.8 5058.5z" filter="url(#g40)"/>
<path transform="matrix(0.19252 0 -0.05727 -0.013417 773.50 741.38)" d="M1274.6 5330.2L1896.9 5330.2L1816.1 5058.5L1193.8 5058.5z" filter="url(#g40)"/>
<path transform="matrix(0.19252 0 -0.08018 -0.013417 892.50 741.38)" d="M1908.9 5330.2L2531.2 5330.2L2418.0 5058.5L1795.7 5058.5z" filter="url(#g40)"/>
<path transform="matrix(0.18482 0 0.07698 -0.012365 59.50 735.81)" d="M-2637.2 5553.6L-1989.0 5553.6L-1870.0 5268.0L-2518.2 5268.0z" filter="url(#g41)"/>
<path transform="matrix(0.18482 0 0.05498 -0.012365 178.50 735.81)" d="M-1976.3 5553.6L-1328.1 5553.6L-1243.1 5268.0L-1891.3 5268.0z" filter="url(#g41)"/>
<path transform="matrix(0.18482 0 0.03299 -0.012365 297.50 735.81)" d="M-1315.4 5553.6L-667.2 5553.6L-616.2 5268.0L-1264.4 5268.0z" filter="url(#g41)"/>
<path transform="matrix(0.18482 0 0.01100 -0.012365 416.50 735.81)" d="M-654.5 5553.6L-6.3 5553.6L10.7 5268.0L-637.6 5268.0z" filter="url(#g41)"/>
<path transform="matrix(0.18482 0 -0.01100 -0.012365 535.50 735.81)" d="M6.3 5553.6L654.5 5553.6L637.6 5268.0L-10.7 5268.0z" filter="url(#g41)"/>
<path transform="matrix(0.18482 0 -0.03299 -0.012365 654.50 735.81)" d="M667.2 5553.6L1315.4 5553.6L1264.4 5268.0L616.2 5268.0z" filter="url(#g41)"/>
<path transform="matrix(0.18482 0 -0.05498 -0.012365 773.50 735.81)" d="M1328.1 5553.6L1976.3 5553.6L1891.3 5268.0L1243.1 5268.0z" filter="url(#g41)"/>
<path transform="matrix(0.18482 0 -0.07698 -0.012365 892.50 735.81)" d="M1989.0 5553.6L2637.2 5553.6L2518.2 5268.0L1870.0 5268.0z" filter="url(#g41)"/>
<path transform="matrix(0.17742 0 0.07390 -0.011395 59.50 730.45)" d="M-2747.6 5786.4L-2072.4 5786.4L-1947.4 5486.1L-2622.6 5486.1z" filter="url(#g42)"/>
<path transform="matrix(0.17742 0 0.05278 -0.011395 178.50 730.45)" d="M-2059.1 5786.4L-1383.8 5786.4L-1294.5 5486.1L-1969.7 5486.1z" filter="url(#g42)"/>
<path transform="matrix(0.17742 0 0.03167 -0.011395 297.50 730.45)" d="M-1370.5 5786.4L-695.3 5786.4L-641.7 5486.1L-1316.9 5486.1z" filter="url(#g42)"/>
<path transform="matrix(0.17742 0 0.01056 -0.011395 416.50 730.45)" d="M-681.9 5786.4L-6.7 5786.4L11.2 5486.1L-664.0 5486.1z" filter="url(#g42)"/>
<path transform="matrix(0.17742 0 -0.01056 -0.011395 535.50 730.45)" d="M6.7 5786.4L681.9 5786.4L664.0 5486.1L-11.2 5486.1z" filter="url(#g42)"/>
<path transform="matrix(0.17742 0 -0.03167 -0.011395 654.50 730.45)" d="M695.3 5786.4L1370.5 5786.4L1316.9 5486.1L641.7 5486.1z" filter="url(#g42)"/>
<path transform="matrix(0.17742 0 -0.05278 -0.011395 773.50 730.45)" d="M1383.8 5786.4L2059.1 5786.4L1969.7 5486.1L1294.5 5486.1z" filter="url(#g42)"/>
<path transform="matrix(0.17742 0 -0.07390 -0.011395 892.50 730.45)" d="M2072.4 5786.4L2747.6 5786.4L2622.6 5486.1L1947.4 5486.1z" filter="url(#g42)"/>
<path transform="matrix(0.17033 0 0.07094 -0.010502 59.50 725.32)" d="M-2862.8 6029.0L-2159.4 6029.0L-2027.9 5713.2L-2731.2 5713.2z" filter="url(#g43)"/>
<path transform="matrix(0.17033 0 0.05067 -0.010502 178.50 725.32)" d="M-2145.3 6029.0L-1441.9 6029.0L-1348.0 5713.2L-2051.3 5713.2z" filter="url(#g43)"/>
<path transform="matrix(0.17033 0 0.03040 -0.010502 297.50 725.32)" d="M-1427.9 6029.0L-724.5 6029.0L-668.1 5713.2L-1371.5 5713.2z" filter="url(#g43)"/>
<path transform="matrix(0.17033 0 0.01013 -0.010502 416.50 725.32)" d="M-710.4 6029.0L-7.0 6029.0L11.7 5713.2L-691.6 5713.2z" filter="url(#g43)"/>
<path transform="matrix(0.17033 0 -0.01013 -0.010502 535.50 725.32)" d="M7.0 6029.0L710.4 6029.0L691.6 5713.2L-11.7 5713.2z" filter="url(#g43)"/>
<path transform="matrix(0.17033 0 -0.03040 -0.010502 654.50 725.32)" d="M724.5 6029.0L1427.9 6029.0L1371.5 5713.2L668.1 5713.2z" filter="url(#g43)"/>
<path transform="matrix(0.17033 0 -0.05067 -0.010502 773.50 725.32)" d="M1441.9 6029.0L2145.3 6029.0L2051.3 5713.2L1348.0 5713.2z" filter="url(#g43)"/>
<path transform="matrix(0.17033 0 -0.07094 -0.010502 892.50 725.32)" d="M2159.4 6029.0L2862.8 6029.0L2731.2 5713.2L2027.9 5713.2z" filter="url(#g43)"/>
<path transform="matrix(0.16351 0 0.06810 -0.009679 59.50 720.38)" d="M-2982.7 6281.8L-2250.1 6281.8L-2111.7 5949.6L-2844.3 5949.6z" filter="url(#g44)"/>
<path transform="matrix(0.16351 0 0.04865 -0.009679 178.50 720.38)" d="M-2235.2 6281.8L-1502.5 6281.8L-1403.7 5949.6L-2136.3 5949.6z" filter="url(#g44)"/>
<path transform="matrix(0.16351 0 0.02919 -0.009679 297.50 720.38)" d="M-1487.6 6281.8L-755.0 6281.8L-695.7 5949.6L-1428.3 5949.6z" filter="url(#g44)"/>
<path transform="matrix(0.16351 0 0.00973 -0.009679 416.50 720.38)" d="M-740.1 6281.8L-7.4 6281.8L12.3 5949.6L-720.3 5949.6z" filter="url(#g44)"/>
<path transform="matrix(0.16351 0 -0.00973 -0.009679 535.50 720.38)" d="M7.4 6281.8L740.1 6281.8L720.3 5949.6L-12.3 5949.6z" filter="url(#g44)"/>
<path transform="matrix(0.16351 0 -0.02919 -0.009679 654.50 720.38)" d="M755.0 6281.8L1487.6 6281.8L1428.3 5949.6L695.7 5949.6z" filter="url(#g44)"/>
<path transform="matrix(0.16351 0 -0.04865 -0.009679 773.50 720.38)" d="M1502.5 6281.8L2235.2 6281.8L2136.3 5949.6L1403.7 5949.6z" filter="url(#g44)"/>
<path transform="matrix(0.16351 0 -0.06810 -0.009679 892.50 720.38)" d="M2250.1 6281.8L2982.7 6281.8L2844.3 5949.6L2111.7 5949.6z" filter="url(#g44)"/>
<path transform="matrix(0.15697 0 0.06538 -0.008920 59.50 715.65)" d="M-3107.7 6545.4L-2344.6 6545.4L-2198.9 6195.7L-2962.1 6195.7z" filter="url(#g45)"/>
<path transform="matrix(0.15697 0 0.04670 -0.008920 178.50 715.65)" d="M-2328.8 6545.4L-1565.7 6545.4L-1461.6 6195.7L-2224.8 6195.7z" filter="url(#g45)"/>
<path transform="matrix(0.15697 0 0.02802 -0.008920 297.50 715.65)" d="M-1549.9 6545.4L-786.8 6545.4L-724.3 6195.7L-1487.5 6195.7z" filter="url(#g45)"/>
<path transform="matrix(0.15697 0 0.00934 -0.008920 416.50 715.65)" d="M-771.0 6545.4L-7.9 6545.4L13.0 6195.7L-750.2 6195.7z" filter="url(#g45)"/>
<path transform="matrix(0.15697 0 -0.00934 -0.008920 535.50 715.65)" d="M7.9 6545.4L771.0 6545.4L750.2 6195.7L-13.0 6195.7z" filter="url(#g45)"/>
<path transform="matrix(0.15697 0 -0.02802 -0.008920 654.50 715.65)" d="M786.8 6545.4L1549.9 6545.4L1487.5 6195.7L724.3 6195.7z" filter="url(#g45)"/>
<path transform="matrix(0.15697 0 -0.04670 -0.008920 773.50 715.65)" d="M1565.7 6545.4L2328.8 6545.4L2224.8 6195.7L1461.6 6195.7z" filter="url(#g45)"/>
<path transform="matrix(0.15697 0 -0.06538 -0.008920 892.50 715.65)" d="M2344.6 6545.4L3107.7 6545.4L2962.1 6195.7L2198.9 6195.7z" filter="url(#g45)"/>
<path transform="matrix(0.15069 0 0.06276 -0.008221 59.50 711.10)" d="M-3238.0 6820.1L-2443.1 6820.1L-2289.7 6451.9L-3084.7 6451.9z" filter="url(#g46)"/>
<path transform="matrix(0.15069 0 0.04483 -0.008221 178.50 711.10)" d="M-2426.5 6820.1L-1631.5 6820.1L-1521.9 6451.9L-2316.9 6451.9z" filter="url(#g46)"/>
<path transform="matrix(0.15069 0 0.02690 -0.008221 297.50 711.10)" d="M-1614.9 6820.1L-819.9 6820.1L-754.2 6451.9L-1549.2 6451.9z" filter="url(#g46)"/>
<path transform="matrix(0.15069 0 0.00897 -0.008221 416.50 711.10)" d="M-803.3 6820.1L-8.3 6820.1L13.6 6451.9L-781.4 6451.9z" filter="url(#g46)"/>
<path transform="matrix(0.15069 0 -0.00897 -0.008221 535.50 711.10)" d="M8.3 6820.1L803.3 6820.1L781.4 6451.9L-13.6 6451.9z" filter="url(#g46)"/>
<path transform="matrix(0.15069 0 -0.02690 -0.008221 654.50 711.10)" d="M819.9 6820.1L1614.9 6820.1L1549.2 6451.9L754.2 6451.9z" filter="url(#g46)"/>
<path transform="matrix(0.15069 0 -0.04483 -0.008221 773.50 711.10)" d="M1631.5 6820.1L2426.5 6820.1L2316.9 6451.9L1521.9 6451.9z" filter="url(#g46)"/>
<path transform="matrix(0.15069 0 -0.06276 -0.008221 892.50 711.10)" d="M2443.1 6820.1L3238.0 6820.1L3084.7 6451.9L2289.7 6451.9z" filter="url(#g46)"/>
<path transform="matrix(0.14467 0 0.06025 -0.007576 59.50 706.74)" d="M-3373.8 7106.3L-2545.7 7106.3L-2384.2 6718.6L-3212.4 6718.6z" filter="url(#g47)"/>
<path transform="matrix(0.14467 0 0.04304 -0.007576 178.50 706.74)" d="M-2528.2 7106.3L-1700.1 7106.3L-1584.7 6718.6L-2412.8 6718.6z" filter="url(#g47)"/>
<path transform="matrix(0.14467 0 0.02582 -0.007576 297.50 706.74)" d="M-1682.5 7106.3L-854.4 7106.3L-785.2 6718.6L-1613.3 6718.6z" filter="url(#g47)"/>
<path transform="matrix(0.14467 0 0.00861 -0.007576 416.50 706.74)" d="M-836.9 7106.3L-8.8 7106.3L14.3 6718.6L-813.8 6718.6z" filter="url(#g47)"/>
<path transform="matrix(0.14467 0 -0.00861 -0.007576 535.50 706.74)" d="M8.8 7106.3L836.9 7106.3L813.8 6718.6L-14.3 6718.6z" filter="url(#g47)"/>
<path transform="matrix(0.14467 0 -0.02582 -0.007576 654.50 706.74)" d="M854.4 7106.3L1682.5 7106.3L1613.3 6718.6L785.2 6718.6z" filter="url(#g47)"/>
<path transform="matrix(0.14467 0 -0.04304 -0.007576 773.50 706.74)" d="M1700.1 7106.3L2528.2 7106.3L2412.8 6718.6L1584.7 6718.6z" filter="url(#g47)"/>
<path transform="matrix(0.14467 0 -0.06025 -0.007576 892.50 706.74)" d="M2545.7 7106.3L3373.8 7106.3L3212.4 6718.6L2384.2 6718.6z" filter="url(#g47)"/>
<path transform="matrix(0.13888 0 0.05784 -0.006982 59.50 702.55)" d="M-3515.4 7404.7L-2652.8 7404.7L-2482.6 6996.2L-3345.2 6996.2z" filter="url(#g48)"/>
<path transform="matrix(0.13888 0 0.04132 -0.006982 178.50 702.55)" d="M-2634.2 7404.7L-1771.6 7404.7L-1650.1 6996.2L-2512.7 6996.2z" filter="url(#g48)"/>
<path transform="matrix(0.13888 0 0.02479 -0.006982 297.50 702.55)" d="M-1753.1 7404.7L-890.4 7404.7L-817.5 6996.2L-1680.1 6996.2z" filter="url(#g48)"/>
<path transform="matrix(0.13888 0 0.00826 -0.006982 416.50 702.55)" d="M-871.9 7404.7L-9.3 7404.7L15.0 6996.2L-847.6 6996.2z" filter="url(#g48)"/>
<path transform="matrix(0.13888 0 -0.00826 -0.006982 535.50 702.55)" d="M9.3 7404.7L871.9 7404.7L847.6 6996.2L-15.0 6996.2z" filter="url(#g48)"/>
<path transform="matrix(0.13888 0 -0.02479 -0.006982 654.50 702.55)" d="M890.4 7404.7L1753.1 7404.7L1680.1 6996.2L817.5 6996.2z" filter="url(#g48)"/>
<path transform="matrix(0.13888 0 -0.04132 -0.006982 773.50 702.55)" d="M1771.6 7404.7L2634.2 7404.7L2512.7 6996.2L1650.1 6996.2z" filter="url(#g48)"/>
<path transform="matrix(0.13888 0 -0.05784 -0.006982 892.50 702.55)" d="M2652.8 7404.7L3515.4 7404.7L3345.2 6996.2L2482.6 6996.2z" filter="url(#g48)"/>
<path transform="matrix(0.13332 0 0.05553 -0.006435 59.50 698.53)" d="M-3662.9 7715.7L-2764.3 7715.7L-2585.0 7285.3L-3483.6 7285.3z" filter="url(#g49)"/>
<path transform="matrix(0.13332 0 0.03966 -0.006435 178.50 698.53)" d="M-2744.7 7715.7L-1846.2 7715.7L-1718.1 7285.3L-2616.6 7285.3z" filter="url(#g49)"/>
<path transform="matrix(0.13332 0 0.02380 -0.006435 297.50 698.53)" d="M-1826.5 7715.7L-928.0 7715.7L-851.1 7285.3L-1749.7 7285.3z" filter="url(#g49)"/>
<path transform="matrix(0.13332 0 0.00793 -0.006435 416.50 698.53)" d="M-908.4 7715.7L-9.8 7715.7L15.8 7285.3L-882.8 7285.3z" filter="url(#g49)"/>
<path transform="matrix(0.13332 0 -0.00793 -0.006435 535.50 698.53)" d="M9.8 7715.7L908.4 7715.7L882.8 7285.3L-15.8 7285.3z" filter="url(#g49)"/>
<path transform="matrix(0.13332 0 -0.02380 -0.006435 654.50 698.53)" d="M928.0 7715.7L1826.5 7715.7L1749.7 7285.3L851.1 7285.3z" filter="url(#g49)"/>
<path transform="matrix(0.13332 0 -0.03966 -0.006435 773.50 698.53)" d="M1846.2 7715.7L2744.7 7715.7L2616.6 7285.3L1718.1 7285.3z" filter="url(#g49)"/>
<path transform="matrix(0.13332 0 -0.05553 -0.006435 892.50 698.53)" d="M2764.3 7715.7L3662.9 7715.7L3483.6 7285.3L2585.0 7285.3z" filter="url(#g49)"/>
<path transform="matrix(0.12799 0 0.05331 -0.005930 59.50 694.67)" d="M-3816.6 8039.9L-2880.6 8039.9L-2691.6 7586.1L-3627.6 7586.1z" filter="url(#g50)"/>
<path transform="matrix(0.12799 0 0.03808 -0.005930 178.50 694.67)" d="M-2859.9 8039.9L-1923.9 8039.9L-1788.9 7586.1L-2724.9 7586.1z" filter="url(#g50)"/>
<path transform="matrix(0.12799 0 0.02285 -0.005930 297.50 694.67)" d="M-1903.1 8039.9L-967.1 8039.9L-886.1 7586.1L-1822.1 7586.1z" filter="url(#g50)"/>
<path transform="matrix(0.12799 0 0.00762 -0.005930 416.50 694.67)" d="M-946.4 8039.9L-10.4 8039.9L16.6 7586.1L-919.4 7586.1z" filter="url(#g50)"/>
<path transform="matrix(0.12799 0 -0.00762 -0.005930 535.50 694.67)" d="M10.4 8039.9L946.4 8039.9L919.4 7586.1L-16.6 7586.1z" filter="url(#g50)"/>
<path transform="matrix(0.12799 0 -0.02285 -0.005930 654.50 694.67)" d="M967.1 8039.9L1903.1 8039.9L1822.1 7586.1L886.1 7586.1z" filter="url(#g50)"/>
<path transform="matrix(0.12799 0 -0.03808 -0.005930 773.50 694.67)" d="M1923.9 8039.9L2859.9 8039.9L2724.9 7586.1L1788.9 7586.1z" filter="url(#g50)"/>
<path transform="matrix(0.12799 0 -0.05331 -0.005930 892.50 694.67)" d="M2880.6 8039.9L3816.6 8039.9L3627.6 7586.1L2691.6 7586.1z" filter="url(#g50)"/>
<path transform="matrix(0.12287 0 0.05118 -0.005465 59.50 690.96)" d="M-3976.9 8377.9L-3001.9 8377.9L-2802.6 7899.3L-3777.6 7899.3z" filter="url(#g51)"/>
<path transform="matrix(0.12287 0 0.03655 -0.005465 178.50 690.96)" d="M-2979.9 8377.9L-2004.9 8377.9L-1862.5 7899.3L-2837.5 7899.3z" filter="url(#g51)"/>
<path transform="matrix(0.12287 0 0.02193 -0.005465 297.50 690.96)" d="M-1982.9 8377.9L-1007.9 8377.9L-922.5 7899.3L-1897.5 7899.3z" filter="url(#g51)"/>
<path transform="matrix(0.12287 0 0.00731 -0.005465 416.50 690.96)" d="M-986.0 8377.9L-11.0 8377.9L17.5 7899.3L-957.5 7899.3z" filter="url(#g51)"/>
<path transform="matrix(0.12287 0 -0.00731 -0.005465 535.50 690.96)" d="M11.0 8377.9L986.0 8377.9L957.5 7899.3L-17.5 7899.3z" filter="url(#g51)"/>
<path transform="matrix(0.12287 0 -0.02193 -0.005465 654.50 690.96)" d="M1007.9 8377.9L1982.9 8377.9L1897.5 7899.3L922.5 7899.3z" filter="url(#g51)"/>
<path transform="matrix(0.12287 0 -0.03655 -0.005465 773.50 690.96)" d="M2004.9 8377.9L2979.9 8377.9L2837.5 7899.3L1862.5 7899.3z" filter="url(#g51)"/>
<path transform="matrix(0.12287 0 -0.05118 -0.005465 892.50 690.96)" d="M3001.9 8377.9L3976.9 8377.9L3777.6 7899.3L2802.6 7899.3z" filter="url(#g51)"/>
<path transform="matrix(0.11796 0 0.04913 -0.005037 59.50 687.40)" d="M-4143.9 8730.1L-3128.3 8730.1L-2918.0 8225.3L-3933.6 8225.3z" filter="url(#g52)"/>
<path transform="matrix(0.11796 0 0.03509 -0.005037 178.50 687.40)" d="M-3105.0 8730.1L-2089.4 8730.1L-1939.2 8225.3L-2954.8 8225.3z" filter="url(#g52)"/>
<path transform="matrix(0.11796 0 0.02106 -0.005037 297.50 687.40)" d="M-2066.1 8730.1L-1050.5 8730.1L-960.4 8225.3L-1976.0 8225.3z" filter="url(#g52)"/>
<path transform="matrix(0.11796 0 0.00702 -0.005037 416.50 687.40)" d="M-1027.3 8730.1L-11.6 8730.1L18.4 8225.3L-997.2 8225.3z" filter="url(#g52)"/>
<path transform="matrix(0.11796 0 -0.00702 -0.005037 535.50 687.40)" d="M11.6 8730.1L1027.3 8730.1L997.2 8225.3L-18.4 8225.3z" filter="url(#g52)"/>
<path transform="matrix(0.11796 0 -0.02106 -0.005037 654.50 687.40)" d="M1050.5 8730.1L2066.1 8730.1L1976.0 8225.3L960.4 8225.3z" filter="url(#g52)"/>
<path transform="matrix(0.11796 0 -0.03509 -0.005037 773.50 687.40)" d="M2089.4 8730.1L3105.0 8730.1L2954.8 8225.3L1939.2 8225.3z" filter="url(#g52)"/>
<path transform="matrix(0.11796 0 -0.04913 -0.005037 892.50 687.40)" d="M3128.3 8730.1L4143.9 8730.1L3933.6 8225.3L2918.0 8225.3z" filter="url(#g52)"/>
<path transform="matrix(0.11324 0 0.04716 -0.004642 59.50 683.98)" d="M-4318.0 9097.3L-3260.1 9097.3L-3038.2 8564.5L-4096.1 8564.5z" filter="url(#g53)"/>
<path transform="matrix(0.11324 0 0.03369 -0.004642 178.50 683.98)" d="M-3235.4 9097.3L-2177.5 9097.3L-2019.0 8564.5L-3076.9 8564.5z" filter="url(#g53)"/>
<path transform="matrix(0.11324 0 0.02021 -0.004642 297.50 683.98)" d="M-2152.8 9097.3L-1094.9 9097.3L-999.8 8564.5L-2057.7 8564.5z" filter="url(#g53)"/>
<path transform="matrix(0.11324 0 0.00674 -0.004642 416.50 683.98)" d="M-1070.3 9097.3L-12.3 9097.3L19.4 8564.5L-1038.6 8564.5z" filter="url(#g53)"/>
<path transform="matrix(0.11324 0 -0.00674 -0.004642 535.50 683.98)" d="M12.3 9097.3L1070.3 9097.3L1038.6 8564.5L-19.4 8564.5z" filter="url(#g53)"/>
<path transform="matrix(0.11324 0 -0.02021 -0.004642 654.50 683.98)" d="M1094.9 9097.3L2152.8 9097.3L2057.7 8564.5L999.8 8564.5z" filter="url(#g53)"/>
<path transform="matrix(0.11324 0 -0.03369 -0.004642 773.50 683.98)" d="M2177.5 9097.3L3235.4 9097.3L3076.9 8564.5L2019.0 8564.5z" filter="url(#g53)"/>
<path transform="matrix(0.11324 0 -0.04716 -0.004642 892.50 683.98)" d="M3260.1 9097.3L4318.0 9097.3L4096.1 8564.5L3038.2 8564.5z" filter="url(#g53)"/>
<path transform="matrix(0.10871 0 0.04528 -0.004278 59.50 680.71)" d="M-4499.5 9480.1L-3397.5 9480.1L-3163.2 8917.6L-4265.2 8917.6z" filter="url(#g54)"/>
<path transform="matrix(0.10871 0 0.03234 -0.004278 178.50 680.71)" d="M-3371.3 9480.1L-2269.3 9480.1L-2102.0 8917.6L-3204.0 8917.6z" filter="url(#g54)"/>
<path transform="matrix(0.10871 0 0.01940 -0.004278 297.50 680.71)" d="M-2243.2 9480.1L-1141.2 9480.1L-1040.8 8917.6L-2142.8 8917.6z" filter="url(#g54)"/>
<path transform="matrix(0.10871 0 0.00647 -0.004278 416.50 680.71)" d="M-1115.1 9480.1L-13.1 9480.1L20.4 8917.6L-1081.6 8917.6z" filter="url(#g54)"/>
<path transform="matrix(0.10871 0 -0.00647 -0.004278 535.50 680.71)" d="M13.1 9480.1L1115.1 9480.1L1081.6 8917.6L-20.4 8917.6z" filter="url(#g54)"/>
<path transform="matrix(0.10871 0 -0.01940 -0.004278 654.50 680.71)" d="M1141.2 9480.1L2243.2 9480.1L2142.8 8917.6L1040.8 8917.6z" filter="url(#g54)"/>
<path transform="matrix(0.10871 0 -0.03234 -0.004278 773.50 680.71)" d="M2269.3 9480.1L3371.3 9480.1L3204.0 8917.6L2102.0 8917.6z" filter="url(#g54)"/>
<path transform="matrix(0.10871 0 -0.04528 -0.004278 892.50 680.71)" d="M3397.5 9480.1L4499.5 9480.1L4265.2 8917.6L3163.2 8917.6z" filter="url(#g54)"/>
<path transform="matrix(0.10436 0 0.04347 -0.003943 59.50 677.56)" d="M-4688.6 9879.2L-3540.7 9879.2L-3293.3 9285.1L-4441.2 9285.1z" filter="url(#g55)"/>
<path transform="matrix(0.10436 0 0.03105 -0.003943 178.50 677.56)" d="M-3513.0 9879.2L-2365.1 9879.2L-2188.4 9285.1L-3336.3 9285.1z" filter="url(#g55)"/>
<path transform="matrix(0.10436 0 0.01863 -0.003943 297.50 677.56)" d="M-2337.4 9879.2L-1189.5 9879.2L-1083.4 9285.1L-2231.4 9285.1z" filter="url(#g55)"/>
<path transform="matrix(0.10436 0 0.00621 -0.003943 416.50 677.56)" d="M-1161.8 9879.2L-13.8 9879.2L21.5 9285.1L-1126.4 9285.1z" filter="url(#g55)"/>
<path transform="matrix(0.10436 0 -0.00621 -0.003943 535.50 677.56)" d="M13.8 9879.2L1161.8 9879.2L1126.4 9285.1L-21.5 9285.1z" filter="url(#g55)"/>
<path transform="matrix(0.10436 0 -0.01863 -0.003943 654.50 677.56)" d="M1189.5 9879.2L2337.4 9879.2L2231.4 9285.1L1083.4 9285.1z" filter="url(#g55)"/>
<path transform="matrix(0.10436 0 -0.03105 -0.003943 773.50 677.56)" d="M2365.1 9879.2L3513.0 9879.2L3336.3 9285.1L2188.4 9285.1z" filter="url(#g55)"/>
<path transform="matrix(0.10436 0 -0.04347 -0.003943 892.50 677.56)" d="M3540.7 9879.2L4688.6 9879.2L4441.2 9285.1L3293.3 9285.1z" filter="url(#g55)"/>
<path transform="matrix(0.10016 0 0.04172 -0.003632 59.50 674.52)" d="M-4888.3 10300.8L-3692.2 10300.8L-3428.4 9667.5L-4624.5 9667.5z" filter="url(#g56)"/>
<path transform="matrix(0.10016 0 0.02980 -0.003632 178.50 674.52)" d="M-3662.5 10300.8L-2466.4 10300.8L-2278.0 9667.5L-3474.1 9667.5z" filter="url(#g56)"/>
<path transform="matrix(0.10016 0 0.01788 -0.003632 297.50 674.52)" d="M-2436.7 10300.8L-1240.6 10300.8L-1127.6 9667.5L-2323.7 9667.5z" filter="url(#g56)"/>
<path transform="matrix(0.10016 0 0.00596 -0.003632 416.50 674.52)" d="M-1210.9 10300.8L-14.8 10300.8L22.8 9667.5L-1173.3 9667.5z" filter="url(#g56)"/>
<path transform="matrix(0.10016 0 -0.00596 -0.003632 535.50 674.52)" d="M14.8 10300.8L1210.9 10300.8L1173.3 9667.5L-22.8 9667.5z" filter="url(#g56)"/>
<path transform="matrix(0.10016 0 -0.01788 -0.003632 654.50 674.52)" d="M1240.6 10300.8L2436.7 10300.8L2323.7 9667.5L1127.6 9667.5z" filter="url(#g56)"/>
<path transform="matrix(0.10016 0 -0.02980 -0.003632 773.50 674.52)" d="M2466.4 10300.8L3662.5 10300.8L3474.1 9667.5L2278.0 9667.5z" filter="url(#g56)"/>
<path transform="matrix(0.10016 0 -0.04172 -0.003632 892.50 674.52)" d="M3692.2 10300.8L4888.3 10300.8L4624.5 9667.5L3428.4 9667.5z" filter="url(#g56)"/>
<path transform="matrix(0.09602 0 0.03999 -0.003337 59.50 671.52)" d="M-5105.2 10759.6L-3857.5 10759.6L-3570.5 10070.4L-4818.2 10070.4z" filter="url(#g57)"/>
<path transform="matrix(0.09602 0 0.02856 -0.003337 178.50 671.52)" d="M-3824.8 10759.6L-2577.1 10759.6L-2372.1 10070.4L-3619.8 10070.4z" filter="url(#g57)"/>
<path transform="matrix(0.09602 0 0.01714 -0.003337 297.50 671.52)" d="M-2544.4 10759.6L-1296.7 10759.6L-1173.7 10070.4L-2421.4 10070.4z" filter="url(#g57)"/>
<path transform="matrix(0.09602 0 0.00571 -0.003337 416.50 671.52)" d="M-1264.1 10759.6L-16.3 10759.6L24.7 10070.4L-1223.0 10070.4z" filter="url(#g57)"/>
<path transform="matrix(0.09602 0 -0.00571 -0.003337 535.50 671.52)" d="M16.3 10759.6L1264.1 10759.6L1223.0 10070.4L-24.7 10070.4z" filter="url(#g57)"/>
<path transform="matrix(0.09602 0 -0.01714 -0.003337 654.50 671.52)" d="M1296.7 10759.6L2544.4 10759.6L2421.4 10070.4L1173.7 10070.4z" filter="url(#g57)"/>
<path transform="matrix(0.09602 0 -0.02856 -0.003337 773.50 671.52)" d="M2577.1 10759.6L3824.8 10759.6L3619.8 10070.4L2372.1 10070.4z" filter="url(#g57)"/>
<path transform="matrix(0.09602 0 -0.03999 -0.003337 892.50 671.52)" d="M3857.5 10759.6L5105.2 10759.6L4818.2 10070.4L3570.5 10070.4z" filter="url(#g57)"/>
<path transform="matrix(0.09187 0 0.03826 -0.003055 59.50 668.52)" d="M-5342.3 11261.1L-4038.3 11261.1L-3724.7 10508.4L-5028.7 10508.4z" filter="url(#g58)"/>
<path transform="matrix(0.09187 0 0.02733 -0.003055 178.50 668.52)" d="M-4002.2 11261.1L-2698.2 11261.1L-2474.2 10508.4L-3778.2 10508.4z" filter="url(#g58)"/>
<path transform="matrix(0.09187 0 0.01640 -0.003055 297.50 668.52)" d="M-2662.1 11261.1L-1358.1 11261.1L-1223.7 10508.4L-2527.7 10508.4z" filter="url(#g58)"/>
<path transform="matrix(0.09187 0 0.00547 -0.003055 416.50 668.52)" d="M-1322.0 11261.1L-18.0 11261.1L26.7 10508.4L-1277.2 10508.4z" filter="url(#g58)"/>
<path transform="matrix(0.09187 0 -0.00547 -0.003055 535.50 668.52)" d="M18.0 11261.1L1322.0 11261.1L1277.2 10508.4L-26.7 10508.4z" filter="url(#g58)"/>
<path transform="matrix(0.09187 0 -0.01640 -0.003055 654.50 668.52)" d="M1358.1 11261.1L2662.1 11261.1L2527.7 10508.4L1223.7 10508.4z" filter="url(#g58)"/>
<path transform="matrix(0.09187 0 -0.02733 -0.003055 773.50 668.52)" d="M2698.2 11261.1L4002.2 11261.1L3778.2 10508.4L2474.2 10508.4z" filter="url(#g58)"/>
<path transform="matrix(0.09187 0 -0.03826 -0.003055 892.50 668.52)" d="M4038.3 11261.1L5342.3 11261.1L5028.7 10508.4L3724.7 10508.4z" filter="url(#g58)"/>
<path transform="matrix(0.08773 0 0.03654 -0.002786 59.50 665.52)" d="M-5602.3 11811.6L-4236.8 11811.6L-3892.9 10986.1L-5258.5 10986.1z" filter="url(#g59)"/>
<path transform="matrix(0.08773 0 0.02610 -0.002786 178.50 665.52)" d="M-4196.8 11811.6L-2831.2 11811.6L-2585.6 10986.1L-3951.2 10986.1z" filter="url(#g59)"/>
<path transform="matrix(0.08773 0 0.01566 -0.002786 297.50 665.52)" d="M-2791.2 11811.6L-1425.6 11811.6L-1278.2 10986.1L-2643.8 10986.1z" filter="url(#g59)"/>
<path transform="matrix(0.08773 0 0.00522 -0.002786 416.50 665.52)" d="M-1385.6 11811.6L-20.0 11811.6L29.1 10986.1L-1336.5 10986.1z" filter="url(#g59)"/>
<path transform="matrix(0.08773 0 -0.00522 -0.002786 535.50 665.52)" d="M20.0 11811.6L1385.6 11811.6L1336.5 10986.1L-29.1 10986.1z" filter="url(#g59)"/>
<path transform="matrix(0.08773 0 -0.01566 -0.002786 654.50 665.52)" d="M1425.6 11811.6L2791.2 11811.6L2643.8 10986.1L1278.2 10986.1z" filter="url(#g59)"/>
<path transform="matrix(0.08773 0 -0.02610 -0.002786 773.50 665.52)" d="M2831.2 11811.6L4196.8 11811.6L3951.2 10986.1L2585.6 10986.1z" filter="url(#g59)"/>
<path transform="matrix(0.08773 0 -0.03654 -0.002786 892.50 665.52)" d="M4236.8 11811.6L5602.3 11811.6L5258.5 10986.1L3892.9 10986.1z" filter="url(#g59)"/>
<path transform="matrix(0.08358 0 0.03481 -0.002529 59.50 662.52)" d="M-5889.0 12418.7L-4455.7 12418.7L-4077.0 11509.2L-5510.2 11509.2z" filter="url(#g60)"/>
<path transform="matrix(0.08358 0 0.02487 -0.002529 178.50 662.52)" d="M-4411.2 12418.7L-2977.9 12418.7L-2707.4 11509.2L-4140.6 11509.2z" filter="url(#g60)"/>
<path transform="matrix(0.08358 0 0.01492 -0.002529 297.50 662.52)" d="M-2933.4 12418.7L-1500.1 12418.7L-1337.8 11509.2L-2771.0 11509.2z" filter="url(#g60)"/>
<path transform="matrix(0.08358 0 0.00497 -0.002529 416.50 662.52)" d="M-1455.6 12418.7L-22.3 12418.7L31.8 11509.2L-1401.4 11509.2z" filter="url(#g60)"/>
<path transform="matrix(0.08358 0 -0.00497 -0.002529 535.50 662.52)" d="M22.3 12418.7L1455.6 12418.7L1401.4 11509.2L-31.8 11509.2z" filter="url(#g60)"/>
<path transform="matrix(0.08358 0 -0.01492 -0.002529 654.50 662.52)" d="M1500.1 12418.7L2933.4 12418.7L2771.0 11509.2L1337.8 11509.2z" filter="url(#g60)"/>
<path transform="matrix(0.08358 0 -0.02487 -0.002529 773.50 662.52)" d="M2977.9 12418.7L4411.2 12418.7L4140.6 11509.2L2707.4 11509.2z" filter="url(#g60)"/>
<path transform="matrix(0.08358 0 -0.03481 -0.002529 892.50 662.52)" d="M4455.7 12418.7L5889.0 12418.7L5510.2 11509.2L4077.0 11509.2z" filter="url(#g60)"/>
<path transform="matrix(0.07944 0 0.03309 -0.002285 59.50 659.52)" d="M-6206.6 13091.4L-4698.5 13091.4L-4279.2 12084.6L-5787.3 12084.6z" filter="url(#g61)"/>
<path transform="matrix(0.07944 0 0.02363 -0.002285 178.50 659.52)" d="M-4648.7 13091.4L-3140.7 13091.4L-2841.1 12084.6L-4349.2 12084.6z" filter="url(#g61)"/>
<path transform="matrix(0.07944 0 0.01418 -0.002285 297.50 659.52)" d="M-3090.8 13091.4L-1582.8 13091.4L-1403.1 12084.6L-2911.1 12084.6z" filter="url(#g61)"/>
<path transform="matrix(0.07944 0 0.00473 -0.002285 416.50 659.52)" d="M-1533.0 13091.4L-24.9 13091.4L35.0 12084.6L-1473.1 12084.6z" filter="url(#g61)"/>
<path transform="matrix(0.07944 0 -0.00473 -0.002285 535.50 659.52)" d="M24.9 13091.4L1533.0 13091.4L1473.1 12084.6L-35.0 12084.6z" filter="url(#g61)"/>
<path transform="matrix(0.07944 0 -0.01418 -0.002285 654.50 659.52)" d="M1582.8 13091.4L3090.8 13091.4L2911.1 12084.6L1403.1 12084.6z" filter="url(#g61)"/>
<path transform="matrix(0.07944 0 -0.02363 -0.002285 773.50 659.52)" d="M3140.7 13091.4L4648.7 13091.4L4349.2 12084.6L2841.1 12084.6z" filter="url(#g61)"/>
<path transform="matrix(0.07944 0 -0.03309 -0.002285 892.50 659.52)" d="M4698.5 13091.4L6206.6 13091.4L5787.3 12084.6L4279.2 12084.6z" filter="url(#g61)"/>
<path transform="matrix(0.07530 0 0.03136 -0.002052 59.50 656.52)" d="M-6560.3 13841.0L-4969.3 13841.0L-4502.5 12720.4L-6093.6 12720.4z" filter="url(#g62)"/>
<path transform="matrix(0.07530 0 0.02240 -0.002052 178.50 656.52)" d="M-4913.2 13841.0L-3322.2 13841.0L-2988.8 12720.4L-4579.8 12720.4z" filter="url(#g62)"/>
<path transform="matrix(0.07530 0 0.01344 -0.002052 297.50 656.52)" d="M-3266.1 13841.0L-1675.1 13841.0L-1475.1 12720.4L-3066.1 12720.4z" filter="url(#g62)"/>
<path transform="matrix(0.07530 0 0.00448 -0.002052 416.50 656.52)" d="M-1619.1 13841.0L-28.0 13841.0L38.7 12720.4L-1552.4 12720.4z" filter="url(#g62)"/>
<path transform="matrix(0.07530 0 -0.00448 -0.002052 535.50 656.52)" d="M28.0 13841.0L1619.1 13841.0L1552.4 12720.4L-38.7 12720.4z" filter="url(#g62)"/>
<path transform="matrix(0.07530 0 -0.01344 -0.002052 654.50 656.52)" d="M1675.1 13841.0L3266.1 13841.0L3066.1 12720.4L1475.1 12720.4z" filter="url(#g62)"/>
<path transform="matrix(0.07530 0 -0.02240 -0.002052 773.50 656.52)" d="M3322.2 13841.0L4913.2 13841.0L4579.8 12720.4L2988.8 12720.4z" filter="url(#g62)"/>
<path transform="matrix(0.07530 0 -0.03136 -0.002052 892.50 656.52)" d="M4969.3 13841.0L6560.3 13841.0L6093.6 12720.4L4502.5 12720.4z" filter="url(#g62)"/>
<path transform="matrix(0.07115 0 0.02964 -0.001833 59.50 653.52)" d="M-6956.7 14681.6L-5273.0 14681.6L-4750.4 13426.7L-6434.0 13426.7z" filter="url(#g63)"/>
<path transform="matrix(0.07115 0 0.02117 -0.001833 178.50 653.52)" d="M-5209.6 14681.6L-3525.9 14681.6L-3152.6 13426.7L-4836.3 13426.7z" filter="url(#g63)"/>
<path transform="matrix(0.07115 0 0.01270 -0.001833 297.50 653.52)" d="M-3462.5 14681.6L-1778.8 14681.6L-1554.8 13426.7L-3238.5 13426.7z" filter="url(#g63)"/>
<path transform="matrix(0.07115 0 0.00423 -0.001833 416.50 653.52)" d="M-1715.4 14681.6L-31.7 14681.6L43.0 13426.7L-1640.7 13426.7z" filter="url(#g63)"/>
<path transform="matrix(0.07115 0 -0.00423 -0.001833 535.50 653.52)" d="M31.7 14681.6L1715.4 14681.6L1640.7 13426.7L-43.0 13426.7z" filter="url(#g63)"/>
<path transform="matrix(0.07115 0 -0.01270 -0.001833 654.50 653.52)" d="M1778.8 14681.6L3462.5 14681.6L3238.5 13426.7L1554.8 13426.7z" filter="url(#g63)"/>
<path transform="matrix(0.07115 0 -0.02117 -0.001833 773.50 653.52)" d="M3525.9 14681.6L5209.6 14681.6L4836.3 13426.7L3152.6 13426.7z" filter="url(#g63)"/>
<path transform="matrix(0.07115 0 -0.02964 -0.001833 892.50 653.52)" d="M5273.0 14681.6L6956.7 14681.6L6434.0 13426.7L4750.4 13426.7z" filter="url(#g63)"/>
<path transform="matrix(0.06701 0 0.02791 -0.001625 59.50 650.52)" d="M-7404.1 15630.7L-5616.3 15630.7L-5026.9 14215.7L-6814.7 14215.7z" filter="url(#g64)"/>
<path transform="matrix(0.06701 0 0.01994 -0.001625 178.50 650.52)" d="M-5544.0 15630.7L-3756.2 15630.7L-3335.3 14215.7L-5123.1 14215.7z" filter="url(#g64)"/>
<path transform="matrix(0.06701 0 0.01196 -0.001625 297.50 650.52)" d="M-3684.0 15630.7L-1896.2 15630.7L-1643.6 14215.7L-3431.4 14215.7z" filter="url(#g64)"/>
<path transform="matrix(0.06701 0 0.00399 -0.001625 416.50 650.52)" d="M-1823.9 15630.7L-36.1 15630.7L48.1 14215.7L-1739.7 14215.7z" filter="url(#g64)"/>
<path transform="matrix(0.06701 0 -0.00399 -0.001625 535.50 650.52)" d="M36.1 15630.7L1823.9 15630.7L1739.7 14215.7L-48.1 14215.7z" filter="url(#g64)"/>
<path transform="matrix(0.06701 0 -0.01196 -0.001625 654.50 650.52)" d="M1896.2 15630.7L3684.0 15630.7L3431.4 14215.7L1643.6 14215.7z" filter="url(#g64)"/>
<path transform="matrix(0.06701 0 -0.01994 -0.001625 773.50 650.52)" d="M3756.2 15630.7L5544.0 15630.7L5123.1 14215.7L3335.3 14215.7z" filter="url(#g64)"/>
<path transform="matrix(0.06701 0 -0.02791 -0.001625 892.50 650.52)" d="M5616.3 15630.7L7404.1 15630.7L6814.7 14215.7L5026.9 14215.7z" filter="url(#g64)"/>
<path transform="matrix(0.06287 0 0.02618 -0.001431 59.50 647.52)" d="M-7912.8 16710.6L-6007.2 16710.6L-5337.6 15103.0L-7243.2 15103.0z" filter="url(#g65)"/>
<path transform="matrix(0.06287 0 0.01870 -0.001431 178.50 647.52)" d="M-5924.2 16710.6L-4018.6 16710.6L-3540.3 15103.0L-5446.0 15103.0z" filter="url(#g65)"/>
<path transform="matrix(0.06287 0 0.01122 -0.001431 297.50 647.52)" d="M-3935.7 16710.6L-2030.0 16710.6L-1743.1 15103.0L-3648.7 15103.0z" filter="url(#g65)"/>
<path transform="matrix(0.06287 0 0.00374 -0.001431 416.50 647.52)" d="M-1947.1 16710.6L-41.5 16710.6L54.2 15103.0L-1851.4 15103.0z" filter="url(#g65)"/>
<path transform="matrix(0.06287 0 -0.00374 -0.001431 535.50 647.52)" d="M41.5 16710.6L1947.1 16710.6L1851.4 15103.0L-54.2 15103.0z" filter="url(#g65)"/>
<path transform="matrix(0.06287 0 -0.01122 -0.001431 654.50 647.52)" d="M2030.0 16710.6L3935.7 16710.6L3648.7 15103.0L1743.1 15103.0z" filter="url(#g65)"/>
<path transform="matrix(0.06287 0 -0.01870 -0.001431 773.50 647.52)" d="M4018.6 16710.6L5924.2 16710.6L5446.0 15103.0L3540.3 15103.0z" filter="url(#g65)"/>
<path transform="matrix(0.06287 0 -0.02618 -0.001431 892.50 647.52)" d="M6007.2 16710.6L7912.8 16710.6L7243.2 15103.0L5337.6 15103.0z" filter="url(#g65)"/>
<path transform="matrix(0.05872 0 0.02446 -0.001248 59.50 644.52)" d="M-8496.4 17950.5L-6456.3 17950.5L-5688.9 16108.0L-7729.0 16108.0z" filter="url(#g66)"/>
<path transform="matrix(0.05872 0 0.01747 -0.001248 178.50 644.52)" d="M-6360.3 17950.5L-4320.2 17950.5L-3772.1 16108.0L-5812.2 16108.0z" filter="url(#g66)"/>
<path transform="matrix(0.05872 0 0.01048 -0.001248 297.50 644.52)" d="M-4224.2 17950.5L-2184.1 17950.5L-1855.2 16108.0L-3895.3 16108.0z" filter="url(#g66)"/>
<path transform="matrix(0.05872 0 0.00349 -0.001248 416.50 644.52)" d="M-2088.1 17950.5L-48.0 17950.5L61.6 16108.0L-1978.5 16108.0z" filter="url(#g66)"/>
<path transform="matrix(0.05872 0 -0.00349 -0.001248 535.50 644.52)" d="M48.0 17950.5L2088.1 17950.5L1978.5 16108.0L-61.6 16108.0z" filter="url(#g66)"/>
<path transform="matrix(0.05872 0 -0.01048 -0.001248 654.50 644.52)" d="M2184.1 17950.5L4224.2 17950.5L3895.3 16108.0L1855.2 16108.0z" filter="url(#g66)"/>
<path transform="matrix(0.05872 0 -0.01747 -0.001248 773.50 644.52)" d="M4320.2 17950.5L6360.3 17950.5L5812.2 16108.0L3772.1 16108.0z" filter="url(#g66)"/>
<path transform="matrix(0.05872 0 -0.02446 -0.001248 892.50 644.52)" d="M6456.3 17950.5L8496.4 17950.5L7729.0 16108.0L5688.9 16108.0z" filter="url(#g66)"/>
<path transform="matrix(0.05458 0 0.02273 -0.001078 59.50 641.52)" d="M-9172.8 19388.6L-6977.8 19388.6L-6089.5 17255.7L-8284.5 17255.7z" filter="url(#g67)"/>
<path transform="matrix(0.05458 0 0.01624 -0.001078 178.50 641.52)" d="M-6865.6 19388.6L-4670.6 19388.6L-4036.1 17255.7L-6231.1 17255.7z" filter="url(#g67)"/>
<path transform="matrix(0.05458 0 0.00974 -0.001078 297.50 641.52)" d="M-4558.4 19388.6L-2363.4 19388.6L-1982.6 17255.7L-4177.6 17255.7z" filter="url(#g67)"/>
<path transform="matrix(0.05458 0 0.00325 -0.001078 416.50 641.52)" d="M-2251.1 19388.6L-56.1 19388.6L70.8 17255.7L-2124.2 17255.7z" filter="url(#g67)"/>
<path transform="matrix(0.05458 0 -0.00325 -0.001078 535.50 641.52)" d="M56.1 19388.6L2251.1 19388.6L2124.2 17255.7L-70.8 17255.7z" filter="url(#g67)"/>
<path transform="matrix(0.05458 0 -0.00974 -0.001078 654.50 641.52)" d="M2363.4 19388.6L4558.4 19388.6L4177.6 17255.7L1982.6 17255.7z" filter="url(#g67)"/>
<path transform="matrix(0.05458 0 -0.01624 -0.001078 773.50 641.52)" d="M4670.6 19388.6L6865.6 19388.6L6231.1 17255.7L4036.1 17255.7z" filter="url(#g67)"/>
<path transform="matrix(0.05458 0 -0.02273 -0.001078 892.50 641.52)" d="M6977.8 19388.6L9172.8 19388.6L8284.5 17255.7L6089.5 17255.7z" filter="url(#g67)"/>
</g>
<rect x="0" y="598" width="952" height="366" fill="url(#gfade)"/>
</g>
</svg>
<svg class="abs" style="left:0;top:0" width="952" height="964" viewBox="964 86 952 964">
<path d="M1172.5 456.6L1381.9 512.2" fill="none" stroke="#fff" stroke-width="1.1" stroke-linecap="butt" stroke-linejoin="round" />
<path d="M1381.9 512.2L1629.7 484.3" fill="none" stroke="#fff" stroke-width="1.1" stroke-linecap="butt" stroke-linejoin="round" />
<path d="M1381.9 512.2L1381.9 611.0" fill="none" stroke="#fff" stroke-width="1.1" stroke-linecap="butt" stroke-linejoin="round" />
<path d="M1165.7 588.0L1381.9 611.0" fill="none" stroke="#fff" stroke-width="1.1" stroke-linecap="butt" stroke-linejoin="round" />
<path d="M1381.9 611.0L1630.8 602.6" fill="none" stroke="#fff" stroke-width="1.1" stroke-linecap="butt" stroke-linejoin="round" />
<path d="M1255.2 495.8L1255.2 516.9" fill="none" stroke="#9c9c9c" stroke-width="3" stroke-linecap="butt" stroke-linejoin="round" />
<path d="M1255.2 497.1L1297.5 505.4" fill="none" stroke="#a9a9a9" stroke-width="2.2" stroke-linecap="round" stroke-linejoin="round" />
<path d="M1328.2 516.2L1380.5 522.3" fill="none" stroke="#a6a6a6" stroke-width="2.4" stroke-linecap="round" stroke-linejoin="round" />
<path d="M1254.3 518.7L1328.2 531.4" fill="none" stroke="#9f9f9f" stroke-width="2.4" stroke-linecap="round" stroke-linejoin="round" />
<path d="M1248.5 466.1Q1217.5 479.6 1247.1 494.2L1247.1 488.8Q1234.8 481.4 1249.8 472.9z" fill="#8a8a8a" />
<path d="M1247.1 514.4Q1213.3 526.5 1253.4 542.5L1250.7 536.4Q1232.6 528.3 1247.1 520.5z" fill="#8b8b8b" />
<path d="M1528.4 459.2Q1538.9 475.1 1587.2 487.3L1581.2 491.7Q1544.3 487.7 1528.9 467.0z" fill="#9a9a9a" />
<path d="M1529.1 466.1Q1542.5 485.0 1580.3 491.3L1577.6 493.5Q1544.3 490.4 1529.1 470.6z" fill="#858585" />
<path d="M1584.9 492.2Q1576.7 505.7 1530.7 510.8L1540.7 514.8Q1573.1 511.2 1587.6 494.9z" fill="#868686" />
<path d="M1347.1 554.4L1330.4 588.7" fill="none" stroke="#bbbbbb" stroke-width="9" stroke-linecap="round" stroke-linejoin="round" />
<path d="M1469.4 547.2L1487.8 592.3" fill="none" stroke="#b8b8b8" stroke-width="9" stroke-linecap="round" stroke-linejoin="round" />
<path d="M1380.5 472.7L1433.4 465.2 1433.4 502.5 1380.5 507.9z" fill="#878787" />
<path d="M1433.4 465.2L1452.3 472.6 1452.3 501.4 1433.4 502.5z" fill="#bdbdbd" />
<path d="M1373.3 509.4L1454.1 502.1 1459.5 523.8 1378.7 523.8z" fill="#8f8f8f" />
<path d="M1385.4 509.4L1385.4 531.0" fill="none" stroke="#a9a9a9" stroke-width="4" stroke-linecap="butt" stroke-linejoin="round" />
<path d="M1400.0 498.5L1410.8 499.4" fill="none" stroke="#cfcfcf" stroke-width="2" stroke-linecap="round" stroke-linejoin="round" />
<path d="M1253.9 501.4L1304.8 508.3 1313.8 509.4 1299.4 511.0 1253.5 503.2z" fill="#262626" />
<ellipse cx="1312.3" cy="502.7" rx="4.8" ry="3.2" fill="#1c1c1c" />
<path d="M1297.5 514.8Q1297.5 509.4 1313.8 509.4Q1330.0 509.4 1330.0 514.8L1329.1 523.8Q1313.8 528.3 1298.4 523.8z" fill="#232323" />
<path d="M1298.4 522.3Q1313.8 527.4 1329.1 522.3L1328.7 525.9Q1313.8 530.3 1299.0 525.9z" fill="#cdcdcd" />
<path d="M1297.5 527.4L1328.2 528.8 1346.2 531.4 1339.0 533.7 1304.8 531.0z" fill="#c6c6c6" />
<path d="M1328.2 528.8L1380.5 525.6 1382.3 528.3 1346.2 531.4z" fill="#d9d9d9" />
<path d="M1470.0 526.3L1501.0 519.6 1515.4 518.0 1540.7 516.9 1566.8 518.4 1560.5 520.2 1540.7 523.8 1515.4 522.3 1501.0 522.3z" fill="#1e1e1e" />
<ellipse cx="1507.8" cy="516.9" rx="4.8" ry="2.8" fill="#1b1b1b" />
<path d="M1494.1 523.8Q1494.1 518.4 1507.3 518.4Q1520.5 518.4 1520.5 523.8L1519.7 531.0Q1507.3 534.6 1494.9 531.0z" fill="#1e1e1e" />
<path d="M1491.6 532.1Q1507.3 536.4 1521.9 532.1L1521.9 534.2Q1507.3 538.2 1491.6 534.6z" fill="#cacaca" />
<path d="M1487.5 537.5L1519.9 534.6 1538.9 538.2 1508.2 543.3z" fill="#9d9d9d" />
<path d="M1247.1 515.1L1292.1 511.7 1366.1 501.2" fill="none" stroke="#8f8f8f" stroke-width="3.6" stroke-linecap="round" stroke-linejoin="round" />
<path d="M1292.1 511.5L1321.0 505.7 1364.3 498.5 1365.4 500.7 1328.2 509.7 1293.9 513.7z" fill="#2e2e2e" />
<path d="M1526.2 512.2L1587.6 531.0" fill="none" stroke="#9c9c9c" stroke-width="3.4" stroke-linecap="round" stroke-linejoin="round" />
<path d="M1250.7 538.6L1331.8 554.8" fill="none" stroke="#8d8d8d" stroke-width="3.6" stroke-linecap="round" stroke-linejoin="round" />
<path d="M1253.4 536.8L1292.1 531.0 1328.2 527.4" fill="none" stroke="#858585" stroke-width="3" stroke-linecap="round" stroke-linejoin="round" />
<path d="M1332.2 516.9L1332.2 554.8" fill="none" stroke="#a2a2a2" stroke-width="4" stroke-linecap="butt" stroke-linejoin="round" />
<path d="M1328.2 555.7L1342.6 556.2" fill="none" stroke="#a8a8a8" stroke-width="3" stroke-linecap="round" stroke-linejoin="round" />
<path d="M1488.4 538.2L1537.1 552.6" fill="none" stroke="#8a8a8a" stroke-width="4" stroke-linecap="round" stroke-linejoin="round" />
<path d="M1537.1 552.6L1587.6 536.4" fill="none" stroke="#8f8f8f" stroke-width="4" stroke-linecap="round" stroke-linejoin="round" />
<path d="M1477.5 553.7L1537.1 550.1" fill="none" stroke="#9b9b9b" stroke-width="2.4" stroke-linecap="round" stroke-linejoin="round" />
<path d="M1539.2 513.3L1539.2 550.8" fill="none" stroke="#909090" stroke-width="2.4" stroke-linecap="butt" stroke-linejoin="round" />
<path d="M1250.7 467.3L1250.7 536.8" fill="none" stroke="#a6a6a6" stroke-width="7" stroke-linecap="butt" stroke-linejoin="round" />
<path d="M1248.5 467.3L1248.5 536.8" fill="none" stroke="#969696" stroke-width="2.4" stroke-linecap="butt" stroke-linejoin="round" />
<path d="M1246.7 465.7L1256.1 466.6 1256.1 469.7 1246.7 468.8z" fill="#b2b2b2" />
<path d="M1246.1 514.0L1256.1 514.8 1256.1 518.7 1246.1 518.0z" fill="#a9a9a9" />
<path d="M1585.8 488.1L1585.8 535.0" fill="none" stroke="#a7a7a7" stroke-width="5.4" stroke-linecap="butt" stroke-linejoin="round" />
<path d="M1587.9 488.1L1587.9 535.0" fill="none" stroke="#979797" stroke-width="1.6" stroke-linecap="butt" stroke-linejoin="round" />
<path d="M1524.8 459.2L1524.8 509.7" fill="none" stroke="#a9a9a9" stroke-width="6" stroke-linecap="butt" stroke-linejoin="round" />
<path d="M1522.6 459.2L1522.6 509.7" fill="none" stroke="#9a9a9a" stroke-width="1.8" stroke-linecap="butt" stroke-linejoin="round" />
<path d="M1369.7 447.5L1370.0 503.6" fill="none" stroke="#a8a8a8" stroke-width="5.6" stroke-linecap="butt" stroke-linejoin="round" />
<path d="M1372.4 447.5L1372.8 503.6" fill="none" stroke="#9a9a9a" stroke-width="1.6" stroke-linecap="butt" stroke-linejoin="round" />
<path d="M1248.0 467.5L1331.8 457.1 1369.7 447.1" fill="none" stroke="#8b8b8b" stroke-width="4.2" stroke-linecap="round" stroke-linejoin="round" />
<path d="M1248.9 466.4L1331.8 455.8 1369.3 446.1" fill="none" stroke="#a3a3a3" stroke-width="1.4" stroke-linecap="round" stroke-linejoin="round" />
<path d="M1370.0 447.5L1400.0 450.2 1463.1 453.1 1524.8 459.2" fill="none" stroke="#8e8e8e" stroke-width="3.6" stroke-linecap="round" stroke-linejoin="round" />
<path d="M1370.0 446.6L1400.0 449.1 1463.1 452.0 1524.8 458.1" fill="none" stroke="#aaaaaa" stroke-width="1.6" stroke-linecap="round" stroke-linejoin="round" />
<path d="M1367.0 502.1L1370.6 503.9" fill="none" stroke="#b0b0b0" stroke-width="4" stroke-linecap="round" stroke-linejoin="round" />
<path d="M1401.4 479.6Q1403.6 475.1 1419.8 479.1Q1436.1 484.1 1438.2 489.5L1437.0 494.6Q1416.2 489.5 1401.4 479.6z" fill="#1c006e" />
<path d="M1390.4 502.5L1400.0 497.1 1421.6 491.7 1438.8 494.9 1421.6 501.8 1400.3 504.3z" fill="#2a00b6" />
<path d="M1441.1 494.6L1501.0 496.0 1475.7 499.6 1446.0 500.3z" fill="#3700ea" />
<path d="M1419.5 503.9Q1419.5 497.6 1434.3 497.6Q1448.7 497.6 1448.7 503.9L1448.7 510.8L1419.5 510.8z" fill="#2c00c4" />
<path d="M1419.5 506.6L1448.7 506.6 1448.7 510.8 1419.5 510.8z" fill="#3b3bd0" opacity="0.55"/>
<path d="M1339.9 527.6L1380.5 525.6 1398.5 524.0 1382.3 527.0 1346.2 529.4z" fill="#2400a4" />
<path d="M1366.4 501.6L1400.0 504.1 1526.2 512.2" fill="none" stroke="#a1a1a1" stroke-width="3.4" stroke-linecap="round" stroke-linejoin="round" />
<path d="M1366.4 500.7L1400.0 503.2 1526.2 511.3" fill="none" stroke="#bdbdbd" stroke-width="1.2" stroke-linecap="round" stroke-linejoin="round" />
<path d="M1334.5 540.4Q1335.4 535.5 1362.5 532.8L1420.0 526.8L1452.3 527.4Q1484.8 533.7 1487.5 540.4Q1484.8 546.9 1475.7 548.1Q1472.1 541.8 1452.3 540.0L1420.0 538.2L1367.9 538.6Q1344.4 540.4 1339.9 546.3Q1333.6 544.5 1334.5 540.4z" fill="#c4c4c4" />
<path d="M1358.9 531.0L1403.9 527.4 1452.3 528.3 1459.5 523.8 1378.7 523.8z" fill="#b1b1b1" />
<path d="M1364.3 538.7L1454.1 540.4 1459.5 568.9 1369.7 572.5z" fill="#8b8b8b" />
<path d="M1364.3 538.7L1382.3 538.7 1382.3 562.6 1364.3 556.2z" fill="#787878" />
<path d="M1385.9 555.3L1408.5 554.4 1408.5 572.5 1385.9 572.8z" fill="#b0b0b0" />
<path d="M1408.5 556.2L1443.3 554.4 1443.3 567.1 1408.5 568.9z" fill="#9f9f9f" />
<path d="M1375.1 540.4L1450.5 541.8 1450.5 549.0 1375.1 547.2z" fill="#a9a9a9" />
<path d="M1376.7 540.4L1376.7 548.1" fill="none" stroke="#d8d8d8" stroke-width="0.8" stroke-linecap="butt" stroke-linejoin="round" />
<path d="M1383.2 540.4L1383.2 548.1" fill="none" stroke="#d8d8d8" stroke-width="0.8" stroke-linecap="butt" stroke-linejoin="round" />
<path d="M1389.7 540.4L1389.7 548.1" fill="none" stroke="#d8d8d8" stroke-width="0.8" stroke-linecap="butt" stroke-linejoin="round" />
<path d="M1396.2 540.4L1396.2 548.1" fill="none" stroke="#d8d8d8" stroke-width="0.8" stroke-linecap="butt" stroke-linejoin="round" />
<path d="M1402.7 540.4L1402.7 548.1" fill="none" stroke="#d8d8d8" stroke-width="0.8" stroke-linecap="butt" stroke-linejoin="round" />
<path d="M1409.2 540.4L1409.2 548.1" fill="none" stroke="#d8d8d8" stroke-width="0.8" stroke-linecap="butt" stroke-linejoin="round" />
<path d="M1415.7 540.4L1415.7 548.1" fill="none" stroke="#d8d8d8" stroke-width="0.8" stroke-linecap="butt" stroke-linejoin="round" />
<path d="M1422.2 540.4L1422.2 548.1" fill="none" stroke="#d8d8d8" stroke-width="0.8" stroke-linecap="butt" stroke-linejoin="round" />
<path d="M1428.7 540.4L1428.7 548.1" fill="none" stroke="#d8d8d8" stroke-width="0.8" stroke-linecap="butt" stroke-linejoin="round" />
<path d="M1435.1 540.4L1435.1 548.1" fill="none" stroke="#d8d8d8" stroke-width="0.8" stroke-linecap="butt" stroke-linejoin="round" />
<path d="M1441.6 540.4L1441.6 548.1" fill="none" stroke="#d8d8d8" stroke-width="0.8" stroke-linecap="butt" stroke-linejoin="round" />
<path d="M1448.1 540.4L1448.1 548.1" fill="none" stroke="#d8d8d8" stroke-width="0.8" stroke-linecap="butt" stroke-linejoin="round" />
<path d="M1454.6 540.4L1454.6 548.1" fill="none" stroke="#d8d8d8" stroke-width="0.8" stroke-linecap="butt" stroke-linejoin="round" />
<path d="M1461.1 540.4L1461.1 548.1" fill="none" stroke="#d8d8d8" stroke-width="0.8" stroke-linecap="butt" stroke-linejoin="round" />
<path d="M1372.4 538.2L1373.3 572.5" fill="none" stroke="#a5a5a5" stroke-width="2.6" stroke-linecap="butt" stroke-linejoin="round" />
<path d="M1422.0 527.4L1428.9 579.7" fill="none" stroke="#ececec" stroke-width="1.8" stroke-linecap="round" stroke-linejoin="round" />
<circle cx="1435.2" cy="566.2" r="3.300" fill="#d6d6d6" stroke="#7c7c7c" stroke-width="1.200"/>
<path d="M1353.5 575.2Q1382.3 571.6 1400.0 572.5L1461.3 569.2L1472.1 572.8Q1470.3 580.0 1436.1 581.8Q1391.3 583.3 1360.7 579.3z" fill="#7f7f7f" />
<path d="M1357.1 576.1L1382.3 574.3 1400.0 574.3 1459.5 571.6" fill="none" stroke="#a5a5a5" stroke-width="1.6" stroke-linecap="butt" stroke-linejoin="round" stroke-dasharray="2.200 1.800"/>
<path d="M1362.5 578.6L1391.3 580.0 1418.0 579.7" fill="none" stroke="#9a9a9a" stroke-width="1.4" stroke-linecap="butt" stroke-linejoin="round" stroke-dasharray="1.600 2"/>
<path d="M1430.7 574.3L1449.6 576.1 1447.8 580.0 1428.9 578.2z" fill="#0a0a0a" />
<path d="M1455.0 578.2L1469.4 577.5 1470.0 583.3 1455.5 583.7z" fill="#a5a5a5" />
<path d="M1397.6 580.0L1398.5 600.4" fill="none" stroke="#787878" stroke-width="3" stroke-linecap="round" stroke-linejoin="round" />
<path d="M1471.2 573.4L1484.0 598.6" fill="none" stroke="#808080" stroke-width="0.8" stroke-linecap="round" stroke-linejoin="round" />
<path d="M1172.5 456.6L1461.8 399.0" fill="none" stroke="#fff" stroke-width="1.1" stroke-linecap="butt" stroke-linejoin="round" />
<path d="M1461.8 399.0L1629.7 484.3" fill="none" stroke="#fff" stroke-width="1.1" stroke-linecap="butt" stroke-linejoin="round" />
<path d="M1172.5 456.6L1165.7 588.0" fill="none" stroke="#fff" stroke-width="1.1" stroke-linecap="butt" stroke-linejoin="round" />
<path d="M1629.7 484.3L1630.8 602.6" fill="none" stroke="#fff" stroke-width="1.1" stroke-linecap="butt" stroke-linejoin="round" />
<path d="M1461.8 399.0L1461.8 566.9" fill="none" stroke="#fff" stroke-width="1.1" stroke-linecap="butt" stroke-linejoin="round" />
<path d="M1165.7 588.0L1461.8 566.9" fill="none" stroke="#fff" stroke-width="1.1" stroke-linecap="butt" stroke-linejoin="round" />
<path d="M1461.8 566.9L1630.8 602.6" fill="none" stroke="#fff" stroke-width="1.1" stroke-linecap="butt" stroke-linejoin="round" />
<path d="M1906.700 960L1881.700 1050" stroke="#9a9a9a" stroke-width="0.700" fill="none"/>
</svg>
<!-- left side tabs -->
<svg class="abs" style="left:0;top:28px" width="34" height="292" viewBox="0 0 34 292">
<path fill="#2e2e2e" d="M0 0.500L32 16.500V80.500L0 96.500zM0 96.500L32 112.500V176.500L0 192.500zM0 192.500L32 208.500V272.500L0 288.500z"/>
<g fill="#d2d2d2"><rect x="5" y="35.800" width="23" height="3.800" rx="1.900"/><rect x="5" y="45.500" width="23" height="3.800" rx="1.900"/><rect x="5" y="55.300" width="23" height="3.800" rx="1.900"/></g>
<g fill="none" stroke="#c8c8c8" stroke-width="1.300"><path d="M7.500 132.500v17.500h20.500M7.500 138h20.500M12.500 138v17h15.500M12.500 144h15.500"/></g>
<path fill="#e2e2e2" d="M14 229h5v8.500h8.500v5H19v8.500h-5v-8.500H5.500v-5H14z"/>
</svg>
<!-- toolbar -->
<div class="gbtn" style="left:247px;width:46px"><svg class="abs" style="left:0;top:0" width="46" height="46"><rect x="15.500" y="13" width="5.600" height="19" fill="#d9d9d9"/><rect x="24.900" y="13" width="5.600" height="19" fill="#d9d9d9"/></svg></div>
<div class="gbtn gtime" style="left:298px;width:190px"><div style="position:absolute;right:7px;top:3px">Real Time: 00:06:19.390
Sim Time: 00:06:17.660</div></div>
<div class="gbtn" style="left:501px;width:146px;overflow:hidden"><div class="abs" style="left:0;top:0;width:48px;height:46px;background:#00a9dc"></div><div class="abs" style="left:97px;top:0;width:1px;height:46px;background:#2b2b2b"></div>
<svg class="abs" style="left:0;top:0" width="146" height="46">
<path fill="#d2d2d2" d="M13.500 12.800L30.900 18.800L26.800 21.600L35 26L33.400 29L25 24.600L20.700 27.400z"/>
<g fill="none" stroke="#d6d6d6" stroke-width="1.600"><path d="M65 21.200h16M73 13.200v16"/></g>
<path fill="#d6d6d6" d="M73 11l3 4h-6zM73 31.400l3-4h-6zM62.800 21.200l4-3v6zM83.200 21.200l-4-3v6z"/>
<g fill="none" stroke="#d6d6d6" stroke-width="1.900"><path d="M113.400 24a8.600 8 0 0 1 8.600-10.800h3M130.400 18.400a8.600 8 0 0 1-8.600 10.800h-3"/></g>
<path fill="#d6d6d6" d="M129 13.200l-4.800-3.600v7.200zM114.800 29.200l4.800-3.600v7.200z"/>
</svg></div>
<div class="gbtn" style="left:658px;width:46px"><svg class="abs" style="left:0;top:0" width="45" height="46"><path fill="#8e8e8e" d="M12 15.500l13-4 10 4.500-12.500 3.500z"/><path fill="#737373" d="M12 15.500l10.500 4v13.500L12 28.500z"/><path fill="#bbbbbb" d="M22.500 19.500l12.500-3.500v13.500l-12.500 3.500z"/></svg></div>
<div class="gbtn" style="left:706px;width:46px"><svg class="abs" style="left:0;top:0" width="45" height="46"><defs><radialGradient id="sph" cx="0.550" cy="0.400" r="0.600"><stop offset="0" stop-color="#dedede"/><stop offset="0.180" stop-color="#aeaeae"/><stop offset="0.550" stop-color="#8a8a8a"/><stop offset="1" stop-color="#6c6c6c"/></radialGradient></defs><circle cx="22.500" cy="22.500" r="11.500" fill="url(#sph)"/></svg></div>
<div class="gbtn" style="left:754px;width:46px"><svg class="abs" style="left:0;top:0" width="45" height="46"><defs><linearGradient id="cyl" x1="0" x2="1"><stop offset="0" stop-color="#6f6f6f"/><stop offset="0.600" stop-color="#a2a2a2"/><stop offset="1" stop-color="#8a8a8a"/></linearGradient></defs><path fill="url(#cyl)" d="M14.500 14.500v18a8 2.600 0 0 0 16 0v-18z"/><ellipse cx="22.500" cy="14.500" rx="8" ry="2.600" fill="#939393"/></svg></div>
<div class="gbtn" style="left:802px;width:46px"><svg class="abs" style="left:0;top:0" width="45" height="46"><g transform="translate(22.500 23) scale(0.880) translate(-22.500 -23)"><circle cx="22.500" cy="23" r="5.500" fill="#dcdcdc"/><g stroke="#c8c8c8" stroke-width="1.200"><path d="M22.500 11v5M22.500 30v5M10.500 23h5M29.500 23h5M14 14.500l3.500 3.500M27.500 28l3.500 3.500M31 14.500l-3.500 3.500M17.500 28L14 31.500"/></g><g fill="#d8d8d8"><path d="M22.500 10l2 3.500h-4zM22.500 36l2-3.500h-4zM9.500 23l3.500-2v4zM35.500 23l-3.500-2v4z"/><path d="M13 13.500l3.800.900-2.900 2.900zM32 13.500l-.900 3.800-2.900-2.900zM13 32.500l.900-3.800 2.900 2.900zM32 32.500l-3.800-.900 2.900-2.900z"/></g></g></svg></div>
<div class="gbtn" style="left:850px;width:46px"><svg class="abs" style="left:0;top:0" width="45" height="46"><circle cx="17" cy="17.500" r="5.800" fill="#dcdcdc"/><g stroke="#c8c8c8" stroke-width="1.200"><path d="M21 18l12-2M21 20l13 3.500M20 22l11 8.500M18 23l5 9"/></g><g fill="#d8d8d8"><path d="M36 15.500l-4.200 2.300-.500-3.500zM36.500 24l-4.500.700 1-3.500zM33 32l-4.500-1 2.300-2.800zM24.500 34.500l-3.500-2.800 3.200-1.600z"/></g></svg></div>
<div class="gbtn" style="left:898px;width:46px"><svg class="abs" style="left:0;top:0" width="45" height="46"><g stroke="#d0d0d0" stroke-width="1.500"><path d="M13 21l17-9.500M13 30l17-9.500M23 35l12-7"/></g><g fill="#d8d8d8"><path d="M10.500 22.500l2.500-4.500 2 3.600zM10.500 31.500l2.500-4.500 2 3.600zM20.500 36.500l2.500-4.500 2 3.600z"/></g></svg></div>
</div>
</div>
</div>
<!-- top strip + separators -->
<div class="abs" style="left:0;top:0;width:1920px;height:2px;background:#3b3b39"></div>
<div class="abs" style="left:0;top:2px;width:957px;height:1px;background:#a2a2a2"></div>
<div class="abs" style="left:0;top:629px;width:957px;height:2px;background:#9a9a9a"></div>
<div class="abs" style="left:960px;top:2px;width:960px;height:1px;background:#5c5c5c"></div>
<div class="abs" style="left:0;top:2px;width:2px;height:46px;background:linear-gradient(90deg,#9c9c9c 0,#9c9c9c 1px,#8c8c8c 1px)"></div>
<div class="abs" style="left:0;top:48px;width:2px;height:581px;background:#5e5e5e"></div>
<div class="abs" style="left:0;top:629px;width:2px;height:48px;background:#999"></div>
<div class="abs" style="left:0;top:677px;width:2px;height:377px;background:#5e5e5e"></div>
<div class="abs" style="left:431px;top:631px;width:1px;height:46px;background:#9c9c9c"></div>
<div class="abs" style="left:430px;top:677px;width:2px;height:375px;background:#4a4a4a"></div>
<div class="abs" style="left:957px;top:2px;width:1px;height:1052px;background:#5a5a5a"></div>
<div class="abs" style="left:958px;top:2px;width:2px;height:1052px;background:#9a9a9a"></div>
<div class="abs" style="left:0;top:1052px;width:957px;height:2px;background:#5a5a5a"></div>
<div class="abs" style="left:414px;top:631px;width:16px;height:419px;background:linear-gradient(90deg,rgba(0,0,0,0),rgba(0,0,0,0.160))"></div>
<div class="abs" style="left:936px;top:631px;width:15px;height:419px;background:linear-gradient(90deg,rgba(0,0,0,0),rgba(0,0,0,0.150))"></div>
<div class="abs" style="left:940px;top:3px;width:17px;height:45px;background:linear-gradient(90deg,rgba(0,0,0,0),rgba(0,0,0,0.170))"></div>
<div class="abs" style="left:951px;top:631px;width:6px;height:46px;background:rgba(0,0,0,0.120)"></div>
<div class="abs" style="left:960px;top:48px;width:1px;height:1006px;background:#585858"></div>

</div>
</body>
</html>
